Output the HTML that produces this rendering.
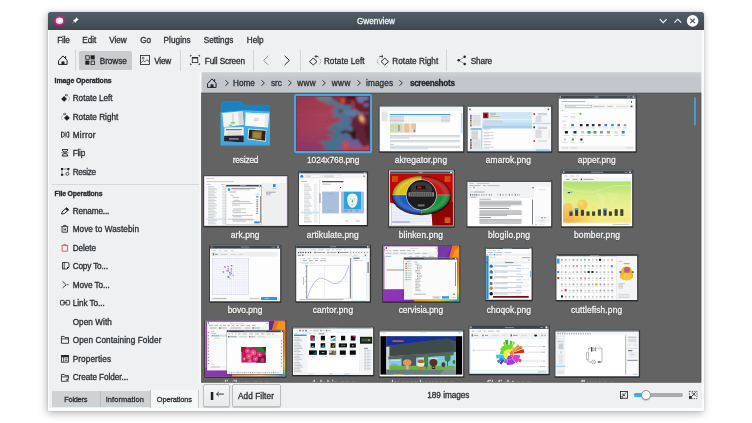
<!DOCTYPE html>
<html><head><meta charset="utf-8"><title>Gwenview</title>
<style>
html,body{margin:0;padding:0;background:#fff;}
body{width:752px;height:423px;position:relative;overflow:hidden;font-family:"Liberation Sans",sans-serif;}
.a{position:absolute;}
.t{position:absolute;white-space:pre;line-height:10px;height:10px;filter:blur(0.3px);-webkit-text-stroke:0.3px;}
svg{position:absolute;overflow:visible;}
#win{left:48px;top:12px;width:656.3px;height:399px;background:#fcfcfc;border-radius:2.5px 2.5px 1px 1px;
 box-shadow:-1px 2px 8px rgba(0,0,0,.30),0 0 2px rgba(0,0,0,.16);}
#tb{left:48px;top:12px;width:656.3px;height:17.8px;border-radius:2.5px 2.5px 0 0;
 background:linear-gradient(#525d66,#465058 65%,#3d464e);}
#content{left:49.3px;top:29.8px;width:652.7px;height:378px;background:#eff0f1;}
.sep{width:1px;background:#d3d4d6;top:50px;height:20.5px;}
.btn{border:1px solid #bcbec0;border-radius:2px;background:linear-gradient(#f4f5f5,#e9eaeb);box-shadow:0 1px 1px rgba(0,0,0,.18);box-sizing:border-box;}
</style></head><body>
<div id="win" class="a"></div>
<div id="tb" class="a"></div>
<div id="content" class="a"></div>

<svg style="left:53px;top:15px" width="13" height="12" viewBox="53 15 13 12"><ellipse cx="59.3" cy="20.9" rx="5.35" ry="4.85" fill="#e6127e"/><ellipse cx="59.5" cy="20.8" rx="3.7" ry="3.25" fill="#dfe3e6"/><ellipse cx="59.8" cy="20.5" rx="2.4" ry="2.0" fill="#f2f4f5"/></svg>
<svg style="left:70.5px;top:17px" width="8" height="8" viewBox="0 0 8 8"><path d="M5.2 0.3 L7.7 2.8 L6.6 3.2 L5.2 4.6 L5.0 6.0 L3.4 4.6 L0.6 7.4 L3.0 4.2 L2.0 3.0 L3.4 2.8 L4.8 1.4 Z" fill="#fcfcfc"/></svg>
<span class="t" style="left:356.90px;top:17.00px;font-size:8.2px;letter-spacing:0.047px;color:#f3f4f5;">Gwenview</span>
<svg style="left:656px;top:14px" width="46" height="14" viewBox="656 14 46 14"><path d="M659.8 19.2 L663.2 22.6 L666.6 19.2" fill="none" stroke="#fcfcfc" stroke-width="1.1"/><path d="M674.4 22.6 L677.8 19.2 L681.2 22.6" fill="none" stroke="#fcfcfc" stroke-width="1.1"/><circle cx="692.6" cy="20.9" r="5.8" fill="#fcfcfc"/><path d="M690.3 18.6 L694.9 23.2 M694.9 18.6 L690.3 23.2" stroke="#3d464e" stroke-width="1.1" fill="none"/></svg>
<span class="t" style="left:57.20px;top:36.00px;font-size:8.2px;letter-spacing:-0.178px;color:#2a2e32;">File</span>
<span class="t" style="left:82.30px;top:36.00px;font-size:8.2px;letter-spacing:-0.058px;color:#2a2e32;">Edit</span>
<span class="t" style="left:109.30px;top:36.00px;font-size:8.2px;letter-spacing:-0.082px;color:#2a2e32;">View</span>
<span class="t" style="left:140.30px;top:36.00px;font-size:8.2px;letter-spacing:-0.269px;color:#2a2e32;">Go</span>
<span class="t" style="left:163.60px;top:36.00px;font-size:8.2px;letter-spacing:0.044px;color:#2a2e32;">Plugins</span>
<span class="t" style="left:203.80px;top:36.00px;font-size:8.2px;letter-spacing:-0.016px;color:#2a2e32;">Settings</span>
<span class="t" style="left:246.80px;top:36.00px;font-size:8.2px;letter-spacing:0.009px;color:#2a2e32;">Help</span>
<div class="a" style="left:78.5px;top:50.6px;width:53.2px;height:19.2px;border-radius:1.5px;background:#c9cbcd;"></div>
<div class="a sep" style="left:75px"></div>
<div class="a sep" style="left:180.2px"></div>
<div class="a sep" style="left:253px"></div>
<div class="a sep" style="left:299.6px"></div>
<div class="a sep" style="left:446.4px"></div>
<span class="t" style="left:99.80px;top:57.00px;font-size:8.2px;letter-spacing:-0.074px;color:#2a2e32;">Browse</span>
<span class="t" style="left:154.20px;top:57.00px;font-size:8.2px;letter-spacing:-0.182px;color:#2a2e32;">View</span>
<span class="t" style="left:204.80px;top:57.00px;font-size:8.2px;letter-spacing:-0.125px;color:#2a2e32;">Full Screen</span>
<span class="t" style="left:323.90px;top:57.00px;font-size:8.2px;letter-spacing:0.062px;color:#2a2e32;">Rotate Left</span>
<span class="t" style="left:392.30px;top:57.00px;font-size:8.2px;letter-spacing:0.035px;color:#2a2e32;">Rotate Right</span>
<span class="t" style="left:470.70px;top:57.00px;font-size:8.2px;letter-spacing:-0.116px;color:#2a2e32;">Share</span>
<svg style="left:57.5px;top:55.2px" width="10" height="10" viewBox="0 0 10 10"><path d="M0.9 5.3 L5 0.9 L9.1 5.3 V9.4 H0.9 Z M7.6 1.5 V3.4" fill="none" stroke="#1f2225" stroke-width="1.0" stroke-linejoin="round" stroke-linecap="round"/><rect x="3.5" y="6.4" width="3.0" height="3.2" fill="#1f2225"/></svg>
<svg style="left:85.1px;top:55.3px" width="10" height="10" viewBox="0 0 16 16"><rect x="1.2" y="1.2" width="5.6" height="5.6" fill="none" stroke="#1f2225" stroke-width="1.3"/><rect x="9" y="0.5" width="6.5" height="6.5" fill="#1f2225"/><rect x="0.5" y="9" width="6.5" height="6.5" fill="#1f2225"/><rect x="9.7" y="9.7" width="5.6" height="5.6" fill="none" stroke="#1f2225" stroke-width="1.3"/></svg>
<svg style="left:140px;top:55.3px" width="10" height="10" viewBox="0 0 16 16"><rect x="0.9" y="0.9" width="14.2" height="14.2" fill="none" stroke="#1f2225" stroke-width="1.3"/><path d="M1.5 12.5 L5 9 L7.5 11 L11 7.5 L14.5 10.5" fill="none" stroke="#1f2225" stroke-width="1.2"/><circle cx="5" cy="5" r="1.5" fill="none" stroke="#1f2225" stroke-width="1"/></svg>
<svg style="left:190px;top:55.3px" width="10" height="10" viewBox="0 0 16 16"><rect x="3.6" y="4.2" width="8.8" height="8" fill="none" stroke="#1f2225" stroke-width="1.3"/><rect x="3.6" y="3.6" width="8.8" height="2" fill="#1f2225"/><path d="M0.6 2.6 V0.6 H2.6 M13.4 0.6 H15.4 V2.6 M15.4 13.4 V15.4 H13.4 M2.6 15.4 H0.6 V13.4" fill="none" stroke="#1f2225" stroke-width="1.3"/></svg>
<svg style="left:262px;top:55px" width="8" height="11" viewBox="262 55 8 11"><path d="M268.4 55.8 L263.6 60.4 L268.4 65" fill="none" stroke="#8a9094" stroke-width="0.95"/></svg>
<svg style="left:283px;top:55px" width="8" height="11" viewBox="283 55 8 11"><path d="M284.6 55.8 L289.4 60.4 L284.6 65" fill="none" stroke="#1f2225" stroke-width="0.95"/></svg>
<svg style="left:308.5px;top:54.8px" width="12" height="11" viewBox="0 0 12 11"><path d="M0.5 6.8 L4.2 3.0 L8.0 6.5 L4.4 10.0 Z" fill="none" stroke="#1f2225" stroke-width="0.95"/><path d="M9.3 2.8 A3.6 3.6 0 0 1 9.3 9.6" fill="none" stroke="#1f2225" stroke-width="0.8" stroke-dasharray="0.7 1.15" opacity="0.75"/><path d="M7.3 0.1 L6.0 1.4 L7.3 2.7 M6.0 1.4 H9.4" fill="none" stroke="#1f2225" stroke-width="0.85"/></svg>
<svg style="left:376.6px;top:54.8px" width="12" height="11" viewBox="0 0 12 11"><path d="M11.5 6.8 L7.8 3.0 L4.0 6.5 L7.6 10.0 Z" fill="none" stroke="#1f2225" stroke-width="0.95"/><path d="M2.7 2.8 A3.6 3.6 0 0 0 2.7 9.6" fill="none" stroke="#1f2225" stroke-width="0.8" stroke-dasharray="0.7 1.15" opacity="0.75"/><path d="M4.7 0.1 L6.0 1.4 L4.7 2.7 M6.0 1.4 H2.6" fill="none" stroke="#1f2225" stroke-width="0.85"/></svg>
<svg style="left:456.5px;top:55px" width="10" height="11" viewBox="0 0 10 11"><path d="M7.6 1.9 L1.8 5.3 L7.6 8.9" fill="none" stroke="#1f2225" stroke-width="0.5" opacity="0.75"/><circle cx="7.7" cy="1.8" r="1.25" fill="#1f2225"/><circle cx="1.7" cy="5.3" r="1.25" fill="#1f2225"/><circle cx="7.7" cy="9" r="1.25" fill="#1f2225"/></svg>
<span class="t" style="left:54.60px;top:76.00px;font-size:6.9px;letter-spacing:-0.074px;color:#25292c;font-weight:700;">Image Operations</span>
<span class="t" style="left:54.60px;top:189.00px;font-size:6.9px;letter-spacing:-0.162px;color:#25292c;font-weight:700;">File Operations</span>
<div class="a" style="left:52px;top:184.4px;width:147px;height:1px;background:#d6d8d9;"></div>
<span class="t" style="left:72.70px;top:94.00px;font-size:8.2px;letter-spacing:-0.010px;color:#2a2e32;">Rotate Left</span>
<span class="t" style="left:72.70px;top:113.00px;font-size:8.2px;letter-spacing:0.010px;color:#2a2e32;">Rotate Right</span>
<span class="t" style="left:72.70px;top:131.00px;font-size:8.2px;letter-spacing:0.282px;color:#2a2e32;">Mirror</span>
<span class="t" style="left:72.70px;top:149.00px;font-size:8.2px;letter-spacing:-0.203px;color:#2a2e32;">Flip</span>
<span class="t" style="left:72.70px;top:168.00px;font-size:8.2px;letter-spacing:-0.328px;color:#2a2e32;">Resize</span>
<span class="t" style="left:72.70px;top:207.00px;font-size:8.2px;letter-spacing:-0.137px;color:#2a2e32;">Rename...</span>
<span class="t" style="left:72.70px;top:225.00px;font-size:8.2px;letter-spacing:0.073px;color:#2a2e32;">Move to Wastebin</span>
<span class="t" style="left:72.70px;top:244.00px;font-size:8.2px;letter-spacing:-0.051px;color:#2a2e32;">Delete</span>
<span class="t" style="left:72.70px;top:262.00px;font-size:8.2px;letter-spacing:-0.157px;color:#2a2e32;">Copy To...</span>
<span class="t" style="left:72.70px;top:281.00px;font-size:8.2px;letter-spacing:-0.058px;color:#2a2e32;">Move To...</span>
<span class="t" style="left:72.70px;top:299.00px;font-size:8.2px;letter-spacing:-0.067px;color:#2a2e32;">Link To...</span>
<span class="t" style="left:72.70px;top:318.00px;font-size:8.2px;letter-spacing:0.062px;color:#2a2e32;">Open With</span>
<span class="t" style="left:72.70px;top:336.00px;font-size:8.2px;letter-spacing:0.083px;color:#2a2e32;">Open Containing Folder</span>
<span class="t" style="left:72.70px;top:355.00px;font-size:8.2px;letter-spacing:0.113px;color:#2a2e32;">Properties</span>
<span class="t" style="left:72.70px;top:373.00px;font-size:8.2px;letter-spacing:-0.064px;color:#2a2e32;">Create Folder...</span>
<svg style="left:60.8px;top:94px" width="9" height="8" viewBox="0 0 9 8"><path d="M0.2 4.9 L3.1 2.0 L6.0 4.9 L3.1 7.8 Z" fill="#1f2225"/><path d="M6.6 1.8 A3.3 3.3 0 0 1 6.9 7.4" fill="none" stroke="#1f2225" stroke-width="0.8" stroke-dasharray="0.7 0.9" opacity="0.8"/><path d="M5.4 0.1 L4.3 1.1 L5.4 2.1 M4.3 1.1 H7.0" fill="none" stroke="#1f2225" stroke-width="0.75"/></svg>
<svg style="left:60.8px;top:112.5px" width="9" height="8" viewBox="0 0 9 8"><path d="M8.8 4.9 L5.9 2.0 L3.0 4.9 L5.9 7.8 Z" fill="#1f2225"/><path d="M2.4 1.8 A3.3 3.3 0 0 0 2.1 7.4" fill="none" stroke="#1f2225" stroke-width="0.8" stroke-dasharray="0.7 0.9" opacity="0.8"/><path d="M3.6 0.1 L4.7 1.1 L3.6 2.1 M4.7 1.1 H2.0" fill="none" stroke="#1f2225" stroke-width="0.75"/></svg>
<svg style="left:60.8px;top:131.4px" width="8.4" height="7.2" viewBox="0 0 8.4 7.2"><path d="M0.6 0.9 C2.6 1.0 3.3 2.2 3.3 3.6 C3.3 5.0 2.6 6.2 0.6 6.3 Z M7.8 0.9 C5.8 1.0 5.1 2.2 5.1 3.6 C5.1 5.0 5.8 6.2 7.8 6.3 Z" fill="none" stroke="#1f2225" stroke-width="1.0" stroke-linejoin="round"/><path d="M4.2 0.4 V6.8" stroke="#1f2225" stroke-width="0.55"/></svg>
<svg style="left:61px;top:149.4px" width="8" height="7.6" viewBox="0 0 8 7.6"><path d="M1.2 0.6 C1.3 2.4 2.6 3.0 4 3.0 C5.4 3.0 6.7 2.4 6.8 0.6 Z M1.2 7.0 C1.3 5.2 2.6 4.6 4 4.6 C5.4 4.6 6.7 5.2 6.8 7.0 Z" fill="none" stroke="#1f2225" stroke-width="1.0" stroke-linejoin="round"/><path d="M0.2 3.8 H7.8" stroke="#1f2225" stroke-width="0.55"/></svg>
<svg style="left:60.8px;top:168px" width="8.4" height="7.8" viewBox="0 0 8.4 7.8"><path d="M1 1 H7.4 M1 1 V6.8 M7.4 1 V3.4 M1 6.8 H3.4" fill="none" stroke="#1f2225" stroke-width="0.5"/><rect x="0" y="0" width="2" height="2" fill="#1f2225"/><rect x="6.4" y="0" width="2" height="2" fill="#1f2225"/><rect x="0" y="5.8" width="2" height="2" fill="#1f2225"/><circle cx="6.4" cy="5.8" r="1.5" fill="none" stroke="#1f2225" stroke-width="0.8"/></svg>
<svg style="left:60.8px;top:207px" width="8.4" height="7.6" viewBox="0 0 8.4 7.6"><path d="M0.6 7.0 L1.2 4.8 L5.4 0.9 L7.5 2.9 L3.2 6.7 Z" fill="none" stroke="#1f2225" stroke-width="1.0" stroke-linejoin="round"/><path d="M4.2 1.9 L5.6 0.5 L7.9 2.6 L6.5 4.0 Z" fill="#1f2225"/></svg>
<svg style="left:61.1px;top:225px" width="7.6" height="7.8" viewBox="0 0 7.6 7.8"><path d="M0.3 1.6 H7.3 M2.6 1.4 V0.4 H5.0 V1.4" fill="none" stroke="#1f2225" stroke-width="0.8"/><path d="M1.1 1.8 V7.2 H6.5 V1.8" fill="none" stroke="#1f2225" stroke-width="0.85"/><path d="M3 3.2 V5.8 M4.6 3.2 V5.8 M3 4.5 H4.6" stroke="#1f2225" stroke-width="0.6" fill="none"/></svg>
<svg style="left:61.3px;top:243.6px" width="7.6" height="7.8" viewBox="0 0 7.6 7.8"><path d="M0.3 1.6 H7.3 M2.6 1.4 V0.4 H5.0 V1.4" fill="none" stroke="#da4453" stroke-width="0.8"/><path d="M1.1 1.8 V7.2 H6.5 V1.8" fill="none" stroke="#da4453" stroke-width="0.85"/></svg>
<svg style="left:61.6px;top:262px" width="7.6" height="7.6" viewBox="0 0 7.6 7.6"><path d="M0.5 0.5 H5.6 Q7.0 0.5 7.0 2 V5 L5 7 H0.5 Z" fill="none" stroke="#1f2225" stroke-width="0.85"/><path d="M7.0 5 H5 V7 Z" fill="#1f2225"/><path d="M2.2 0.5 V7" stroke="#1f2225" stroke-width="0.8"/></svg>
<svg style="left:61.5px;top:280.8px" width="7" height="7.4" viewBox="0 0 7 7.4"><path d="M0.6 0.5 L4.3 3.7 L0.6 6.9" fill="none" stroke="#1f2225" stroke-width="0.85"/><circle cx="5.9" cy="3.7" r="0.6" fill="#1f2225"/></svg>
<svg style="left:59.8px;top:300.3px" width="10.2" height="5.4" viewBox="0 0 10.2 5.4"><rect x="0.45" y="0.45" width="3.8" height="4.5" rx="0.6" fill="none" stroke="#1f2225" stroke-width="0.85"/><rect x="5.95" y="0.45" width="3.8" height="4.5" rx="0.6" fill="none" stroke="#1f2225" stroke-width="0.85"/><path d="M3 2.7 H7.2" stroke="#1f2225" stroke-width="0.8"/></svg>
<svg style="left:61px;top:336px" width="8" height="7.8" viewBox="0 0 8 7.8"><path d="M0.45 0.45 H3.2 L4.0 1.6 H7.5 V7.3 H0.45 Z" fill="none" stroke="#1f2225" stroke-width="0.85"/><path d="M0.45 2.9 H7.5" stroke="#1f2225" stroke-width="0.8"/></svg>
<svg style="left:61px;top:354.9px" width="8" height="7.6" viewBox="0 0 8 7.6"><rect x="0.45" y="0.45" width="7.1" height="6.7" fill="none" stroke="#1f2225" stroke-width="0.85"/><rect x="0.4" y="0.4" width="7.2" height="1.9" fill="#1f2225"/><path d="M2.6 2 V7 M3.8 3.8 H6.4 M3.8 5.4 H6.4" stroke="#1f2225" stroke-width="0.7"/></svg>
<svg style="left:61px;top:373.5px" width="8" height="7.8" viewBox="0 0 8 7.8"><path d="M0.45 0.45 H3.2 L4.0 1.6 H7.5 V7.3 H0.45 Z" fill="none" stroke="#1f2225" stroke-width="0.85"/><path d="M0.45 2.9 H7.5" stroke="#1f2225" stroke-width="0.8"/><path d="M6.2 4.4 V7.6 M4.6 6 H7.8" stroke="#eff0f1" stroke-width="2"/><path d="M6.2 4.6 V7.4 M4.8 6 H7.6" stroke="#1f2225" stroke-width="0.8"/></svg>
<div class="a" style="left:52px;top:391px;width:48px;height:16.4px;background:#cfd1d3;"></div>
<div class="a" style="left:100px;top:391px;width:50px;height:16.4px;background:#cfd1d3;border-left:1px solid #bbbdbf;box-sizing:border-box;"></div>
<div class="a" style="left:150px;top:390px;width:49.3px;height:17.6px;background:#f6f7f7;border-left:1px solid #bbbdbf;border-right:1px solid #c4c6c8;box-sizing:border-box;"></div>
<span class="t" style="left:64.30px;top:395.00px;font-size:7.4px;letter-spacing:-0.268px;color:#2a2e32;">Folders</span>
<span class="t" style="left:105.70px;top:395.00px;font-size:7.4px;letter-spacing:0.116px;color:#2a2e32;">Information</span>
<span class="t" style="left:156.80px;top:395.00px;font-size:7.4px;letter-spacing:-0.110px;color:#2a2e32;">Operations</span>
<svg style="left:0;top:0" width="752" height="423" viewBox="0 0 752 423"><defs><linearGradient id="gUrl" x1="0" y1="0" x2="0" y2="1"><stop offset="0" stop-color="#cdd0d3"/><stop offset="0.3" stop-color="#c3c7cb"/><stop offset="1" stop-color="#c3c7cb"/></linearGradient></defs><rect x="201.3" y="72.2" width="499.9" height="20.8" fill="url(#gUrl)"/><rect x="199.7" y="72.2" width="1.7" height="310.3" fill="#fbfbfb"/><rect x="201.3" y="92.8" width="499.9" height="289.7" fill="#636363"/><rect x="201.6" y="93.1" width="499.3" height="289.1" fill="none" stroke="#4e4e4e" stroke-width="0.6"/></svg>
<svg style="left:206.6px;top:77.6px" width="10" height="10" viewBox="0 0 10 10"><path d="M0.9 5.3 L5 0.9 L9.1 5.3 V9.4 H0.9 Z M7.6 1.5 V3.4" fill="none" stroke="#1f2225" stroke-width="1.0" stroke-linejoin="round" stroke-linecap="round"/><rect x="3.5" y="6.4" width="3.0" height="3.2" fill="#1f2225"/></svg>
<svg style="left:224.6px;top:79.6px" width="4" height="6" viewBox="0 0 4 6"><path d="M0.4 0.3 L3.4 3 L0.4 5.7" fill="none" stroke="#34383c" stroke-width="1"/></svg>
<svg style="left:261.4px;top:79.6px" width="4" height="6" viewBox="0 0 4 6"><path d="M0.4 0.3 L3.4 3 L0.4 5.7" fill="none" stroke="#34383c" stroke-width="1"/></svg>
<svg style="left:287.9px;top:79.6px" width="4" height="6" viewBox="0 0 4 6"><path d="M0.4 0.3 L3.4 3 L0.4 5.7" fill="none" stroke="#34383c" stroke-width="1"/></svg>
<svg style="left:322.1px;top:79.6px" width="4" height="6" viewBox="0 0 4 6"><path d="M0.4 0.3 L3.4 3 L0.4 5.7" fill="none" stroke="#34383c" stroke-width="1"/></svg>
<svg style="left:356.6px;top:79.6px" width="4" height="6" viewBox="0 0 4 6"><path d="M0.4 0.3 L3.4 3 L0.4 5.7" fill="none" stroke="#34383c" stroke-width="1"/></svg>
<svg style="left:399.1px;top:79.6px" width="4" height="6" viewBox="0 0 4 6"><path d="M0.4 0.3 L3.4 3 L0.4 5.7" fill="none" stroke="#34383c" stroke-width="1"/></svg>
<span class="t" style="left:233.00px;top:79.00px;font-size:8.2px;letter-spacing:0.006px;color:#2a2e32;">Home</span>
<span class="t" style="left:270.90px;top:79.00px;font-size:8.2px;letter-spacing:-0.010px;color:#2a2e32;">src</span>
<span class="t" style="left:297.30px;top:79.00px;font-size:8.2px;letter-spacing:0.345px;color:#2a2e32;">www</span>
<span class="t" style="left:331.80px;top:79.00px;font-size:8.2px;letter-spacing:0.411px;color:#2a2e32;">www</span>
<span class="t" style="left:366.00px;top:79.00px;font-size:8.2px;letter-spacing:0.128px;color:#2a2e32;">images</span>
<span class="t" style="left:409.90px;top:79.00px;font-size:8.2px;letter-spacing:-0.319px;color:#1f2326;font-weight:700;">screenshots</span>
<div class="a btn" style="left:202.5px;top:384px;width:27.3px;height:23.3px;"></div>
<div class="a btn" style="left:232.1px;top:384px;width:48.5px;height:23.3px;"></div>
<svg style="left:210px;top:391px" width="15" height="10" viewBox="210 391 15 10"><rect x="210.8" y="392" width="2.5" height="8" fill="#1d2023"/><path d="M216.6 394.1 H223.8 M218.8 392 L216.6 394.1 L218.8 396.2" fill="none" stroke="#1d2023" stroke-width="0.9"/></svg>
<span class="t" style="left:238.00px;top:392.00px;font-size:8.2px;letter-spacing:0.091px;color:#2a2e32;">Add Filter</span>
<span class="t" style="left:427.30px;top:391.00px;font-size:8.2px;letter-spacing:-0.019px;color:#2a2e32;">189 images</span>
<svg style="left:620px;top:391.2px" width="8" height="7.8" viewBox="0 0 8 7.8"><rect x="0.45" y="0.45" width="7" height="6.8" fill="none" stroke="#1f2225" stroke-width="0.85"/><path d="M6.2 1.4 L3.2 4.4 M3.0 2.4 V4.6 H5.2" fill="none" stroke="#1f2225" stroke-width="0.8"/><rect x="0.4" y="5.2" width="2" height="2" fill="none" stroke="#1f2225" stroke-width="0.5"/></svg>
<div class="a" style="left:633.6px;top:393.3px;width:49.1px;height:3.8px;border-radius:2px;background:#a9adb0;"></div>
<div class="a" style="left:633.6px;top:393.3px;width:13px;height:3.8px;border-radius:2px;background:#3daee9;"></div>
<div class="a" style="left:640.7px;top:389.9px;width:10.6px;height:10.6px;border-radius:50%;background:#fbfbfb;border:0.8px solid #8f9396;box-sizing:border-box;box-shadow:0 1px 1px rgba(0,0,0,.2);"></div>
<svg style="left:688.8px;top:391px" width="8.4" height="8" viewBox="0 0 8.4 8"><path d="M0.4 0.4 H8 V7.6 H0.4 Z" fill="none" stroke="#1f2225" stroke-width="0.8" stroke-dasharray="1.2 1.2"/><path d="M3 1.4 L6.6 5 M6.6 1.4 L3 5" stroke="#1f2225" stroke-width="0.9"/><rect x="0.2" y="5" width="2.6" height="2.8" fill="#1f2225"/></svg>
<svg style="left:0;top:0" width="752" height="423" viewBox="0 0 752 423"><defs>
<linearGradient id="gPink" x1="0" y1="0" x2="1" y2="0.2"><stop offset="0" stop-color="#9a3850"/><stop offset="0.45" stop-color="#a8425a"/><stop offset="1" stop-color="#8e2f45"/></linearGradient>
<linearGradient id="gPinkV" x1="0" y1="0" x2="0" y2="1"><stop offset="0" stop-color="#8a2a2c" stop-opacity="0.35"/><stop offset="0.45" stop-color="#a03a5a" stop-opacity="0"/><stop offset="1" stop-color="#7c2f72" stop-opacity="0.7"/></linearGradient>
<radialGradient id="gGlow" cx="0.5" cy="0.5" r="0.5"><stop offset="0" stop-color="#ffd9a0"/><stop offset="0.45" stop-color="#f0a070" stop-opacity="0.8"/><stop offset="1" stop-color="#c05050" stop-opacity="0"/></radialGradient>
<linearGradient id="gBomber" x1="0" y1="0" x2="0" y2="1"><stop offset="0" stop-color="#aee072"/><stop offset="0.35" stop-color="#d9ee88"/><stop offset="0.7" stop-color="#f3ee92"/><stop offset="1" stop-color="#f7e67a"/></linearGradient>
<radialGradient id="gBomber2" cx="0.08" cy="0.95" r="0.45"><stop offset="0" stop-color="#f7a93a"/><stop offset="0.6" stop-color="#f9c94e" stop-opacity="0.55"/><stop offset="1" stop-color="#f6dc60" stop-opacity="0"/></radialGradient>
<linearGradient id="gWallR" x1="0" y1="0" x2="0" y2="1"><stop offset="0" stop-color="#f26a12"/><stop offset="0.55" stop-color="#f3a21c"/><stop offset="0.75" stop-color="#e8d23a"/><stop offset="1" stop-color="#3fb5a5"/></linearGradient>
<linearGradient id="gWallB" x1="0" y1="0" x2="1" y2="0"><stop offset="0" stop-color="#f09a18"/><stop offset="0.55" stop-color="#f2d628"/><stop offset="0.8" stop-color="#7fca6a"/><stop offset="1" stop-color="#2f9fb8"/></linearGradient>
<linearGradient id="gPurp" x1="0" y1="0" x2="1" y2="1"><stop offset="0" stop-color="#a23fc8"/><stop offset="1" stop-color="#7b2aa6"/></linearGradient>
<linearGradient id="gFold" x1="0" y1="0" x2="0" y2="1"><stop offset="0" stop-color="#46b4ee"/><stop offset="1" stop-color="#3aa6e2"/></linearGradient>
<filter id="fSoft" x="-5%" y="-5%" width="110%" height="110%"><feGaussianBlur stdDeviation="0.85"/></filter>
<radialGradient id="gBlk" cx="0.5" cy="0.5" r="0.5"><stop offset="0" stop-color="#000" stop-opacity="0"/><stop offset="0.62" stop-color="#000" stop-opacity="0"/><stop offset="0.8" stop-color="#fff" stop-opacity="0.10"/><stop offset="1" stop-color="#000" stop-opacity="0.42"/></radialGradient>
<linearGradient id="gBlue" x1="0" y1="0" x2="0.6" y2="1"><stop offset="0" stop-color="#58748f"/><stop offset="0.55" stop-color="#4f7190"/><stop offset="1" stop-color="#56668f"/></linearGradient>
<clipPath id="cSel"><rect x="296.4" y="96.3" width="73.3" height="54.4"/></clipPath>
<clipPath id="cView"><rect x="201.3" y="92.8" width="499.9" height="289.7"/></clipPath>
</defs>
<g clip-path="url(#cView)">
<path d="M220.8 101.0 H241.6 L244.6 104.8 H269.6 V145.4 H220.8 Z" fill="#1b82c2" />
<path d="M220.6 112.2 L245 110.2 L270 111.6 V145.5 H220.6 Z" fill="url(#gFold)" />
<path d="M222.3 113.0 L242.6 111.2 L243.8 124.8 L223.6 127.2 Z" fill="#f4f3f0" />
<path d="M231.6 113.5 L233.4 113.3 L234.2 124.4 L232.4 124.6 Z" fill="#dcdad6" />
<path d="M238.0 112.4 L242.4 112.0 L243.4 124.2 L239.0 124.8 Z" fill="#d9d8d6" />
<rect x="230.60" y="122.20" width="4.40" height="1.20" fill="#45e04a" />
<rect x="228.80" y="124.60" width="3.40" height="1.20" fill="#45e04a" />
<path d="M245.6 112.6 L268.8 113.8 L268.0 127.4 L245.0 125.8 Z" fill="#fafafa" />
<path d="M245.6 112.6 L268.8 113.8 L268.7 115.0 L245.5 113.8 Z" fill="#e6e6e6" />
<rect x="254.40" y="118.40" width="3.60" height="2.60" fill="#dfe6f2" stroke="#b5bfd0" stroke-width="0.4"/>
<path d="M265.0 114.5 L268.6 114.8 L267.9 127.0 L264.4 126.8 Z" fill="#e6e9ee" />
<path d="M224.4 127.6 L243.6 127.0 L243.8 142.4 L224.0 141.2 Z" fill="#f1f1f1" />
<path d="M224.2 135.8 L243.7 135.6 L243.8 142.4 L224.0 141.2 Z" fill="#26262a" />
<rect x="226.00" y="129.20" width="15.80" height="1.00" fill="#55585c" />
<path d="M226.5 132.00 H241.5 M226.5 133.20 H241.5 M226.5 134.40 H241.5" stroke="#b8b8b8" stroke-width="0.4" opacity="1" fill="none"/>
<rect x="229.00" y="138.20" width="9.60" height="1.40" fill="#9a8fa8" />
<path d="M248.4 128.6 L266.4 130.0 L265.6 141.8 L247.6 139.2 Z" fill="#f3f3f3" />
<path d="M249.2 129.6 L265.8 130.8 L265.0 140.8 L248.4 138.6 Z" fill="#2e2412" />
<path d="M252.4 131.0 L262.0 131.6 L261.4 139.6 L251.6 138.4 Z" fill="#8a6a2a" />
<path d="M253.6 132.4 L260.8 132.8 L260.4 138.4 L253.0 137.4 Z" fill="#a88a3e" opacity="0.8"/>
<rect x="294.10" y="93.90" width="77.90" height="59.30" fill="#3daee9" rx="2"/>
<rect x="296.40" y="96.30" width="73.30" height="54.40" fill="url(#gPink)" />
<g clip-path="url(#cSel)"><g filter="url(#fSoft)">
<rect x="296.40" y="96.30" width="73.30" height="54.40" fill="url(#gPinkV)" />
<path d="M313.5 95.5 L314.8 100.2 L319.7 101.0 L321.0 102.7 L324.3 103.1 L326.0 104.8 L330.5 104.8 L333.0 106.4 L331.3 108.5 L328.9 109.3 L328.9 111.8 L331.3 113.5 L329.3 115.9 L331.3 118.0 L335.5 117.6 L338.4 118.4 L336.3 120.9 L335.9 121.7 L331.3 122.5 L328.9 124.1 L328.9 126.2 L324.3 127.5 L323.5 129.1 L326.4 130.3 L331.3 131.6 L332.6 133.2 L328.9 134.1 L325.1 133.7 L324.7 135.3 L328.4 136.6 L329.3 138.6 L326.4 139.9 L322.2 141.5 L318.9 140.3 L317.3 141.9 L318.9 144.0 L321.8 144.8 L321.8 151.5 L371 151.5 L371 95.5 Z" fill="#b04a5e" opacity="0.4"/>
<path d="M317.0 95.5 L318.3 100.2 L323.2 101.0 L324.5 102.7 L327.8 103.1 L329.5 104.8 L334.0 104.8 L336.5 106.4 L334.8 108.5 L332.4 109.3 L332.4 111.8 L334.8 113.5 L332.8 115.9 L334.8 118.0 L339.0 117.6 L341.9 118.4 L339.8 120.9 L339.4 121.7 L334.8 122.5 L332.4 124.1 L332.4 126.2 L327.8 127.5 L327.0 129.1 L329.9 130.3 L334.8 131.6 L336.1 133.2 L332.4 134.1 L328.6 133.7 L328.2 135.3 L331.9 136.6 L332.8 138.6 L329.9 139.9 L325.7 141.5 L322.4 140.3 L320.8 141.9 L322.4 144.0 L325.3 144.8 L325.3 151.5 L371 151.5 L371 95.5 Z" fill="url(#gBlue)" />
<path d="M327.8 127.5 L327.0 129.1 L329.9 130.3 L334.8 131.6 L336.1 133.2 L332.4 134.1 L328.6 133.7 L328.2 135.3 L331.9 136.6 L332.8 138.6 L329.9 139.9 L325.7 141.5 L322.4 140.3 L320.8 141.9 L322.4 144 L325.3 144.8 V151.5 H334 L337 141 L340 133 L336 127 Z" fill="#3a7488" opacity="0.75"/>
<path d="M317 95.5 L318.3 100.2 L323.2 101 L330 100.5 L333 98 L331 95.5 Z" fill="#6a8078" opacity="0.8"/>
<path d="M331 95.5 H371 V114 L360 112 L356 109.5 L351.5 110 L351.4 105 L344 104.5 L338 102 L333.5 99.5 Z" fill="#6e1e2c" />
<path d="M345.5 95.5 H357 L355 98.4 L347.5 98.2 Z" fill="#1c0a10" opacity="0.9"/>
<ellipse cx="342.8" cy="100.4" rx="2.4" ry="3.0" fill="#e2523a" opacity="0.8"/>
<ellipse cx="338" cy="98.4" rx="3.5" ry="1.8" fill="#c02a3a" opacity="0.7"/>
<path d="M351.2 100.6 L353.8 100.4 L355.6 112 L353 112.4 Z" fill="#d86a78" opacity="0.45"/>
<path d="M356 95.5 H368 L368.6 99.5 L364 100.2 L362.5 103 L358.5 102.6 L357 99.5 Z" fill="#5f7cae" />
<path d="M363 104 L368.6 103.6 L369 106.2 L364 106.6 Z" fill="#5f7cae" opacity="0.9"/>
<path d="M365.5 113 L369.2 112.8 L369.4 115.4 L366 115.6 Z" fill="#6078a8" opacity="0.85"/>
<path d="M344 110.5 L351.5 110 L356 109.5 L359.5 112.5 L358.5 116.5 L353.5 118.2 L349 116 L345.5 114 Z" fill="#5c78a4" />
<path d="M352 119 L357 114.5 L371 113.5 V146 L363 147 L357.2 139 L357.2 130.8 L353 130 L351 124 Z" fill="#622236" />
<path d="M364 126 L371 124 V140 L366 138 Z" fill="#4a1420" opacity="0.6"/>
<ellipse cx="361.8" cy="118.6" rx="4.2" ry="7.2" fill="url(#gGlow)" transform="rotate(-24 361.8 118.6)"/>
<path d="M339.8 132.4 L344.8 130.3 L351.4 131.6 L353 130 L357.2 130.8 L356.4 135.7 L357.2 139 L353 139.9 L350.6 136.6 L349.7 134.1 L346.4 132.4 L342.3 133.7 Z" fill="#3a1418" />
<path d="M349.7 124 L354.7 124.2 L354.2 125.9 L350 125.8 Z" fill="#7a1a22" />
<path d="M349 116 L353 116.2 L352.6 118 L349.4 117.8 Z" fill="#8a2a30" opacity="0.9"/>
<path d="M338 109 L342.6 109.4 L343 112.6 L339 113 Z" fill="#5a3a3a" opacity="0.7"/>
<path d="M349.7 134.1 L350.6 136.6 L353 139.9 L357.2 139 L363 147 L356 147.3 L349 146.5 L347 141 Z" fill="#6a5e96" />
<path d="M342.3 151.5 V143 L344.5 140.7 L348 141 L349 146.5 L356 147.3 L363 147 L368.5 145 L371 146 V151.5 Z" fill="#b8404e" />
<path d="M343 143.5 L347.6 142 L348.4 146.4 L344 150 Z" fill="#cc5060" opacity="0.8"/>
</g></g>
<rect x="296.40" y="96.30" width="73.30" height="54.40" fill="none" stroke="#7a1420" stroke-width="0.8" opacity="0.65"/>
<rect x="378.70" y="105.10" width="85.80" height="48.00" fill="#262626" opacity="0.5" rx="1"/>
<rect x="379.20" y="105.50" width="84.80" height="46.90" fill="#1c1c1c" opacity="0.7" rx="0.4"/>
<rect x="379.60" y="105.80" width="83.60" height="45.50" fill="#fdfdfd" />
<rect x="379.60" y="105.80" width="83.60" height="1.00" fill="#5a646c" />
<rect x="380.00" y="106.80" width="82.80" height="1.80" fill="#f0f1f2" />
<rect x="380.40" y="109.40" width="82.00" height="1.20" fill="#eceded" />
<rect x="389.70" y="114.00" width="60.70" height="1.20" fill="#3c9fe0" />
<path d="M389.7 116.60 H450.4 M389.7 117.90 H450.4 M389.7 119.20 H450.4 M389.7 120.50 H450.4 M389.7 121.80 H450.4" stroke="#dfe3e6" stroke-width="0.5" opacity="1" fill="none"/>
<path d="M389.7 116.60 H404.0 M389.7 117.90 H404.0 M389.7 119.20 H404.0 M389.7 120.50 H404.0 M389.7 121.80 H404.0" stroke="#8a8f94" stroke-width="0.5" opacity="0.7" fill="none"/>
<path d="M441.0 116.60 H450.0 M441.0 117.90 H450.0 M441.0 119.20 H450.0 M441.0 120.50 H450.0 M441.0 121.80 H450.0" stroke="#9aa0a4" stroke-width="0.5" opacity="0.7" fill="none"/>
<path d="M381.5 112.00 H387.5 M381.5 113.10 H387.5 M381.5 114.20 H387.5 M381.5 115.30 H387.5 M381.5 116.40 H387.5 M381.5 117.50 H387.5 M381.5 118.60 H387.5 M381.5 119.70 H387.5 M381.5 120.80 H387.5" stroke="#a8adb2" stroke-width="0.45" opacity="0.8" fill="none"/>
<rect x="461.00" y="113.00" width="1.60" height="20.00" fill="#bfe0f6" />
<rect x="390.00" y="123.40" width="26.00" height="9.20" fill="#e6dfcc" />
<rect x="390.00" y="123.40" width="12.00" height="9.20" fill="#c9dcae" opacity="0.8"/>
<rect x="404.50" y="123.60" width="4.50" height="8.80" fill="#e8b98e" opacity="0.8"/>
<rect x="411.50" y="123.60" width="4.50" height="5.40" fill="#e2c29e" opacity="0.9"/>
<rect x="398.00" y="125.00" width="2.00" height="6.00" fill="#7f8a9a" opacity="0.6"/>
<rect x="413.60" y="129.60" width="1.60" height="2.40" fill="#5c6670" opacity="0.8"/>
<path d="M390.0 135.60 H460.0 M390.0 136.80 H460.0" stroke="#7f868c" stroke-width="0.5" opacity="0.75" fill="none"/>
<path d="M390.0 138.00 H409.0" stroke="#6aa0d8" stroke-width="0.5" opacity="0.9" fill="none"/>
<path d="M390.0 140.60 H460.0 M390.0 141.80 H460.0" stroke="#7f868c" stroke-width="0.5" opacity="0.7" fill="none"/>
<path d="M390.0 144.40 H394.0" stroke="#70767c" stroke-width="0.5" opacity="0.8" fill="none"/>
<path d="M390.0 146.20 H460.0 M390.0 147.40 H460.0" stroke="#7f868c" stroke-width="0.5" opacity="0.7" fill="none"/>
<path d="M390.0 148.80 H428.0" stroke="#6aa0d8" stroke-width="0.5" opacity="0.8" fill="none"/>
<rect x="466.70" y="105.10" width="85.80" height="48.00" fill="#262626" opacity="0.5" rx="1"/>
<rect x="467.20" y="105.50" width="84.80" height="46.90" fill="#1c1c1c" opacity="0.7" rx="0.4"/>
<rect x="467.60" y="105.80" width="83.60" height="45.50" fill="#fdfdfd" />
<rect x="467.60" y="105.80" width="83.60" height="1.10" fill="#4f5961" />
<rect x="468.00" y="106.90" width="82.80" height="4.50" fill="#f7f8f8" />
<rect x="469.20" y="108.60" width="1.40" height="1.60" fill="#555a60" />
<rect x="547.60" y="108.60" width="1.40" height="1.60" fill="#555a60" />
<rect x="482.40" y="112.00" width="49.80" height="13.40" fill="#cfe6f5" />
<rect x="483.00" y="112.60" width="5.40" height="5.60" fill="#d8131c" />
<rect x="484.60" y="114.00" width="2.00" height="3.40" fill="#2a0608" />
<path d="M490.0 113.40 H496.0 M490.0 114.60 H496.0" stroke="#8aa0b0" stroke-width="0.5" opacity="1" fill="none"/>
<rect x="489.60" y="116.00" width="10.00" height="1.00" fill="#c9c39a" />
<rect x="482.40" y="119.00" width="49.80" height="0.60" fill="#f2f8fc" />
<rect x="482.40" y="122.60" width="49.80" height="2.80" fill="#c3dcee" />
<rect x="484.60" y="120.40" width="18.00" height="2.20" fill="#cfd5da" />
<rect x="482.40" y="125.40" width="49.80" height="2.00" fill="#a8cfea" />
<rect x="482.40" y="127.40" width="49.80" height="1.00" fill="#7db2d8" opacity="0.8"/>
<rect x="468.40" y="112.40" width="13.20" height="38.20" fill="#f4f5f6" />
<rect x="470.20" y="114.80" width="1.40" height="2.00" fill="#3c5a9a" />
<rect x="470.20" y="117.20" width="1.40" height="2.00" fill="#7a4a6a" />
<rect x="470.20" y="119.60" width="1.40" height="2.00" fill="#4a5a8a" />
<rect x="470.20" y="122.00" width="1.40" height="2.00" fill="#d8a030" />
<rect x="470.20" y="124.40" width="1.40" height="2.00" fill="#a03a3a" />
<path d="M472.4 115.60 H480.6 M472.4 116.80 H480.6 M472.4 118.00 H480.6 M472.4 119.20 H480.6 M472.4 120.40 H480.6 M472.4 121.60 H480.6 M472.4 122.80 H480.6 M472.4 124.00 H480.6 M472.4 125.20 H480.6" stroke="#b4b8bc" stroke-width="0.45" opacity="1" fill="none"/>
<rect x="470.60" y="128.40" width="10.60" height="1.20" fill="#3c9fe0" />
<path d="M471.4 131.20 H478.0 M471.4 132.40 H478.0 M471.4 133.60 H478.0 M471.4 134.80 H478.0 M471.4 136.00 H478.0 M471.4 137.20 H478.0 M471.4 138.40 H478.0" stroke="#9aa0a6" stroke-width="0.45" opacity="1" fill="none"/>
<rect x="470.20" y="139.00" width="1.40" height="2.20" fill="#6a3a3a" />
<rect x="470.20" y="141.60" width="1.40" height="2.20" fill="#8a5a4a" />
<rect x="470.20" y="144.20" width="1.40" height="2.20" fill="#5a3a3a" />
<rect x="470.20" y="146.80" width="1.40" height="2.20" fill="#7a4a3a" />
<path d="M472.4 139.80 H480.6 M472.4 141.00 H480.6 M472.4 142.20 H480.6 M472.4 143.40 H480.6 M472.4 144.60 H480.6 M472.4 145.80 H480.6 M472.4 147.00 H480.6 M472.4 148.20 H480.6" stroke="#b4b8bc" stroke-width="0.45" opacity="1" fill="none"/>
<rect x="481.40" y="128.00" width="0.80" height="22.00" fill="#7fc0ee" />
<path d="M483.6 129.00 H491.0" stroke="#8f959a" stroke-width="0.5" opacity="0.8" fill="none"/>
<path d="M483.6 130.00 H489.0" stroke="#b9bdc1" stroke-width="0.4" opacity="0.8" fill="none"/>
<path d="M483.6 132.40 H493.5" stroke="#8f959a" stroke-width="0.5" opacity="0.8" fill="none"/>
<path d="M483.6 133.40 H489.0" stroke="#b9bdc1" stroke-width="0.4" opacity="0.8" fill="none"/>
<path d="M483.6 135.40 H493.5" stroke="#8f959a" stroke-width="0.5" opacity="0.8" fill="none"/>
<path d="M483.6 136.40 H489.0" stroke="#b9bdc1" stroke-width="0.4" opacity="0.8" fill="none"/>
<path d="M483.6 138.40 H493.5" stroke="#8f959a" stroke-width="0.5" opacity="0.8" fill="none"/>
<path d="M483.6 139.40 H489.0" stroke="#b9bdc1" stroke-width="0.4" opacity="0.8" fill="none"/>
<path d="M483.6 141.60 H491.0" stroke="#8f959a" stroke-width="0.5" opacity="0.8" fill="none"/>
<path d="M483.6 142.60 H489.0" stroke="#b9bdc1" stroke-width="0.4" opacity="0.8" fill="none"/>
<path d="M483.6 144.60 H491.0" stroke="#8f959a" stroke-width="0.5" opacity="0.8" fill="none"/>
<path d="M483.6 145.60 H489.0" stroke="#b9bdc1" stroke-width="0.4" opacity="0.8" fill="none"/>
<path d="M483.6 147.40 H493.5" stroke="#8f959a" stroke-width="0.5" opacity="0.8" fill="none"/>
<path d="M483.6 148.40 H489.0" stroke="#b9bdc1" stroke-width="0.4" opacity="0.8" fill="none"/>
<rect x="532.80" y="112.40" width="17.80" height="38.20" fill="#f5f6f7" />
<rect x="533.40" y="113.20" width="1.60" height="1.80" fill="#b03030" />
<rect x="533.40" y="126.40" width="1.60" height="1.80" fill="#2a2a2e" />
<rect x="533.40" y="140.20" width="1.60" height="1.60" fill="#b03030" />
<path d="M538.0 113.60 H547.0 M538.0 114.80 H547.0 M538.0 127.20 H547.0 M538.0 128.40 H547.0 M538.0 141.00 H547.0" stroke="#7c8288" stroke-width="0.45" opacity="0.8" fill="none"/>
<path d="M535.6 116.60 H541.5 M535.6 117.80 H541.5 M535.6 119.00 H541.5 M535.6 120.20 H541.5 M535.6 121.40 H541.5" stroke="#a9aeb2" stroke-width="0.45" opacity="1" fill="none"/>
<rect x="532.80" y="122.80" width="17.80" height="1.40" fill="#b5daf3" />
<path d="M535.6 130.20 H541.5 M535.6 131.40 H541.5 M535.6 132.60 H541.5 M535.6 133.80 H541.5 M535.6 135.00 H541.5 M535.6 136.20 H541.5 M535.6 137.40 H541.5" stroke="#a9aeb2" stroke-width="0.45" opacity="1" fill="none"/>
<path d="M548.6 130.20 H550.0 M548.6 131.40 H550.0 M548.6 132.60 H550.0 M548.6 133.80 H550.0 M548.6 135.00 H550.0 M548.6 136.20 H550.0 M548.6 137.40 H550.0" stroke="#c4c8cc" stroke-width="0.45" opacity="1" fill="none"/>
<rect x="468.00" y="149.20" width="82.80" height="1.80" fill="#d9ecf8" />
<rect x="536.00" y="149.40" width="14.00" height="1.40" fill="#8fcaf0" />
<rect x="557.70" y="94.70" width="79.20" height="58.40" fill="#262626" opacity="0.5" rx="1"/>
<rect x="558.20" y="95.10" width="78.20" height="57.30" fill="#1c1c1c" opacity="0.7" rx="0.4"/>
<rect x="558.60" y="95.40" width="77.00" height="55.90" fill="#fdfdfd" />
<rect x="558.60" y="95.40" width="77.00" height="3.20" fill="#3f4850" />
<rect x="594.60" y="96.60" width="4.00" height="0.80" fill="#aeb4b8" />
<rect x="559.60" y="96.40" width="1.40" height="1.20" fill="#d8dcdf" />
<rect x="632.40" y="96.40" width="2.00" height="1.20" fill="#d8dcdf" />
<rect x="627.00" y="96.60" width="3.60" height="0.80" fill="#9aa0a5" />
<path d="M561.4 101.60 H585.2" stroke="#6a7076" stroke-width="0.6" opacity="0.85" fill="none"/>
<rect x="631.00" y="101.00" width="1.00" height="2.00" fill="#5a6066" />
<rect x="559.40" y="103.60" width="75.40" height="5.60" fill="#f3f4f4" />
<rect x="565.20" y="105.20" width="26.60" height="2.40" fill="#ffffff" stroke="#55aee6" stroke-width="0.5"/>
<path d="M566.4 106.40 H575.6" stroke="#aab0b5" stroke-width="0.5" opacity="1" fill="none"/>
<path d="M593.6 106.40 H604.6" stroke="#767c82" stroke-width="0.5" opacity="0.8" fill="none"/>
<path d="M607.4 106.40 H612.8" stroke="#767c82" stroke-width="0.5" opacity="0.8" fill="none"/>
<path d="M616.4 106.40 H628.4" stroke="#c2c6c9" stroke-width="0.5" opacity="1" fill="none"/>
<rect x="630.60" y="105.60" width="1.80" height="1.60" fill="#4a4f55" />
<path d="M561.8 110.40 H564.4" stroke="#a7abb0" stroke-width="0.5" opacity="1" fill="none"/>
<rect x="573.00" y="113.00" width="1.40" height="1.60" fill="#e9ebec" />
<rect x="571.40" y="113.40" width="4.00" height="0.60" fill="#d5d8da" />
<circle cx="580.4" cy="113.8" r="1.05" fill="#57c13a"/>
<path d="M563.4 116.60 H568.4" stroke="#b4b8bc" stroke-width="0.5" opacity="1" fill="none"/>
<path d="M570.6 116.60 H575.4" stroke="#b4b8bc" stroke-width="0.5" opacity="1" fill="none"/>
<path d="M570.8 117.80 H575.0" stroke="#c4c8cc" stroke-width="0.5" opacity="1" fill="none"/>
<path d="M561.8 121.20 H566.4" stroke="#a7abb0" stroke-width="0.5" opacity="1" fill="none"/>
<rect x="563.50" y="124.00" width="2.60" height="2.20" fill="#d8e2ea" rx="0.5"/>
<path d="M562.4 127.90 H567.2" stroke="#b9bdc1" stroke-width="0.5" opacity="1" fill="none"/>
<rect x="571.30" y="124.00" width="2.60" height="2.20" fill="#1e74e0" rx="0.5"/>
<path d="M570.2 127.90 H575.0" stroke="#b9bdc1" stroke-width="0.5" opacity="1" fill="none"/>
<rect x="579.90" y="124.00" width="2.60" height="2.20" fill="#1a1a1c" rx="0.5"/>
<path d="M578.8 127.90 H583.6" stroke="#b9bdc1" stroke-width="0.5" opacity="1" fill="none"/>
<rect x="586.10" y="124.00" width="2.60" height="2.20" fill="#121214" rx="0.5"/>
<path d="M585.0 127.90 H589.8" stroke="#b9bdc1" stroke-width="0.5" opacity="1" fill="none"/>
<rect x="591.90" y="124.00" width="2.60" height="2.20" fill="#2e3034" rx="0.5"/>
<path d="M590.8 127.90 H595.6" stroke="#b9bdc1" stroke-width="0.5" opacity="1" fill="none"/>
<rect x="598.10" y="124.00" width="2.60" height="2.20" fill="#3a3c40" rx="0.5"/>
<path d="M597.0 127.90 H601.8" stroke="#b9bdc1" stroke-width="0.5" opacity="1" fill="none"/>
<rect x="604.50" y="124.00" width="2.60" height="2.20" fill="#1c8ae6" rx="0.5"/>
<path d="M603.4 127.90 H608.2" stroke="#b9bdc1" stroke-width="0.5" opacity="1" fill="none"/>
<rect x="611.10" y="124.00" width="2.60" height="2.20" fill="#2196f3" rx="0.5"/>
<path d="M610.0 127.90 H614.8" stroke="#b9bdc1" stroke-width="0.5" opacity="1" fill="none"/>
<rect x="617.50" y="124.00" width="2.60" height="2.20" fill="#6a6e72" rx="0.5"/>
<path d="M616.4 127.90 H621.2" stroke="#b9bdc1" stroke-width="0.5" opacity="1" fill="none"/>
<rect x="623.70" y="124.00" width="2.60" height="2.20" fill="#a0a4a8" rx="0.5"/>
<path d="M622.6 127.90 H627.4" stroke="#b9bdc1" stroke-width="0.5" opacity="1" fill="none"/>
<rect x="564.90" y="131.00" width="3.00" height="2.60" fill="#1e1a14" rx="0.4"/>
<path d="M563.8 135.50 H569.0" stroke="#b9bdc1" stroke-width="0.5" opacity="1" fill="none"/>
<rect x="573.50" y="131.00" width="3.00" height="2.60" fill="#16325e" rx="0.4"/>
<path d="M572.4 135.50 H577.6" stroke="#b9bdc1" stroke-width="0.5" opacity="1" fill="none"/>
<rect x="581.10" y="131.00" width="3.00" height="2.60" fill="#c9cdd0" rx="0.4"/>
<path d="M580.0 135.50 H585.2" stroke="#b9bdc1" stroke-width="0.5" opacity="1" fill="none"/>
<rect x="587.50" y="131.00" width="3.00" height="2.60" fill="#2d9e48" rx="0.4"/>
<path d="M586.4 135.50 H591.6" stroke="#b9bdc1" stroke-width="0.5" opacity="1" fill="none"/>
<rect x="593.50" y="131.00" width="3.00" height="2.60" fill="#5aa03c" rx="0.4"/>
<path d="M592.4 135.50 H597.6" stroke="#b9bdc1" stroke-width="0.5" opacity="1" fill="none"/>
<rect x="599.90" y="131.00" width="3.00" height="2.60" fill="#8a94a4" rx="0.4"/>
<path d="M598.8 135.50 H604.0" stroke="#b9bdc1" stroke-width="0.5" opacity="1" fill="none"/>
<rect x="606.90" y="131.00" width="3.00" height="2.60" fill="#c89a4a" rx="0.4"/>
<path d="M605.8 135.50 H611.0" stroke="#b9bdc1" stroke-width="0.5" opacity="1" fill="none"/>
<rect x="614.70" y="131.00" width="3.00" height="2.60" fill="#ead9b6" rx="0.4"/>
<path d="M613.6 135.50 H618.8" stroke="#b9bdc1" stroke-width="0.5" opacity="1" fill="none"/>
<rect x="621.70" y="131.00" width="3.00" height="2.60" fill="#1c8ae6" rx="0.4"/>
<path d="M620.6 135.50 H625.8" stroke="#b9bdc1" stroke-width="0.5" opacity="1" fill="none"/>
<rect x="588.60" y="131.00" width="1.20" height="2.60" fill="#2f7de0" />
<rect x="594.00" y="131.00" width="2.00" height="1.20" fill="#3a7ad8" />
<rect x="564.10" y="138.40" width="2.20" height="2.20" fill="#c4c8cc" rx="0.4"/>
<path d="M562.6 142.40 H567.8" stroke="#b9bdc1" stroke-width="0.5" opacity="1" fill="none"/>
<rect x="571.70" y="138.40" width="2.20" height="2.20" fill="#5f9a48" rx="0.4"/>
<path d="M570.2 142.40 H575.4" stroke="#b9bdc1" stroke-width="0.5" opacity="1" fill="none"/>
<rect x="580.30" y="138.40" width="2.20" height="2.20" fill="#1a1a1c" rx="0.4"/>
<path d="M578.8 142.40 H584.0" stroke="#b9bdc1" stroke-width="0.5" opacity="1" fill="none"/>
<rect x="560.40" y="146.20" width="73.60" height="3.40" fill="#f0f1f2" />
<path d="M561.6 147.90 H568.0" stroke="#c0c4c7" stroke-width="0.6" opacity="1" fill="none"/>
<path d="M570.6 147.90 H577.0" stroke="#c0c4c7" stroke-width="0.6" opacity="1" fill="none"/>
<path d="M626.0 147.90 H632.6" stroke="#c0c4c7" stroke-width="0.6" opacity="1" fill="none"/>
<rect x="203.10" y="175.30" width="85.40" height="52.50" fill="#262626" opacity="0.5" rx="1"/>
<rect x="203.60" y="175.70" width="84.40" height="51.40" fill="#1c1c1c" opacity="0.7" rx="0.4"/>
<rect x="204.00" y="176.00" width="83.20" height="50.00" fill="#fbfbfb" />
<rect x="204.30" y="176.30" width="82.60" height="49.40" fill="none" stroke="#cdbbdc" stroke-width="0.7"/>
<path d="M206.0 178.60 H214.0" stroke="#9a9fa4" stroke-width="0.5" opacity="1" fill="none"/>
<path d="M206.4 181.60 H234.0" stroke="#8c9196" stroke-width="0.6" opacity="0.8" fill="none"/>
<rect x="262.20" y="183.00" width="23.60" height="42.00" fill="#efefef" />
<rect x="273.00" y="184.00" width="2.60" height="3.00" fill="#1f8de8" rx="0.6"/>
<path d="M272.6 188.40 H276.2" stroke="#a5a9ad" stroke-width="0.6" opacity="1" fill="none"/>
<path d="M266.0 192.20 H275.6" stroke="#5a5f64" stroke-width="0.6" opacity="0.85" fill="none"/>
<path d="M266.0 193.60 H271.4" stroke="#7a7f84" stroke-width="0.5" opacity="0.85" fill="none"/>
<path d="M266.0 194.80 H270.4" stroke="#7a7f84" stroke-width="0.5" opacity="0.8" fill="none"/>
<path d="M206.4 184.40 H211.0" stroke="#9a9fa4" stroke-width="0.5" opacity="1" fill="none"/>
<path d="M221.0 184.40 H225.0" stroke="#9a9fa4" stroke-width="0.5" opacity="1" fill="none"/>
<path d="M208.0 186.60 H214.0" stroke="#7f858a" stroke-width="0.5" opacity="0.7" fill="none"/>
<path d="M222.2 186.60 H225.4" stroke="#a9adb1" stroke-width="0.5" opacity="0.8" fill="none"/>
<path d="M208.0 188.15 H215.6" stroke="#7f858a" stroke-width="0.5" opacity="0.7" fill="none"/>
<path d="M222.2 188.15 H225.4" stroke="#a9adb1" stroke-width="0.5" opacity="0.8" fill="none"/>
<path d="M208.0 189.70 H217.2" stroke="#7f858a" stroke-width="0.5" opacity="0.7" fill="none"/>
<path d="M222.2 189.70 H225.4" stroke="#a9adb1" stroke-width="0.5" opacity="0.8" fill="none"/>
<path d="M208.0 191.25 H214.8" stroke="#7f858a" stroke-width="0.5" opacity="0.7" fill="none"/>
<path d="M222.2 191.25 H225.4" stroke="#a9adb1" stroke-width="0.5" opacity="0.8" fill="none"/>
<path d="M208.0 192.80 H216.4" stroke="#7f858a" stroke-width="0.5" opacity="0.7" fill="none"/>
<path d="M222.2 192.80 H225.4" stroke="#a9adb1" stroke-width="0.5" opacity="0.8" fill="none"/>
<path d="M208.0 194.35 H214.0" stroke="#7f858a" stroke-width="0.5" opacity="0.7" fill="none"/>
<path d="M222.2 194.35 H225.4" stroke="#a9adb1" stroke-width="0.5" opacity="0.8" fill="none"/>
<path d="M208.0 195.90 H215.6" stroke="#7f858a" stroke-width="0.5" opacity="0.7" fill="none"/>
<path d="M222.2 195.90 H225.4" stroke="#a9adb1" stroke-width="0.5" opacity="0.8" fill="none"/>
<path d="M208.0 197.45 H217.2" stroke="#7f858a" stroke-width="0.5" opacity="0.7" fill="none"/>
<path d="M222.2 197.45 H225.4" stroke="#a9adb1" stroke-width="0.5" opacity="0.8" fill="none"/>
<path d="M208.0 199.00 H214.8" stroke="#7f858a" stroke-width="0.5" opacity="0.7" fill="none"/>
<path d="M222.2 199.00 H225.4" stroke="#a9adb1" stroke-width="0.5" opacity="0.8" fill="none"/>
<path d="M208.0 200.55 H216.4" stroke="#7f858a" stroke-width="0.5" opacity="0.7" fill="none"/>
<path d="M222.2 200.55 H225.4" stroke="#a9adb1" stroke-width="0.5" opacity="0.8" fill="none"/>
<path d="M208.0 202.10 H214.0" stroke="#7f858a" stroke-width="0.5" opacity="0.7" fill="none"/>
<path d="M222.2 202.10 H225.4" stroke="#a9adb1" stroke-width="0.5" opacity="0.8" fill="none"/>
<path d="M208.0 203.65 H215.6" stroke="#7f858a" stroke-width="0.5" opacity="0.7" fill="none"/>
<path d="M222.2 203.65 H225.4" stroke="#a9adb1" stroke-width="0.5" opacity="0.8" fill="none"/>
<path d="M208.0 205.20 H217.2" stroke="#7f858a" stroke-width="0.5" opacity="0.7" fill="none"/>
<path d="M222.2 205.20 H225.4" stroke="#a9adb1" stroke-width="0.5" opacity="0.8" fill="none"/>
<path d="M208.0 206.75 H214.8" stroke="#7f858a" stroke-width="0.5" opacity="0.7" fill="none"/>
<path d="M222.2 206.75 H225.4" stroke="#a9adb1" stroke-width="0.5" opacity="0.8" fill="none"/>
<path d="M208.0 208.30 H216.4" stroke="#7f858a" stroke-width="0.5" opacity="0.7" fill="none"/>
<path d="M222.2 208.30 H225.4" stroke="#a9adb1" stroke-width="0.5" opacity="0.8" fill="none"/>
<path d="M208.0 209.85 H214.0" stroke="#7f858a" stroke-width="0.5" opacity="0.7" fill="none"/>
<path d="M222.2 209.85 H225.4" stroke="#a9adb1" stroke-width="0.5" opacity="0.8" fill="none"/>
<path d="M208.0 211.40 H215.6" stroke="#7f858a" stroke-width="0.5" opacity="0.7" fill="none"/>
<path d="M222.2 211.40 H225.4" stroke="#a9adb1" stroke-width="0.5" opacity="0.8" fill="none"/>
<path d="M208.0 212.95 H217.2" stroke="#7f858a" stroke-width="0.5" opacity="0.7" fill="none"/>
<path d="M222.2 212.95 H225.4" stroke="#a9adb1" stroke-width="0.5" opacity="0.8" fill="none"/>
<path d="M208.0 214.50 H214.8" stroke="#7f858a" stroke-width="0.5" opacity="0.7" fill="none"/>
<path d="M222.2 214.50 H225.4" stroke="#a9adb1" stroke-width="0.5" opacity="0.8" fill="none"/>
<path d="M208.0 216.05 H216.4" stroke="#7f858a" stroke-width="0.5" opacity="0.7" fill="none"/>
<path d="M222.2 216.05 H225.4" stroke="#a9adb1" stroke-width="0.5" opacity="0.8" fill="none"/>
<path d="M208.0 217.60 H214.0" stroke="#7f858a" stroke-width="0.5" opacity="0.7" fill="none"/>
<path d="M222.2 217.60 H225.4" stroke="#a9adb1" stroke-width="0.5" opacity="0.8" fill="none"/>
<path d="M208.0 219.15 H215.6" stroke="#7f858a" stroke-width="0.5" opacity="0.7" fill="none"/>
<path d="M222.2 219.15 H225.4" stroke="#a9adb1" stroke-width="0.5" opacity="0.8" fill="none"/>
<path d="M208.0 220.70 H217.2" stroke="#7f858a" stroke-width="0.5" opacity="0.7" fill="none"/>
<path d="M222.2 220.70 H225.4" stroke="#a9adb1" stroke-width="0.5" opacity="0.8" fill="none"/>
<path d="M208.0 222.25 H214.8" stroke="#7f858a" stroke-width="0.5" opacity="0.7" fill="none"/>
<path d="M222.2 222.25 H225.4" stroke="#a9adb1" stroke-width="0.5" opacity="0.8" fill="none"/>
<path d="M208.0 223.80 H216.4" stroke="#7f858a" stroke-width="0.5" opacity="0.7" fill="none"/>
<path d="M222.2 223.80 H225.4" stroke="#a9adb1" stroke-width="0.5" opacity="0.8" fill="none"/>
<rect x="206.00" y="218.60" width="20.00" height="1.20" fill="#bfe0f6" />
<rect x="225.60" y="184.60" width="36.40" height="40.00" fill="#3a3a3a" opacity="0.35"/>
<rect x="226.20" y="185.00" width="35.00" height="39.20" fill="#fcfcfc" />
<rect x="226.20" y="185.00" width="35.00" height="1.50" fill="#414a52" />
<rect x="240.00" y="185.40" width="6.00" height="0.60" fill="#b6bbbf" />
<rect x="258.60" y="185.30" width="1.60" height="0.90" fill="#e6e8ea" />
<circle cx="229.0" cy="189.6" r="1.3" fill="#2a8fe6"/>
<path d="M231.4 188.40 H255.6" stroke="#53585e" stroke-width="0.7" opacity="0.9" fill="none"/>
<path d="M231.4 189.80 H250.0" stroke="#8a8f94" stroke-width="0.5" opacity="0.9" fill="none"/>
<path d="M229.4 192.00 H236.4" stroke="#73787d" stroke-width="0.6" opacity="0.9" fill="none"/>
<path d="M230.4 195.20 H233.6" stroke="#6d7277" stroke-width="0.5" opacity="0.8" fill="none"/>
<path d="M232.6 197.40 H239.0" stroke="#6d7277" stroke-width="0.5" opacity="0.8" fill="none"/>
<path d="M233.6 200.40 H239.6" stroke="#6d7277" stroke-width="0.5" opacity="0.8" fill="none"/>
<path d="M231.8 201.60 H250.0" stroke="#6d7277" stroke-width="0.5" opacity="0.8" fill="none"/>
<path d="M232.0 203.40 H252.6" stroke="#6d7277" stroke-width="0.5" opacity="0.8" fill="none"/>
<path d="M232.0 205.20 H240.0" stroke="#6d7277" stroke-width="0.5" opacity="0.8" fill="none"/>
<path d="M233.0 209.00 H246.0" stroke="#6d7277" stroke-width="0.5" opacity="0.8" fill="none"/>
<path d="M232.0 210.80 H241.0" stroke="#6d7277" stroke-width="0.5" opacity="0.8" fill="none"/>
<path d="M233.0 212.60 H246.0" stroke="#6d7277" stroke-width="0.5" opacity="0.8" fill="none"/>
<path d="M232.0 215.40 H252.8" stroke="#6d7277" stroke-width="0.5" opacity="0.8" fill="none"/>
<path d="M233.0 216.80 H242.0" stroke="#6d7277" stroke-width="0.5" opacity="0.8" fill="none"/>
<path d="M232.0 219.80 H254.0" stroke="#6d7277" stroke-width="0.5" opacity="0.8" fill="none"/>
<path d="M233.0 221.20 H246.0" stroke="#6d7277" stroke-width="0.5" opacity="0.8" fill="none"/>
<rect x="255.60" y="193.60" width="3.20" height="2.00" fill="#cfe3f3" />
<rect x="256.20" y="196.20" width="2.20" height="1.40" fill="#5a8ac0" />
<rect x="256.40" y="199.40" width="1.80" height="0.90" fill="#5a6068" opacity="0.8"/>
<rect x="256.40" y="201.10" width="1.80" height="0.90" fill="#5a6068" opacity="0.8"/>
<rect x="256.40" y="202.80" width="1.80" height="0.90" fill="#5a6068" opacity="0.8"/>
<rect x="256.40" y="204.50" width="1.80" height="0.90" fill="#5a6068" opacity="0.8"/>
<rect x="256.40" y="206.20" width="1.80" height="0.90" fill="#5a6068" opacity="0.8"/>
<rect x="256.40" y="207.90" width="1.80" height="0.90" fill="#5a6068" opacity="0.8"/>
<rect x="256.40" y="209.60" width="1.80" height="0.90" fill="#5a6068" opacity="0.8"/>
<rect x="256.40" y="211.30" width="1.80" height="0.90" fill="#5a6068" opacity="0.8"/>
<rect x="256.40" y="213.00" width="1.80" height="0.90" fill="#5a6068" opacity="0.8"/>
<rect x="260.00" y="196.00" width="0.80" height="27.00" fill="#5a5f66" opacity="0.85"/>
<path d="M227.6 219.20 H253.0" stroke="#9a9fa4" stroke-width="0.5" opacity="1" fill="none"/>
<rect x="254.20" y="221.40" width="5.60" height="2.00" fill="#2d97ea" />
<rect x="298.10" y="171.30" width="70.00" height="55.50" fill="#262626" opacity="0.5" rx="1"/>
<rect x="298.60" y="171.70" width="69.00" height="54.40" fill="#1c1c1c" opacity="0.7" rx="0.4"/>
<rect x="299.00" y="172.00" width="67.80" height="53.00" fill="#fdfdfd" />
<rect x="299.00" y="172.00" width="67.80" height="1.60" fill="#444d55" />
<rect x="299.60" y="172.30" width="1.40" height="1.00" fill="#48a0e0" />
<rect x="363.80" y="172.40" width="1.80" height="0.90" fill="#d6dadd" />
<rect x="299.40" y="173.60" width="67.00" height="4.80" fill="#f4f5f5" />
<circle cx="301.8" cy="176.2" r="1.5" fill="#2b8fe8"/>
<rect x="304.60" y="175.00" width="16.00" height="2.40" fill="#fafafa" stroke="#c9cdd0" stroke-width="0.4"/>
<rect x="322.60" y="175.00" width="17.80" height="2.40" fill="#fafafa" stroke="#c9cdd0" stroke-width="0.4"/>
<path d="M306.0 176.20 H310.4" stroke="#8a8f94" stroke-width="0.5" opacity="1" fill="none"/>
<path d="M324.0 176.20 H334.0" stroke="#8a8f94" stroke-width="0.5" opacity="1" fill="none"/>
<rect x="363.40" y="175.60" width="1.40" height="1.20" fill="#5b6167" />
<rect x="319.40" y="180.00" width="0.60" height="44.00" fill="#cfd2d4" />
<rect x="319.60" y="193.40" width="0.80" height="9.60" fill="#6f757b" />
<path d="M301.4 181.40 H307.0" stroke="#878c91" stroke-width="0.55" opacity="1" fill="none"/>
<path d="M304.0 184.20 H309.0" stroke="#767b80" stroke-width="0.5" opacity="0.6" fill="none"/>
<path d="M313.6 184.20 H317.2" stroke="#b4b8bc" stroke-width="0.5" opacity="0.8" fill="none"/>
<path d="M304.0 186.18 H309.9" stroke="#767b80" stroke-width="0.5" opacity="0.85" fill="none"/>
<path d="M313.6 186.18 H317.2" stroke="#b4b8bc" stroke-width="0.5" opacity="0.8" fill="none"/>
<path d="M304.0 188.16 H310.8" stroke="#767b80" stroke-width="0.5" opacity="0.6" fill="none"/>
<path d="M313.6 188.16 H317.2" stroke="#b4b8bc" stroke-width="0.5" opacity="0.8" fill="none"/>
<path d="M304.0 190.14 H311.7" stroke="#767b80" stroke-width="0.5" opacity="0.85" fill="none"/>
<path d="M313.6 190.14 H317.2" stroke="#b4b8bc" stroke-width="0.5" opacity="0.8" fill="none"/>
<path d="M304.0 192.12 H309.0" stroke="#767b80" stroke-width="0.5" opacity="0.6" fill="none"/>
<path d="M313.6 192.12 H317.2" stroke="#b4b8bc" stroke-width="0.5" opacity="0.8" fill="none"/>
<path d="M304.0 194.10 H309.9" stroke="#767b80" stroke-width="0.5" opacity="0.85" fill="none"/>
<path d="M313.6 194.10 H317.2" stroke="#b4b8bc" stroke-width="0.5" opacity="0.8" fill="none"/>
<path d="M304.0 196.08 H310.8" stroke="#767b80" stroke-width="0.5" opacity="0.6" fill="none"/>
<path d="M313.6 196.08 H317.2" stroke="#b4b8bc" stroke-width="0.5" opacity="0.8" fill="none"/>
<path d="M304.0 198.06 H311.7" stroke="#767b80" stroke-width="0.5" opacity="0.85" fill="none"/>
<path d="M313.6 198.06 H317.2" stroke="#b4b8bc" stroke-width="0.5" opacity="0.8" fill="none"/>
<path d="M304.0 200.04 H309.0" stroke="#767b80" stroke-width="0.5" opacity="0.6" fill="none"/>
<path d="M313.6 200.04 H317.2" stroke="#b4b8bc" stroke-width="0.5" opacity="0.8" fill="none"/>
<path d="M304.0 202.02 H309.9" stroke="#767b80" stroke-width="0.5" opacity="0.85" fill="none"/>
<path d="M313.6 202.02 H317.2" stroke="#b4b8bc" stroke-width="0.5" opacity="0.8" fill="none"/>
<path d="M304.0 204.00 H310.8" stroke="#767b80" stroke-width="0.5" opacity="0.6" fill="none"/>
<path d="M313.6 204.00 H317.2" stroke="#b4b8bc" stroke-width="0.5" opacity="0.8" fill="none"/>
<path d="M304.0 205.98 H311.7" stroke="#767b80" stroke-width="0.5" opacity="0.85" fill="none"/>
<path d="M313.6 205.98 H317.2" stroke="#b4b8bc" stroke-width="0.5" opacity="0.8" fill="none"/>
<path d="M304.0 207.96 H309.0" stroke="#767b80" stroke-width="0.5" opacity="0.6" fill="none"/>
<path d="M313.6 207.96 H317.2" stroke="#b4b8bc" stroke-width="0.5" opacity="0.8" fill="none"/>
<path d="M304.0 209.94 H309.9" stroke="#767b80" stroke-width="0.5" opacity="0.85" fill="none"/>
<path d="M313.6 209.94 H317.2" stroke="#b4b8bc" stroke-width="0.5" opacity="0.8" fill="none"/>
<path d="M304.0 211.92 H310.8" stroke="#767b80" stroke-width="0.5" opacity="0.6" fill="none"/>
<path d="M313.6 211.92 H317.2" stroke="#b4b8bc" stroke-width="0.5" opacity="0.8" fill="none"/>
<path d="M304.0 213.90 H311.7" stroke="#767b80" stroke-width="0.5" opacity="0.85" fill="none"/>
<path d="M313.6 213.90 H317.2" stroke="#b4b8bc" stroke-width="0.5" opacity="0.8" fill="none"/>
<path d="M304.0 215.88 H309.0" stroke="#767b80" stroke-width="0.5" opacity="0.6" fill="none"/>
<path d="M313.6 215.88 H317.2" stroke="#b4b8bc" stroke-width="0.5" opacity="0.8" fill="none"/>
<path d="M304.0 217.86 H309.9" stroke="#767b80" stroke-width="0.5" opacity="0.85" fill="none"/>
<path d="M313.6 217.86 H317.2" stroke="#b4b8bc" stroke-width="0.5" opacity="0.8" fill="none"/>
<path d="M304.0 219.84 H310.8" stroke="#767b80" stroke-width="0.5" opacity="0.6" fill="none"/>
<path d="M313.6 219.84 H317.2" stroke="#b4b8bc" stroke-width="0.5" opacity="0.8" fill="none"/>
<path d="M304.0 221.82 H311.7" stroke="#767b80" stroke-width="0.5" opacity="0.85" fill="none"/>
<path d="M313.6 221.82 H317.2" stroke="#b4b8bc" stroke-width="0.5" opacity="0.8" fill="none"/>
<rect x="300.60" y="211.60" width="18.40" height="1.80" fill="#c9e4f7" />
<path d="M322.2 181.60 H343.4" stroke="#2f3337" stroke-width="1.3" opacity="0.85" fill="none"/>
<path d="M322.2 184.20 H331.0" stroke="#8a8f94" stroke-width="0.5" opacity="1" fill="none"/>
<rect x="340.00" y="187.00" width="0.90" height="1.00" fill="#3a3e42" />
<rect x="322.20" y="191.60" width="16.70" height="21.80" fill="#a8bfdd" />
<rect x="341.10" y="191.60" width="22.90" height="21.80" fill="#a8bfdd" />
<path d="M328.6 193.80 H333.0" stroke="#8ea4c2" stroke-width="0.5" opacity="1" fill="none"/>
<path d="M327.4 210.40 H331.6" stroke="#8ea4c2" stroke-width="0.5" opacity="1" fill="none"/>
<rect x="333.00" y="209.60" width="1.60" height="1.60" fill="#9fb4d0" />
<rect x="343.90" y="191.80" width="17.10" height="17.40" fill="#27a4e4" />
<path d="M352.4 193.4 C357.4 193.4 358.0 198 357.4 201.4 C357.0 204.4 354.8 207.8 352.4 207.8 C350.0 207.8 347.8 204.4 347.4 201.4 C346.8 198 347.4 193.4 352.4 193.4 Z" fill="#f6f3ef"/>
<rect x="350.00" y="198.60" width="1.20" height="0.80" fill="#58c0f0" />
<rect x="353.60" y="198.60" width="1.20" height="0.80" fill="#58c0f0" />
<path d="M352.4 199.2 L353.3 202.2 H351.5 Z" fill="#1fc44a"/>
<path d="M351.0 204.40 H353.8" stroke="#58c0f0" stroke-width="0.6" opacity="1" fill="none"/>
<path d="M343.6 210.80 H348.6" stroke="#5c6a80" stroke-width="0.6" opacity="1" fill="none"/>
<rect x="350.40" y="210.00" width="1.20" height="1.40" fill="#d0506a" />
<path d="M355.4 210.80 H358.6" stroke="#5c6a80" stroke-width="0.6" opacity="1" fill="none"/>
<rect x="360.20" y="210.00" width="1.40" height="1.40" fill="#9fb4d0" />
<path d="M345.4 221.00 H348.0" stroke="#7f858a" stroke-width="0.55" opacity="1" fill="none"/>
<path d="M356.0 221.00 H359.6" stroke="#7f858a" stroke-width="0.55" opacity="1" fill="none"/>
<rect x="388.10" y="169.70" width="66.80" height="58.40" fill="#262626" opacity="0.5" rx="1"/>
<rect x="388.60" y="170.10" width="65.80" height="57.30" fill="#1c1c1c" opacity="0.7" rx="0.4"/>
<rect x="389.00" y="170.40" width="64.60" height="55.90" fill="#f4f6f6" />
<rect x="389.80" y="171.40" width="63.00" height="2.20" fill="#3d4e57" />
<rect x="418.80" y="172.10" width="3.80" height="0.70" fill="#a9b8bd" />
<rect x="450.00" y="171.80" width="2.00" height="1.40" fill="#dfe6e8" />
<rect x="389.80" y="173.60" width="63.00" height="51.80" fill="#c40606" />
<path d="M431.6 202 L452.8 202 V225.4 H431.6 Z" fill="#8f0505" />
<path d="M389.8 202.6 L431.4 211.8 L432.4 225.4 L389.8 225.4 Z" fill="#f6f8fc" />
<path d="M391.0 206.40 H431.0 M391.0 207.90 H431.0 M391.0 209.40 H431.0 M391.0 210.90 H431.0 M391.0 212.40 H431.0 M391.0 213.90 H431.0 M391.0 215.40 H431.0 M391.0 216.90 H431.0 M391.0 218.40 H431.0 M391.0 219.90 H431.0 M391.0 221.40 H431.0 M391.0 222.90 H431.0" stroke="#b8c6e8" stroke-width="0.4" opacity="0.8" fill="none"/>
<rect x="391.20" y="203.00" width="0.50" height="22.00" fill="#e89aa0" />
<path d="M392.2 222.00 H410.0" stroke="#3c3ce0" stroke-width="0.6" opacity="0.9" fill="none"/>
<rect x="392.00" y="176.20" width="5.80" height="5.60" fill="#d8540a" />
<path d="M392.8 177.60 H397.0 M392.8 179.00 H397.0 M392.8 180.40 H397.0" stroke="#b03c06" stroke-width="0.5" opacity="1" fill="none"/>
<rect x="444.60" y="176.20" width="5.80" height="5.60" fill="#d8540a" />
<circle cx="447.5" cy="179" r="1.5" fill="none" stroke="#b03c06" stroke-width="0.6"/>
<rect x="444.60" y="217.40" width="5.80" height="5.60" fill="#d8540a" />
<ellipse cx="421.4" cy="195.70000000000002" rx="29.9" ry="19.6" fill="#2a0404" opacity="0.85"/>
<path d="M421.4 194.9 L392.2 194.9 A29.2 18.8 0 0 1 421.4 176.1 Z" fill="#e0c416" />
<path d="M421.4 194.9 L421.4 176.1 A29.2 18.8 0 0 1 450.59999999999997 194.9 Z" fill="#c21616" />
<path d="M421.4 194.9 L450.59999999999997 194.9 A29.2 18.8 0 0 1 421.4 213.70000000000002 Z" fill="#10953a" />
<path d="M421.4 194.9 L421.4 213.70000000000002 A29.2 18.8 0 0 1 392.2 194.9 Z" fill="#1c5acb" />
<ellipse cx="421.4" cy="194.9" rx="29.2" ry="18.8" fill="url(#gBlk)"/>
<path d="M392.2 194.90 H450.6" stroke="#e8e8e8" stroke-width="0.5" opacity="0.6" fill="none"/>
<path d="M421.4 176.1 V213.70000000000002" stroke="#e8e8e8" stroke-width="0.5" opacity="0.6"/>
<circle cx="421.4" cy="194.9" r="15.4" fill="#e8dcd0"/>
<circle cx="421.4" cy="194.9" r="14.8" fill="#1c1c1c"/>
<ellipse cx="421.4" cy="188.9" rx="11" ry="7" fill="#5a5a5a" opacity="0.45"/>
<rect x="415.80" y="185.40" width="9.80" height="4.20" fill="#0a0a0a" stroke="#4a4a4a" stroke-width="0.4"/>
<rect x="417.20" y="186.40" width="4.40" height="2.20" fill="#c41414" />
<rect x="422.40" y="186.40" width="2.00" height="2.20" fill="#3a1010" />
<rect x="408.60" y="192.40" width="25.40" height="4.00" fill="#b8b8b8" opacity="0.85"/>
<path d="M409.4 193.40 H433.4 M409.4 194.40 H433.4 M409.4 195.40 H433.4" stroke="#2a2a2a" stroke-width="0.45" opacity="0.9" fill="none"/>
<path d="M410.6 192.4 V196.4 M412.7 192.4 V196.4 M414.8 192.4 V196.4 M416.9 192.4 V196.4 M419.0 192.4 V196.4 M421.1 192.4 V196.4 M423.2 192.4 V196.4 M425.3 192.4 V196.4 M427.4 192.4 V196.4 M429.5 192.4 V196.4 M431.6 192.4 V196.4" stroke="#1c1c1c" stroke-width="0.6" opacity="0.8"/>
<rect x="417.80" y="204.40" width="6.80" height="2.00" fill="#8a8a8a" opacity="0.8"/>
<rect x="466.50" y="180.10" width="86.00" height="48.00" fill="#262626" opacity="0.5" rx="1"/>
<rect x="467.00" y="180.50" width="85.00" height="46.90" fill="#1c1c1c" opacity="0.7" rx="0.4"/>
<rect x="467.40" y="180.80" width="83.80" height="45.50" fill="#fdfdfd" />
<rect x="467.40" y="180.80" width="83.80" height="1.20" fill="#4c555d" />
<rect x="468.00" y="182.00" width="82.60" height="16.00" fill="#f1f2f3" />
<path d="M469.6 183.40 H474.0" stroke="#8f9499" stroke-width="0.5" opacity="1" fill="none"/>
<path d="M476.6 183.40 H489.4" stroke="#8f9499" stroke-width="0.5" opacity="1" fill="none"/>
<path d="M469.4 185.60 H480.6" stroke="#6f757b" stroke-width="0.6" opacity="0.8" fill="none"/>
<path d="M483.0 185.60 H486.0" stroke="#6f757b" stroke-width="0.6" opacity="0.8" fill="none"/>
<path d="M487.4 185.60 H499.4" stroke="#8f9499" stroke-width="0.6" opacity="0.9" fill="none"/>
<rect x="532.40" y="187.00" width="1.40" height="1.40" fill="#d04a4a" />
<path d="M534.6 187.70 H537.4" stroke="#7a8086" stroke-width="0.5" opacity="1" fill="none"/>
<rect x="534.00" y="186.40" width="16.60" height="39.20" fill="#fbfbfb" />
<rect x="538.40" y="189.20" width="7.00" height="1.00" fill="#cfe5f6" />
<path d="M469.6 187.60 H471.0" stroke="#8f9499" stroke-width="0.5" opacity="1" fill="none"/>
<path d="M473.0 187.60 H475.0" stroke="#6f757b" stroke-width="0.6" opacity="1" fill="none"/>
<path d="M469.8 192.00 H473.4" stroke="#9a9fa4" stroke-width="0.5" opacity="1" fill="none"/>
<rect x="474.00" y="191.20" width="10.60" height="1.60" fill="#c3c7ca" />
<rect x="470.00" y="194.00" width="1.20" height="1.60" fill="#5a6066" />
<rect x="472.20" y="194.00" width="1.20" height="1.60" fill="#8a8f94" />
<rect x="474.20" y="194.00" width="1.20" height="1.60" fill="#8a8f94" />
<rect x="476.20" y="194.00" width="1.20" height="1.60" fill="#6f757b" />
<rect x="478.40" y="194.00" width="1.20" height="1.60" fill="#aab0b5" />
<rect x="481.00" y="194.00" width="1.20" height="1.60" fill="#aab0b5" />
<rect x="483.40" y="194.00" width="1.20" height="1.60" fill="#aab0b5" />
<rect x="485.80" y="194.00" width="1.20" height="1.60" fill="#aab0b5" />
<rect x="488.80" y="194.00" width="1.20" height="1.60" fill="#e08a3a" />
<rect x="490.80" y="194.00" width="1.20" height="1.60" fill="#e0a05a" />
<rect x="497.20" y="194.00" width="1.20" height="1.60" fill="#c4c8cc" />
<rect x="499.80" y="194.00" width="1.20" height="1.60" fill="#7f858a" />
<rect x="502.40" y="194.00" width="1.20" height="1.60" fill="#aab0b5" />
<rect x="505.40" y="194.00" width="1.20" height="1.60" fill="#aab0b5" />
<rect x="508.80" y="194.00" width="1.20" height="1.60" fill="#7f858a" />
<rect x="511.40" y="194.00" width="1.20" height="1.60" fill="#aab0b5" />
<rect x="514.80" y="194.00" width="1.20" height="1.60" fill="#5a8ac8" />
<rect x="517.00" y="194.00" width="1.20" height="1.60" fill="#aab0b5" />
<rect x="519.00" y="194.00" width="1.20" height="1.60" fill="#c4c8cc" />
<path d="M470.4 197.20 H476.4" stroke="#8f9499" stroke-width="0.6" opacity="1" fill="none"/>
<rect x="468.00" y="198.00" width="65.60" height="27.60" fill="#ffffff" />
<rect x="532.00" y="199.60" width="0.80" height="24.80" fill="#3a3f45" opacity="0.85"/>
<path d="M479.4 199.20 H491.0" stroke="#5a5f64" stroke-width="0.6" opacity="0.85" fill="none"/>
<path d="M479.4 201.20 H521.6 M479.4 202.40 H521.6 M479.4 203.60 H521.6 M479.4 204.80 H521.6" stroke="#4a4f54" stroke-width="0.6" opacity="0.72" fill="none"/>
<path d="M479.4 206.00 H511.0" stroke="#4a4f54" stroke-width="0.6" opacity="0.72" fill="none"/>
<path d="M479.4 208.40 H509.0" stroke="#33373b" stroke-width="0.7" opacity="0.85" fill="none"/>
<path d="M479.4 210.80 H521.6 M479.4 212.00 H521.6 M479.4 213.20 H521.6 M479.4 214.40 H521.6" stroke="#4a4f54" stroke-width="0.6" opacity="0.72" fill="none"/>
<path d="M479.4 215.60 H507.0" stroke="#4a4f54" stroke-width="0.6" opacity="0.72" fill="none"/>
<path d="M479.4 217.60 H491.0" stroke="#33373b" stroke-width="0.7" opacity="0.85" fill="none"/>
<path d="M479.4 219.60 H521.6 M479.4 220.80 H521.6 M479.4 222.00 H521.6 M479.4 223.20 H521.6" stroke="#4a4f54" stroke-width="0.6" opacity="0.72" fill="none"/>
<rect x="535.00" y="216.20" width="14.60" height="6.40" fill="#f1f2f3" />
<rect x="541.40" y="217.20" width="1.20" height="1.00" fill="#5a5f64" />
<rect x="544.40" y="217.20" width="1.20" height="1.00" fill="#d05a5a" />
<path d="M539.6 220.80 H544.4" stroke="#aab0b5" stroke-width="0.5" opacity="1" fill="none"/>
<path d="M535.4 224.40 H537.0" stroke="#8f9499" stroke-width="0.5" opacity="1" fill="none"/>
<path d="M539.0 224.40 H544.4" stroke="#c4c8cc" stroke-width="0.5" opacity="1" fill="none"/>
<rect x="560.70" y="169.70" width="72.80" height="58.40" fill="#262626" opacity="0.5" rx="1"/>
<rect x="561.20" y="170.10" width="71.80" height="57.30" fill="#1c1c1c" opacity="0.7" rx="0.4"/>
<rect x="561.60" y="170.40" width="70.60" height="55.90" fill="#fdfdfd" />
<rect x="561.60" y="170.40" width="70.60" height="3.40" fill="#3c454d" />
<rect x="563.00" y="171.40" width="1.40" height="1.40" fill="#d8c890" />
<rect x="591.00" y="171.80" width="12.00" height="0.80" fill="#9aa1a6" />
<rect x="629.20" y="171.50" width="1.60" height="1.40" fill="#e4e7e9" />
<rect x="624.60" y="171.90" width="3.00" height="0.70" fill="#9aa1a6" />
<path d="M564.4 176.00 H567.4" stroke="#8f9499" stroke-width="0.5" opacity="1" fill="none"/>
<path d="M570.0 176.00 H574.0" stroke="#8f9499" stroke-width="0.5" opacity="1" fill="none"/>
<path d="M576.4 176.00 H579.0" stroke="#8f9499" stroke-width="0.5" opacity="1" fill="none"/>
<rect x="562.40" y="177.40" width="69.00" height="4.00" fill="#f3f4f4" />
<path d="M566.0 179.40 H569.4" stroke="#6f757b" stroke-width="0.6" opacity="1" fill="none"/>
<path d="M572.6 179.40 H577.6" stroke="#6f757b" stroke-width="0.6" opacity="1" fill="none"/>
<rect x="580.80" y="178.60" width="1.20" height="1.60" fill="#3a3f45" />
<path d="M583.6 179.40 H593.6" stroke="#6f757b" stroke-width="0.6" opacity="1" fill="none"/>
<rect x="563.00" y="181.40" width="67.80" height="41.40" fill="url(#gBomber)" />
<rect x="563.00" y="181.40" width="67.80" height="41.40" fill="url(#gBomber2)" />
<path d="M563 187 Q590 196 600 190 T630.8 186" fill="none" stroke="#f6e9b4" stroke-width="0.8" opacity="0.7"/>
<path d="M596 192 L606 196 L603 210 Z" fill="#f8f0b8" opacity="0.35"/>
<path d="M606 192 L618 194 L612 208 Z" fill="#f8f0b8" opacity="0.3"/>
<circle cx="582.4" cy="204.6" r="5.2" fill="#f6c64a" opacity="0.85"/><circle cx="581" cy="203" r="2.6" fill="#f9d870" opacity="0.8"/>
<circle cx="593" cy="208.2" r="2.6" fill="#f9e27a" opacity="0.9"/>
<path d="M563 206 Q568 200 572 205 L574 222.8 H563 Z" fill="#f6b458" opacity="0.6"/>
<rect x="567.80" y="192.00" width="2.20" height="1.20" fill="#2a3a7a" />
<rect x="570.00" y="191.80" width="2.40" height="0.80" fill="#8a9aa8" />
<rect x="569.50" y="211.60" width="3.00" height="4.20" fill="#3a4a66" />
<path d="M569.5 212.60 H572.5 M569.5 213.90 H572.5 M569.5 215.20 H572.5" stroke="#1c2430" stroke-width="0.45" opacity="0.8" fill="none"/>
<ellipse cx="571.0" cy="211.4" rx="2.3" ry="0.9" fill="#35b8c0"/>
<rect x="575.10" y="209.20" width="3.00" height="6.60" fill="#3a4a66" />
<path d="M575.1 210.20 H578.1 M575.1 211.50 H578.1 M575.1 212.80 H578.1 M575.1 214.10 H578.1 M575.1 215.40 H578.1" stroke="#1c2430" stroke-width="0.45" opacity="0.8" fill="none"/>
<ellipse cx="576.6" cy="209.0" rx="2.3" ry="0.9" fill="#35b8c0"/>
<rect x="580.90" y="209.80" width="3.00" height="6.00" fill="#3a4a66" />
<path d="M580.9 210.80 H583.9 M580.9 212.10 H583.9 M580.9 213.40 H583.9 M580.9 214.70 H583.9" stroke="#1c2430" stroke-width="0.45" opacity="0.8" fill="none"/>
<rect x="586.50" y="211.40" width="3.00" height="4.40" fill="#3e5a34" />
<path d="M586.5 212.40 H589.5 M586.5 213.70 H589.5 M586.5 215.00 H589.5" stroke="#1c2430" stroke-width="0.45" opacity="0.8" fill="none"/>
<rect x="592.10" y="211.40" width="3.00" height="4.40" fill="#3e5a34" />
<path d="M592.1 212.40 H595.1 M592.1 213.70 H595.1 M592.1 215.00 H595.1" stroke="#1c2430" stroke-width="0.45" opacity="0.8" fill="none"/>
<rect x="597.90" y="209.40" width="3.00" height="6.40" fill="#3e5a34" />
<path d="M597.9 210.40 H600.9 M597.9 211.70 H600.9 M597.9 213.00 H600.9 M597.9 214.30 H600.9" stroke="#1c2430" stroke-width="0.45" opacity="0.8" fill="none"/>
<rect x="603.50" y="209.40" width="3.00" height="6.40" fill="#3a4a66" />
<path d="M603.5 210.40 H606.5 M603.5 211.70 H606.5 M603.5 213.00 H606.5 M603.5 214.30 H606.5" stroke="#1c2430" stroke-width="0.45" opacity="0.8" fill="none"/>
<ellipse cx="605.0" cy="209.20000000000002" rx="2.3" ry="0.9" fill="#35b8c0"/>
<rect x="608.90" y="211.40" width="3.00" height="4.40" fill="#3e5a34" />
<path d="M608.9 212.40 H611.9 M608.9 213.70 H611.9 M608.9 215.00 H611.9" stroke="#1c2430" stroke-width="0.45" opacity="0.8" fill="none"/>
<rect x="614.70" y="209.20" width="3.00" height="6.60" fill="#3e5a34" />
<path d="M614.7 210.20 H617.7 M614.7 211.50 H617.7 M614.7 212.80 H617.7 M614.7 214.10 H617.7 M614.7 215.40 H617.7" stroke="#1c2430" stroke-width="0.45" opacity="0.8" fill="none"/>
<rect x="620.30" y="209.20" width="3.00" height="6.60" fill="#3e5a34" />
<path d="M620.3 210.20 H623.3 M620.3 211.50 H623.3 M620.3 212.80 H623.3 M620.3 214.10 H623.3 M620.3 215.40 H623.3" stroke="#1c2430" stroke-width="0.45" opacity="0.8" fill="none"/>
<rect x="562.40" y="222.80" width="69.00" height="3.00" fill="#fafafa" />
<path d="M612.6 224.40 H629.0" stroke="#8f9499" stroke-width="0.5" opacity="1" fill="none"/>
<rect x="209.10" y="244.70" width="72.40" height="58.40" fill="#262626" opacity="0.5" rx="1"/>
<rect x="209.60" y="245.10" width="71.40" height="57.30" fill="#1c1c1c" opacity="0.7" rx="0.4"/>
<rect x="210.00" y="245.40" width="70.20" height="55.90" fill="#fdfdfd" />
<rect x="210.00" y="245.40" width="70.20" height="3.20" fill="#3c454d" />
<rect x="211.40" y="246.20" width="1.20" height="1.60" fill="#d86a5a" />
<rect x="241.00" y="246.70" width="8.40" height="0.70" fill="#9aa1a6" />
<rect x="277.20" y="246.30" width="1.60" height="1.50" fill="#e4e7e9" />
<rect x="271.60" y="246.80" width="3.40" height="0.60" fill="#9aa1a6" />
<path d="M212.4 250.80 H215.8" stroke="#8f9499" stroke-width="0.5" opacity="1" fill="none"/>
<path d="M218.4 250.80 H221.4" stroke="#8f9499" stroke-width="0.5" opacity="1" fill="none"/>
<path d="M223.8 250.80 H228.0" stroke="#8f9499" stroke-width="0.5" opacity="1" fill="none"/>
<path d="M230.6 250.80 H233.6" stroke="#8f9499" stroke-width="0.5" opacity="1" fill="none"/>
<rect x="211.40" y="251.80" width="66.40" height="4.80" fill="#eeeff0" rx="0.8"/>
<rect x="212.80" y="253.20" width="1.40" height="2.20" fill="#6a7076" />
<path d="M215.0 254.40 H218.0" stroke="#5a5f64" stroke-width="0.6" opacity="1" fill="none"/>
<path d="M220.4 254.40 H227.0" stroke="#b0b4b8" stroke-width="0.6" opacity="1" fill="none"/>
<path d="M230.6 254.40 H236.0" stroke="#c0c4c8" stroke-width="0.6" opacity="1" fill="none"/>
<path d="M238.4 254.40 H243.0" stroke="#c0c4c8" stroke-width="0.6" opacity="1" fill="none"/>
<rect x="212.30" y="258.20" width="36.50" height="36.40" fill="#ffffff" stroke="#b9b9ff" stroke-width="0.4"/>
<path d="M214.20 258.2 V294.6 M216.12 258.2 V294.6 M218.04 258.2 V294.6 M219.96 258.2 V294.6 M221.88 258.2 V294.6 M223.80 258.2 V294.6 M225.72 258.2 V294.6 M227.64 258.2 V294.6 M229.56 258.2 V294.6 M231.48 258.2 V294.6 M233.40 258.2 V294.6 M235.32 258.2 V294.6 M237.24 258.2 V294.6 M239.16 258.2 V294.6 M241.08 258.2 V294.6 M243.00 258.2 V294.6 M244.92 258.2 V294.6 M246.84 258.2 V294.6 M212.3 260.10 H248.8 M212.3 262.02 H248.8 M212.3 263.94 H248.8 M212.3 265.86 H248.8 M212.3 267.78 H248.8 M212.3 269.70 H248.8 M212.3 271.62 H248.8 M212.3 273.54 H248.8 M212.3 275.46 H248.8 M212.3 277.38 H248.8 M212.3 279.30 H248.8 M212.3 281.22 H248.8 M212.3 283.14 H248.8 M212.3 285.06 H248.8 M212.3 286.98 H248.8 M212.3 288.90 H248.8 M212.3 290.82 H248.8 M212.3 292.74 H248.8" stroke="#c8c8ff" stroke-width="0.3" opacity="0.8" fill="none"/>
<rect x="224.25" y="266.25" width="1.50" height="1.50" fill="#7a7ad8" />
<rect x="230.85" y="265.05" width="1.50" height="1.50" fill="#7a7ad8" />
<rect x="227.45" y="265.65" width="1.50" height="1.50" fill="#e88a8a" />
<rect x="222.65" y="271.25" width="1.50" height="1.50" fill="#7a7ad8" />
<rect x="226.05" y="269.85" width="1.50" height="1.50" fill="#e89a9a" />
<rect x="227.45" y="268.05" width="1.50" height="1.50" fill="#9a9ae0" />
<rect x="227.45" y="270.05" width="1.50" height="1.50" fill="#8a8ae0" />
<rect x="229.05" y="271.85" width="1.50" height="1.50" fill="#8a8ae0" />
<rect x="230.65" y="268.25" width="1.50" height="1.50" fill="#8a8ae0" />
<rect x="230.65" y="270.25" width="1.50" height="1.50" fill="#e89a9a" />
<rect x="230.65" y="272.65" width="1.50" height="1.50" fill="#8a8ae0" />
<rect x="229.25" y="273.85" width="1.50" height="1.50" fill="#9a9ae0" />
<rect x="232.45" y="274.65" width="1.50" height="1.50" fill="#e89a9a" />
<rect x="229.05" y="277.85" width="1.50" height="1.50" fill="#f0b0b0" />
<rect x="227.40" y="276.20" width="1.60" height="1.60" fill="#2fa85a" />
<rect x="210.80" y="296.60" width="68.60" height="4.00" fill="#f6f7f7" />
<path d="M212.4 298.60 H226.6" stroke="#6f757b" stroke-width="0.6" opacity="0.85" fill="none"/>
<path d="M249.8 298.60 H259.4" stroke="#7f858a" stroke-width="0.5" opacity="0.85" fill="none"/>
<rect x="261.00" y="297.00" width="16.00" height="3.00" fill="#2d97ea" />
<path d="M264.4 298.50 H269.0" stroke="#bfe0f8" stroke-width="0.5" opacity="1" fill="none"/>
<rect x="295.30" y="244.70" width="75.80" height="58.40" fill="#262626" opacity="0.5" rx="1"/>
<rect x="295.80" y="245.10" width="74.80" height="57.30" fill="#1c1c1c" opacity="0.7" rx="0.4"/>
<rect x="296.20" y="245.40" width="73.60" height="55.90" fill="#fdfdfd" />
<rect x="296.20" y="245.40" width="73.60" height="2.80" fill="#3c454d" />
<rect x="330.00" y="246.50" width="6.00" height="0.70" fill="#9aa1a6" />
<rect x="367.00" y="246.20" width="1.60" height="1.40" fill="#e4e7e9" />
<path d="M298.6 249.80 H301.4" stroke="#9a9fa4" stroke-width="0.5" opacity="1" fill="none"/>
<path d="M303.6 249.80 H305.6" stroke="#9a9fa4" stroke-width="0.5" opacity="1" fill="none"/>
<path d="M307.6 249.80 H309.0" stroke="#9a9fa4" stroke-width="0.5" opacity="1" fill="none"/>
<path d="M311.0 249.80 H316.0" stroke="#9a9fa4" stroke-width="0.5" opacity="1" fill="none"/>
<path d="M318.0 249.80 H324.0" stroke="#9a9fa4" stroke-width="0.5" opacity="1" fill="none"/>
<path d="M326.0 249.80 H330.0" stroke="#9a9fa4" stroke-width="0.5" opacity="1" fill="none"/>
<path d="M332.0 249.80 H334.0" stroke="#9a9fa4" stroke-width="0.5" opacity="1" fill="none"/>
<path d="M336.0 249.80 H342.0" stroke="#9a9fa4" stroke-width="0.5" opacity="1" fill="none"/>
<path d="M344.0 249.80 H346.0" stroke="#9a9fa4" stroke-width="0.5" opacity="1" fill="none"/>
<rect x="297.00" y="251.00" width="72.00" height="2.80" fill="#f2f3f4" />
<rect x="298.00" y="251.80" width="1.20" height="1.40" fill="#4a4f55" />
<rect x="300.20" y="251.80" width="1.20" height="1.40" fill="#4a4f55" />
<rect x="302.60" y="251.80" width="1.20" height="1.40" fill="#4a4f55" />
<rect x="305.00" y="251.80" width="1.20" height="1.40" fill="#4a4f55" />
<rect x="307.80" y="251.80" width="1.20" height="1.40" fill="#4a4f55" />
<rect x="310.00" y="251.80" width="1.20" height="1.40" fill="#4a4f55" />
<rect x="314.40" y="251.80" width="1.20" height="1.40" fill="#4a4f55" />
<path d="M316.4 252.50 H325.0" stroke="#6f757b" stroke-width="0.6" opacity="1" fill="none"/>
<rect x="327.40" y="251.80" width="1.20" height="1.40" fill="#6f757b" />
<path d="M329.6 252.50 H336.4" stroke="#7f858a" stroke-width="0.6" opacity="1" fill="none"/>
<rect x="338.00" y="251.80" width="1.20" height="1.40" fill="#2a2e32" />
<path d="M340.0 252.50 H348.4" stroke="#5a5f64" stroke-width="0.6" opacity="1" fill="none"/>
<rect x="350.10" y="251.90" width="1.00" height="1.20" fill="#8f9499" />
<rect x="352.90" y="251.90" width="1.00" height="1.20" fill="#8f9499" />
<rect x="355.70" y="251.90" width="1.00" height="1.20" fill="#8f9499" />
<rect x="358.50" y="251.90" width="1.00" height="1.20" fill="#8f9499" />
<rect x="361.10" y="251.90" width="1.00" height="1.20" fill="#8f9499" />
<rect x="363.90" y="251.90" width="1.00" height="1.20" fill="#8f9499" />
<rect x="366.50" y="251.90" width="1.00" height="1.20" fill="#8f9499" />
<rect x="297.00" y="254.20" width="55.00" height="2.00" fill="#ececed" />
<rect x="298.00" y="254.60" width="3.00" height="1.20" fill="#9a9fa4" />
<rect x="302.00" y="254.50" width="1.60" height="1.40" fill="#7f858a" />
<rect x="352.60" y="254.40" width="14.60" height="1.80" fill="#f4f5f5" />
<path d="M353.6 255.30 H357.0" stroke="#aab0b5" stroke-width="0.5" opacity="1" fill="none"/>
<rect x="364.80" y="254.60" width="1.20" height="1.30" fill="#6f757b" />
<rect x="352.20" y="256.60" width="14.40" height="43.80" fill="#ffffff" stroke="#c6e2f4" stroke-width="0.5"/>
<path d="M353.4 258.20 H359.6" stroke="#2f3337" stroke-width="1.0" opacity="0.85" fill="none"/>
<path d="M353.4 260.40 H358.0" stroke="#8a8f94" stroke-width="0.5" opacity="1" fill="none"/>
<path d="M359.2 260.40 H362.4" stroke="#8a8f94" stroke-width="0.5" opacity="1" fill="none"/>
<rect x="367.40" y="257.00" width="1.40" height="43.00" fill="#f0f1f2" />
<rect x="367.60" y="262.00" width="1.00" height="11.00" fill="#5c6268" />
<rect x="350.30" y="258.00" width="0.80" height="40.60" fill="#3a3f45" opacity="0.85"/>
<path d="M299.6 258.60 H300.6 M299.6 262.80 H300.6" stroke="#b8bcc0" stroke-width="0.6" opacity="1" fill="none"/>
<path d="M302.6 258.60 H305.0" stroke="#7f858a" stroke-width="0.5" opacity="1" fill="none"/>
<path d="M306.6 258.60 H311.0" stroke="#9a9fa4" stroke-width="0.5" opacity="1" fill="none"/>
<path d="M313.0 258.60 H319.0" stroke="#9a9fa4" stroke-width="0.5" opacity="1" fill="none"/>
<path d="M321.0 258.60 H326.0" stroke="#9a9fa4" stroke-width="0.5" opacity="1" fill="none"/>
<path d="M303.0 260.60 H307.0" stroke="#6f757b" stroke-width="0.55" opacity="1" fill="none"/>
<path d="M309.0 260.60 H313.0" stroke="#6f757b" stroke-width="0.55" opacity="1" fill="none"/>
<path d="M315.0 260.60 H318.0" stroke="#6f757b" stroke-width="0.55" opacity="1" fill="none"/>
<path d="M320.0 260.60 H326.0" stroke="#8a8f94" stroke-width="0.55" opacity="1" fill="none"/>
<path d="M301.8 263.00 H309.0" stroke="#78b4e6" stroke-width="0.55" opacity="1" fill="none"/>
<path d="M310.0 263.00 H315.0" stroke="#e0b080" stroke-width="0.55" opacity="1" fill="none"/>
<rect x="306.70" y="265.20" width="42.50" height="33.20" fill="#ffffff" stroke="#bfc3c6" stroke-width="0.4"/>
<path d="M306.7 281.40 H349.2" stroke="#e2dfc8" stroke-width="0.4" opacity="1" fill="none"/>
<path d="M324.4 265.2 V298.4" stroke="#d8dadc" stroke-width="0.4"/>
<path d="M306.7 265.2 V298.4" stroke="#6a7076" stroke-width="0.6"/>
<path d="M305.2 266.00 H306.7 M305.2 271.20 H306.7 M305.2 276.40 H306.7 M305.2 281.60 H306.7 M305.2 286.80 H306.7 M305.2 292.00 H306.7 M305.2 297.20 H306.7" stroke="#7f858a" stroke-width="0.5" opacity="1" fill="none"/>
<rect x="303.00" y="277.00" width="0.60" height="8.00" fill="#9a9fa4" />
<path d="M307.4 298.4 C310 287 316 277.6 321.4 278.2 C328 279 331 284.4 336 283.6 C342 282.6 345.4 276 349 265.6" fill="none" stroke="#8484f4" stroke-width="0.55"/>
<path d="M299.4 299.60 H343.6" stroke="#8a8f94" stroke-width="0.8" opacity="0.8" fill="none"/>
<rect x="382.10" y="244.90" width="78.40" height="58.20" fill="#262626" opacity="0.5" rx="1"/>
<rect x="382.60" y="245.30" width="77.40" height="57.10" fill="#1c1c1c" opacity="0.7" rx="0.4"/>
<rect x="383.00" y="245.60" width="76.20" height="55.70" fill="#8a35b4" />
<rect x="383.00" y="245.60" width="76.20" height="55.70" fill="url(#gPurp)" />
<rect x="437.60" y="246.00" width="21.60" height="12.00" fill="#6a2d9a" />
<path d="M437.6 246 L452 246 L446 258 H437.6 Z" fill="#7a3aa8" opacity="0.9"/>
<path d="M452.4 245.6 H459.2 V262 L449 258 Z" fill="#f0701a" />
<path d="M455 250 L459.2 247 V262 L452 258.6 Z" fill="#f59a1e" opacity="0.9"/>
<rect x="457.00" y="257.60" width="2.20" height="43.70" fill="url(#gWallR)" />
<rect x="414.00" y="299.60" width="45.20" height="1.70" fill="url(#gWallB)" />
<rect x="383.00" y="245.60" width="1.20" height="43.40" fill="#e0a05a" opacity="0.55"/>
<rect x="384.40" y="246.40" width="53.20" height="42.80" fill="#fbfbfb" />
<rect x="385.60" y="247.20" width="1.40" height="1.60" fill="#d81a2a" />
<rect x="410.00" y="248.10" width="8.00" height="0.60" fill="#c9cdd0" />
<rect x="435.60" y="247.60" width="1.20" height="1.00" fill="#8f9499" />
<path d="M386.2 250.60 H387.6" stroke="#6f757b" stroke-width="0.6" opacity="0.85" fill="none"/>
<path d="M389.4 250.60 H391.6" stroke="#6f757b" stroke-width="0.6" opacity="0.85" fill="none"/>
<path d="M393.2 250.60 H398.4" stroke="#6f757b" stroke-width="0.6" opacity="0.85" fill="none"/>
<path d="M400.0 250.60 H405.4" stroke="#6f757b" stroke-width="0.6" opacity="0.85" fill="none"/>
<path d="M407.0 250.60 H410.6" stroke="#6f757b" stroke-width="0.6" opacity="0.85" fill="none"/>
<path d="M412.6 250.60 H415.0" stroke="#6f757b" stroke-width="0.6" opacity="0.85" fill="none"/>
<rect x="384.40" y="251.80" width="53.20" height="3.40" fill="#f0f1f2" />
<path d="M386.0 253.40 H391.4" stroke="#9a9fa4" stroke-width="0.6" opacity="0.9" fill="none"/>
<path d="M393.2 253.40 H398.0" stroke="#9a9fa4" stroke-width="0.6" opacity="0.9" fill="none"/>
<path d="M400.0 253.40 H406.6" stroke="#9a9fa4" stroke-width="0.6" opacity="0.9" fill="none"/>
<path d="M408.6 253.40 H412.4" stroke="#9a9fa4" stroke-width="0.6" opacity="0.9" fill="none"/>
<path d="M414.4 253.40 H420.0" stroke="#9a9fa4" stroke-width="0.6" opacity="0.9" fill="none"/>
<path d="M422.4 253.40 H427.0" stroke="#9a9fa4" stroke-width="0.6" opacity="0.9" fill="none"/>
<path d="M385.8 256.40 H391.0" stroke="#3c9fe0" stroke-width="0.6" opacity="1" fill="none"/>
<path d="M408.8 256.40 H412.0" stroke="#9a9fa4" stroke-width="0.5" opacity="1" fill="none"/>
<path d="M415.6 256.40 H419.6" stroke="#9a9fa4" stroke-width="0.5" opacity="1" fill="none"/>
<path d="M422.0 256.40 H426.4" stroke="#9a9fa4" stroke-width="0.5" opacity="1" fill="none"/>
<path d="M428.6 256.40 H434.0" stroke="#9a9fa4" stroke-width="0.5" opacity="1" fill="none"/>
<rect x="386.80" y="269.20" width="17.20" height="1.60" fill="#b9bbbd" />
<rect x="403.40" y="257.20" width="54.20" height="43.00" fill="#2a2a2a" opacity="0.35"/>
<rect x="404.00" y="257.60" width="53.00" height="42.00" fill="#fbfbfb" />
<rect x="404.00" y="257.60" width="53.00" height="2.00" fill="#3c454d" />
<rect x="405.00" y="258.00" width="1.40" height="1.30" fill="#c81a2a" />
<rect x="424.00" y="258.30" width="14.00" height="0.60" fill="#8f969b" />
<rect x="455.00" y="258.00" width="1.40" height="1.30" fill="#e4e7e9" />
<rect x="450.00" y="258.40" width="3.00" height="0.50" fill="#9aa1a6" />
<rect x="404.40" y="260.00" width="8.20" height="39.20" fill="#f2f3f4" />
<path d="M405.6 261.60 H410.0" stroke="#9a9fa4" stroke-width="0.5" opacity="1" fill="none"/>
<rect x="405.60" y="263.20" width="1.20" height="1.20" fill="#3a3f45" />
<path d="M407.4 263.80 H411.4" stroke="#9a9fa4" stroke-width="0.5" opacity="1" fill="none"/>
<rect x="405.60" y="265.60" width="1.20" height="1.20" fill="#d05a5a" />
<path d="M407.4 266.20 H411.4" stroke="#9a9fa4" stroke-width="0.5" opacity="1" fill="none"/>
<rect x="405.60" y="267.80" width="1.20" height="1.20" fill="#6f757b" />
<path d="M407.4 268.40 H411.4" stroke="#9a9fa4" stroke-width="0.5" opacity="1" fill="none"/>
<rect x="405.60" y="270.00" width="1.20" height="1.20" fill="#e08a3a" />
<path d="M407.4 270.60 H411.4" stroke="#9a9fa4" stroke-width="0.5" opacity="1" fill="none"/>
<rect x="405.60" y="272.40" width="1.20" height="1.20" fill="#5ab0a0" />
<path d="M407.4 273.00 H411.4" stroke="#9a9fa4" stroke-width="0.5" opacity="1" fill="none"/>
<rect x="405.60" y="274.60" width="1.20" height="1.20" fill="#5ab0a0" />
<path d="M407.4 275.20 H411.4" stroke="#9a9fa4" stroke-width="0.5" opacity="1" fill="none"/>
<rect x="405.60" y="276.80" width="1.20" height="1.20" fill="#e08a3a" />
<path d="M407.4 277.40 H411.4" stroke="#9a9fa4" stroke-width="0.5" opacity="1" fill="none"/>
<rect x="405.60" y="279.00" width="1.20" height="1.20" fill="#5ab0a0" />
<path d="M407.4 279.60 H411.4" stroke="#9a9fa4" stroke-width="0.5" opacity="1" fill="none"/>
<path d="M414.0 262.00 H417.4" stroke="#7f858a" stroke-width="0.55" opacity="1" fill="none"/>
<rect x="415.60" y="263.75" width="0.90" height="0.90" fill="#6f757b" />
<path d="M417.0 264.20 H419.2" stroke="#8f9499" stroke-width="0.5" opacity="1" fill="none"/>
<rect x="417.20" y="265.31" width="0.90" height="0.90" fill="#6f757b" />
<path d="M418.6 265.76 H421.6" stroke="#8f9499" stroke-width="0.5" opacity="1" fill="none"/>
<rect x="417.20" y="266.87" width="0.90" height="0.90" fill="#6f757b" />
<path d="M418.6 267.32 H422.4" stroke="#8f9499" stroke-width="0.5" opacity="1" fill="none"/>
<rect x="417.20" y="268.43" width="0.90" height="0.90" fill="#6f757b" />
<path d="M418.6 268.88 H420.8" stroke="#8f9499" stroke-width="0.5" opacity="1" fill="none"/>
<rect x="415.60" y="269.99" width="0.90" height="0.90" fill="#6f757b" />
<path d="M417.0 270.44 H420.0" stroke="#8f9499" stroke-width="0.5" opacity="1" fill="none"/>
<rect x="415.60" y="271.55" width="0.90" height="0.90" fill="#6f757b" />
<path d="M417.0 272.00 H420.8" stroke="#8f9499" stroke-width="0.5" opacity="1" fill="none"/>
<rect x="417.20" y="273.11" width="0.90" height="0.90" fill="#6f757b" />
<path d="M418.6 273.56 H420.8" stroke="#8f9499" stroke-width="0.5" opacity="1" fill="none"/>
<rect x="417.20" y="274.67" width="0.90" height="0.90" fill="#6f757b" />
<path d="M418.6 275.12 H421.6" stroke="#8f9499" stroke-width="0.5" opacity="1" fill="none"/>
<rect x="417.20" y="276.23" width="0.90" height="0.90" fill="#6f757b" />
<path d="M418.6 276.68 H422.4" stroke="#8f9499" stroke-width="0.5" opacity="1" fill="none"/>
<rect x="417.20" y="277.79" width="0.90" height="0.90" fill="#6f757b" />
<path d="M418.6 278.24 H420.8" stroke="#8f9499" stroke-width="0.5" opacity="1" fill="none"/>
<rect x="415.60" y="279.35" width="0.90" height="0.90" fill="#6f757b" />
<path d="M417.0 279.80 H420.0" stroke="#8f9499" stroke-width="0.5" opacity="1" fill="none"/>
<rect x="415.60" y="280.91" width="0.90" height="0.90" fill="#6f757b" />
<path d="M417.0 281.36 H420.8" stroke="#8f9499" stroke-width="0.5" opacity="1" fill="none"/>
<rect x="415.60" y="282.47" width="0.90" height="0.90" fill="#6f757b" />
<path d="M417.0 282.92 H419.2" stroke="#8f9499" stroke-width="0.5" opacity="1" fill="none"/>
<rect x="415.60" y="284.03" width="0.90" height="0.90" fill="#6f757b" />
<path d="M417.0 284.48 H420.0" stroke="#8f9499" stroke-width="0.5" opacity="1" fill="none"/>
<rect x="415.60" y="285.59" width="0.90" height="0.90" fill="#6f757b" />
<path d="M417.0 286.04 H420.8" stroke="#8f9499" stroke-width="0.5" opacity="1" fill="none"/>
<rect x="415.60" y="287.15" width="0.90" height="0.90" fill="#6f757b" />
<path d="M417.0 287.60 H419.2" stroke="#8f9499" stroke-width="0.5" opacity="1" fill="none"/>
<rect x="415.60" y="288.71" width="0.90" height="0.90" fill="#6f757b" />
<path d="M417.0 289.16 H420.0" stroke="#8f9499" stroke-width="0.5" opacity="1" fill="none"/>
<rect x="415.60" y="290.27" width="0.90" height="0.90" fill="#6f757b" />
<path d="M417.0 290.72 H420.8" stroke="#8f9499" stroke-width="0.5" opacity="1" fill="none"/>
<rect x="455.00" y="262.00" width="0.80" height="24.00" fill="#5c6268" opacity="0.9"/>
<path d="M413.6 294.20 H426.0" stroke="#7f858a" stroke-width="0.55" opacity="1" fill="none"/>
<rect x="453.40" y="293.60" width="1.20" height="1.20" fill="#3a3f45" />
<rect x="432.80" y="296.20" width="7.40" height="2.40" fill="#eceded" stroke="#c9cdd0" stroke-width="0.3"/>
<path d="M433.6 297.40 H439.4" stroke="#7f858a" stroke-width="0.5" opacity="1" fill="none"/>
<rect x="442.00" y="296.20" width="7.00" height="2.40" fill="#2d97ea" />
<path d="M451.0 297.40 H456.0" stroke="#b4b8bc" stroke-width="0.5" opacity="1" fill="none"/>
<rect x="484.90" y="247.10" width="48.00" height="54.50" fill="#262626" opacity="0.5" rx="1"/>
<rect x="485.40" y="247.50" width="47.00" height="53.40" fill="#1c1c1c" opacity="0.7" rx="0.4"/>
<rect x="485.80" y="247.80" width="45.80" height="52.00" fill="#fdfdfd" />
<rect x="485.80" y="247.80" width="45.80" height="1.20" fill="#4c555d" />
<rect x="486.20" y="248.00" width="1.00" height="0.90" fill="#5ac040" />
<rect x="503.00" y="248.20" width="9.00" height="0.50" fill="#aab0b5" />
<rect x="529.40" y="248.00" width="1.20" height="0.90" fill="#e4e7e9" />
<path d="M487.6 250.60 H489.0" stroke="#9a9fa4" stroke-width="0.5" opacity="1" fill="none"/>
<path d="M490.4 250.60 H491.6" stroke="#9a9fa4" stroke-width="0.5" opacity="1" fill="none"/>
<path d="M493.0 250.60 H496.4" stroke="#9a9fa4" stroke-width="0.5" opacity="1" fill="none"/>
<path d="M498.0 250.60 H499.4" stroke="#9a9fa4" stroke-width="0.5" opacity="1" fill="none"/>
<path d="M487.6 252.60 H492.6" stroke="#7f858a" stroke-width="0.55" opacity="1" fill="none"/>
<path d="M494.4 252.60 H502.4" stroke="#8f9499" stroke-width="0.55" opacity="1" fill="none"/>
<path d="M504.6 252.60 H511.6" stroke="#8f9499" stroke-width="0.55" opacity="1" fill="none"/>
<rect x="486.40" y="253.80" width="44.60" height="1.80" fill="#eeeff0" />
<rect x="486.60" y="254.00" width="1.40" height="1.40" fill="#8fc8ee" />
<rect x="488.60" y="254.10" width="4.00" height="1.30" fill="#cfd2d5" />
<rect x="493.80" y="254.00" width="1.40" height="1.40" fill="#3c9fe0" />
<path d="M496.0 254.80 H501.6" stroke="#a4a9ad" stroke-width="0.6" opacity="1" fill="none"/>
<rect x="486.20" y="255.80" width="2.40" height="43.60" fill="#2d8cc8" />
<rect x="486.40" y="262.00" width="1.20" height="1.20" fill="#1a5a8a" />
<path d="M490.6 257.60 H492.0" stroke="#9a9fa4" stroke-width="0.5" opacity="1" fill="none"/>
<path d="M493.4 257.60 H495.0" stroke="#9a9fa4" stroke-width="0.5" opacity="1" fill="none"/>
<path d="M522.0 257.60 H530.4" stroke="#5a5f64" stroke-width="0.6" opacity="0.85" fill="none"/>
<rect x="489.60" y="259.00" width="40.00" height="2.00" fill="#ffffff" stroke="#d0d3d6" stroke-width="0.35"/>
<rect x="528.40" y="259.60" width="0.80" height="1.00" fill="#7f858a" />
<rect x="489.20" y="261.60" width="41.20" height="2.00" fill="#eceded" />
<path d="M505.0 262.60 H513.6" stroke="#3a3f45" stroke-width="0.7" opacity="0.85" fill="none"/>
<rect x="530.00" y="271.00" width="1.00" height="6.00" fill="#7fc3f0" />
<circle cx="491.2" cy="266.3" r="1.75" fill="#2f6fd8"/>
<path d="M494.0 265.40 H521.0" stroke="#7f858a" stroke-width="0.5" opacity="0.8" fill="none"/>
<path d="M494.0 266.60 H499.0" stroke="#8f9499" stroke-width="0.5" opacity="0.8" fill="none"/>
<path d="M499.4 266.60 H507.6" stroke="#5aa8e0" stroke-width="0.5" opacity="0.9" fill="none"/>
<path d="M516.0 268.60 H521.0" stroke="#5aa8e0" stroke-width="0.5" opacity="0.85" fill="none"/>
<path d="M521.6 268.60 H529.0" stroke="#b9d4ea" stroke-width="0.5" opacity="0.9" fill="none"/>
<circle cx="491.2" cy="271.9" r="1.75" fill="#2f6fd8"/>
<path d="M494.0 271.00 H521.0" stroke="#7f858a" stroke-width="0.5" opacity="0.8" fill="none"/>
<path d="M494.0 272.20 H499.0" stroke="#8f9499" stroke-width="0.5" opacity="0.8" fill="none"/>
<path d="M499.4 272.20 H507.6" stroke="#5aa8e0" stroke-width="0.5" opacity="0.9" fill="none"/>
<path d="M516.0 274.20 H521.0" stroke="#5aa8e0" stroke-width="0.5" opacity="0.85" fill="none"/>
<path d="M521.6 274.20 H529.0" stroke="#b9d4ea" stroke-width="0.5" opacity="0.9" fill="none"/>
<rect x="489.80" y="276.20" width="2.60" height="2.60" fill="#0f3a8a" />
<path d="M494.0 276.60 H523.0" stroke="#7f858a" stroke-width="0.5" opacity="0.8" fill="none"/>
<path d="M494.0 277.80 H499.0" stroke="#8f9499" stroke-width="0.5" opacity="0.8" fill="none"/>
<path d="M499.4 277.80 H507.6" stroke="#5aa8e0" stroke-width="0.5" opacity="0.9" fill="none"/>
<path d="M516.0 279.80 H521.0" stroke="#5aa8e0" stroke-width="0.5" opacity="0.85" fill="none"/>
<path d="M521.6 279.80 H529.0" stroke="#b9d4ea" stroke-width="0.5" opacity="0.9" fill="none"/>
<rect x="489.80" y="282.20" width="2.60" height="2.60" fill="#3a6a9a" />
<path d="M494.0 282.60 H523.0" stroke="#7f858a" stroke-width="0.5" opacity="0.8" fill="none"/>
<path d="M494.0 283.80 H499.0" stroke="#8f9499" stroke-width="0.5" opacity="0.8" fill="none"/>
<path d="M499.4 283.80 H507.6" stroke="#5aa8e0" stroke-width="0.5" opacity="0.9" fill="none"/>
<path d="M516.0 285.80 H521.0" stroke="#5aa8e0" stroke-width="0.5" opacity="0.85" fill="none"/>
<path d="M521.6 285.80 H529.0" stroke="#b9d4ea" stroke-width="0.5" opacity="0.9" fill="none"/>
<circle cx="491.2" cy="288.3" r="1.75" fill="#b8865a"/>
<path d="M494.0 287.40 H522.0" stroke="#7f858a" stroke-width="0.5" opacity="0.8" fill="none"/>
<path d="M494.0 288.60 H499.0" stroke="#8f9499" stroke-width="0.5" opacity="0.8" fill="none"/>
<path d="M499.4 288.60 H507.6" stroke="#5aa8e0" stroke-width="0.5" opacity="0.9" fill="none"/>
<path d="M516.0 290.60 H521.0" stroke="#5aa8e0" stroke-width="0.5" opacity="0.85" fill="none"/>
<path d="M521.6 290.60 H529.0" stroke="#b9d4ea" stroke-width="0.5" opacity="0.9" fill="none"/>
<circle cx="491.2" cy="293.7" r="1.75" fill="#0a0a3a"/>
<path d="M494.0 292.80 H522.0" stroke="#7f858a" stroke-width="0.5" opacity="0.8" fill="none"/>
<path d="M494.0 294.00 H499.0" stroke="#8f9499" stroke-width="0.5" opacity="0.8" fill="none"/>
<path d="M499.4 294.00 H507.6" stroke="#5aa8e0" stroke-width="0.5" opacity="0.9" fill="none"/>
<path d="M516.0 296.00 H521.0" stroke="#5aa8e0" stroke-width="0.5" opacity="0.85" fill="none"/>
<path d="M521.6 296.00 H529.0" stroke="#b9d4ea" stroke-width="0.5" opacity="0.9" fill="none"/>
<rect x="493.00" y="296.00" width="35.80" height="1.80" fill="#7a0a0e" rx="0.5"/>
<rect x="555.50" y="254.30" width="83.00" height="47.50" fill="#262626" opacity="0.5" rx="1"/>
<rect x="556.00" y="254.70" width="82.00" height="46.40" fill="#1c1c1c" opacity="0.7" rx="0.4"/>
<rect x="556.40" y="255.00" width="80.80" height="45.00" fill="#fdfdfd" />
<rect x="556.40" y="255.00" width="80.80" height="1.20" fill="#4c555d" />
<rect x="557.20" y="255.20" width="0.80" height="0.80" fill="#e08a3a" />
<rect x="590.00" y="255.30" width="9.00" height="0.60" fill="#79b8e0" />
<rect x="616.40" y="256.20" width="20.40" height="43.40" fill="#f3f4f5" />
<rect x="616.20" y="256.20" width="0.50" height="43.40" fill="#dcdfe1" />
<rect x="556.80" y="258.60" width="2.80" height="5.00" fill="#39a3ec" />
<rect x="561.00" y="258.95" width="1.60" height="1.70" fill="#2a2e32" opacity="0.5"/>
<path d="M560.7 262.00 H562.9" stroke="#c4c8cc" stroke-width="0.45" opacity="1" fill="none"/>
<rect x="564.87" y="258.95" width="1.60" height="1.70" fill="#7f858a" opacity="0.5"/>
<path d="M564.6 262.00 H566.8" stroke="#c4c8cc" stroke-width="0.45" opacity="1" fill="none"/>
<rect x="568.74" y="258.95" width="1.60" height="1.70" fill="#8f9499" opacity="0.5"/>
<path d="M568.4 262.00 H570.6" stroke="#c4c8cc" stroke-width="0.45" opacity="1" fill="none"/>
<rect x="572.61" y="258.95" width="1.60" height="1.70" fill="#3a3f45" opacity="0.5"/>
<path d="M572.3 262.00 H574.5" stroke="#c4c8cc" stroke-width="0.45" opacity="1" fill="none"/>
<rect x="576.48" y="258.95" width="1.60" height="1.70" fill="#5a5f64" opacity="0.5"/>
<path d="M576.2 262.00 H578.4" stroke="#c4c8cc" stroke-width="0.45" opacity="1" fill="none"/>
<rect x="580.35" y="258.95" width="1.60" height="1.70" fill="#5a5f64" opacity="0.5"/>
<path d="M580.0 262.00 H582.2" stroke="#c4c8cc" stroke-width="0.45" opacity="1" fill="none"/>
<rect x="584.22" y="258.95" width="1.60" height="1.70" fill="#2a2e32" opacity="0.5"/>
<path d="M583.9 262.00 H586.1" stroke="#c4c8cc" stroke-width="0.45" opacity="1" fill="none"/>
<rect x="588.09" y="258.95" width="1.60" height="1.70" fill="#3a3f45" opacity="0.5"/>
<path d="M587.8 262.00 H590.0" stroke="#c4c8cc" stroke-width="0.45" opacity="1" fill="none"/>
<rect x="591.96" y="258.95" width="1.60" height="1.70" fill="#9aa0a5" opacity="0.5"/>
<path d="M591.7 262.00 H593.9" stroke="#c4c8cc" stroke-width="0.45" opacity="1" fill="none"/>
<rect x="595.83" y="258.95" width="1.60" height="1.70" fill="#3a3f45" opacity="0.5"/>
<path d="M595.5 262.00 H597.7" stroke="#c4c8cc" stroke-width="0.45" opacity="1" fill="none"/>
<rect x="599.70" y="258.95" width="1.60" height="1.70" fill="#5a5f64" opacity="0.5"/>
<path d="M599.4 262.00 H601.6" stroke="#c4c8cc" stroke-width="0.45" opacity="1" fill="none"/>
<rect x="603.57" y="258.95" width="1.60" height="1.70" fill="#8f9499" opacity="0.5"/>
<path d="M603.3 262.00 H605.5" stroke="#c4c8cc" stroke-width="0.45" opacity="1" fill="none"/>
<rect x="607.44" y="258.95" width="1.60" height="1.70" fill="#8f9499" opacity="0.5"/>
<path d="M607.1 262.00 H609.3" stroke="#c4c8cc" stroke-width="0.45" opacity="1" fill="none"/>
<rect x="611.31" y="258.95" width="1.60" height="1.70" fill="#5a5f64" opacity="0.5"/>
<path d="M611.0 262.00 H613.2" stroke="#c4c8cc" stroke-width="0.45" opacity="1" fill="none"/>
<rect x="561.00" y="265.10" width="1.60" height="1.70" fill="#9aa0a5" opacity="0.5"/>
<path d="M560.7 268.15 H562.9" stroke="#c4c8cc" stroke-width="0.45" opacity="1" fill="none"/>
<rect x="564.87" y="265.10" width="1.60" height="1.70" fill="#5a5f64" opacity="0.5"/>
<path d="M564.6 268.15 H566.8" stroke="#c4c8cc" stroke-width="0.45" opacity="1" fill="none"/>
<rect x="568.74" y="265.10" width="1.60" height="1.70" fill="#8f9499" opacity="0.5"/>
<path d="M568.4 268.15 H570.6" stroke="#c4c8cc" stroke-width="0.45" opacity="1" fill="none"/>
<rect x="572.61" y="265.10" width="1.60" height="1.70" fill="#3a3f45" opacity="0.5"/>
<path d="M572.3 268.15 H574.5" stroke="#c4c8cc" stroke-width="0.45" opacity="1" fill="none"/>
<rect x="576.48" y="265.10" width="1.60" height="1.70" fill="#5a5f64" opacity="0.5"/>
<path d="M576.2 268.15 H578.4" stroke="#c4c8cc" stroke-width="0.45" opacity="1" fill="none"/>
<rect x="580.35" y="265.10" width="1.60" height="1.70" fill="#9aa0a5" opacity="0.5"/>
<path d="M580.0 268.15 H582.2" stroke="#c4c8cc" stroke-width="0.45" opacity="1" fill="none"/>
<rect x="584.22" y="265.10" width="1.60" height="1.70" fill="#3a3f45" opacity="0.5"/>
<path d="M583.9 268.15 H586.1" stroke="#c4c8cc" stroke-width="0.45" opacity="1" fill="none"/>
<rect x="588.09" y="265.10" width="1.60" height="1.70" fill="#8f9499" opacity="0.5"/>
<path d="M587.8 268.15 H590.0" stroke="#c4c8cc" stroke-width="0.45" opacity="1" fill="none"/>
<rect x="591.96" y="265.10" width="1.60" height="1.70" fill="#3a3f45" opacity="0.5"/>
<path d="M591.7 268.15 H593.9" stroke="#c4c8cc" stroke-width="0.45" opacity="1" fill="none"/>
<rect x="595.83" y="265.10" width="1.60" height="1.70" fill="#9aa0a5" opacity="0.5"/>
<path d="M595.5 268.15 H597.7" stroke="#c4c8cc" stroke-width="0.45" opacity="1" fill="none"/>
<rect x="599.70" y="265.10" width="1.60" height="1.70" fill="#3a3f45" opacity="0.5"/>
<path d="M599.4 268.15 H601.6" stroke="#c4c8cc" stroke-width="0.45" opacity="1" fill="none"/>
<rect x="603.57" y="265.10" width="1.60" height="1.70" fill="#7f858a" opacity="0.5"/>
<path d="M603.3 268.15 H605.5" stroke="#c4c8cc" stroke-width="0.45" opacity="1" fill="none"/>
<rect x="607.44" y="265.10" width="1.60" height="1.70" fill="#b4b8bc" opacity="0.5"/>
<path d="M607.1 268.15 H609.3" stroke="#c4c8cc" stroke-width="0.45" opacity="1" fill="none"/>
<rect x="611.31" y="265.10" width="1.60" height="1.70" fill="#8f9499" opacity="0.5"/>
<path d="M611.0 268.15 H613.2" stroke="#c4c8cc" stroke-width="0.45" opacity="1" fill="none"/>
<rect x="561.00" y="271.25" width="1.60" height="1.70" fill="#7f858a" opacity="0.5"/>
<path d="M560.7 274.30 H562.9" stroke="#c4c8cc" stroke-width="0.45" opacity="1" fill="none"/>
<rect x="564.87" y="271.25" width="1.60" height="1.70" fill="#5a5f64" opacity="0.5"/>
<path d="M564.6 274.30 H566.8" stroke="#c4c8cc" stroke-width="0.45" opacity="1" fill="none"/>
<rect x="568.74" y="271.25" width="1.60" height="1.70" fill="#b4b8bc" opacity="0.5"/>
<path d="M568.4 274.30 H570.6" stroke="#c4c8cc" stroke-width="0.45" opacity="1" fill="none"/>
<rect x="572.61" y="271.25" width="1.60" height="1.70" fill="#7f858a" opacity="0.5"/>
<path d="M572.3 274.30 H574.5" stroke="#c4c8cc" stroke-width="0.45" opacity="1" fill="none"/>
<rect x="576.48" y="271.25" width="1.60" height="1.70" fill="#5a5f64" opacity="0.5"/>
<path d="M576.2 274.30 H578.4" stroke="#c4c8cc" stroke-width="0.45" opacity="1" fill="none"/>
<rect x="580.35" y="271.25" width="1.60" height="1.70" fill="#9aa0a5" opacity="0.5"/>
<path d="M580.0 274.30 H582.2" stroke="#c4c8cc" stroke-width="0.45" opacity="1" fill="none"/>
<rect x="584.22" y="271.25" width="1.60" height="1.70" fill="#2a2e32" opacity="0.5"/>
<path d="M583.9 274.30 H586.1" stroke="#c4c8cc" stroke-width="0.45" opacity="1" fill="none"/>
<rect x="588.09" y="271.25" width="1.60" height="1.70" fill="#5a5f64" opacity="0.5"/>
<path d="M587.8 274.30 H590.0" stroke="#c4c8cc" stroke-width="0.45" opacity="1" fill="none"/>
<rect x="591.96" y="271.25" width="1.60" height="1.70" fill="#5a5f64" opacity="0.5"/>
<path d="M591.7 274.30 H593.9" stroke="#c4c8cc" stroke-width="0.45" opacity="1" fill="none"/>
<rect x="595.83" y="271.25" width="1.60" height="1.70" fill="#3a3f45" opacity="0.5"/>
<path d="M595.5 274.30 H597.7" stroke="#c4c8cc" stroke-width="0.45" opacity="1" fill="none"/>
<rect x="599.70" y="271.25" width="1.60" height="1.70" fill="#9aa0a5" opacity="0.5"/>
<path d="M599.4 274.30 H601.6" stroke="#c4c8cc" stroke-width="0.45" opacity="1" fill="none"/>
<rect x="603.57" y="271.25" width="1.60" height="1.70" fill="#6f757b" opacity="0.5"/>
<path d="M603.3 274.30 H605.5" stroke="#c4c8cc" stroke-width="0.45" opacity="1" fill="none"/>
<rect x="607.44" y="271.25" width="1.60" height="1.70" fill="#8f9499" opacity="0.5"/>
<path d="M607.1 274.30 H609.3" stroke="#c4c8cc" stroke-width="0.45" opacity="1" fill="none"/>
<rect x="611.31" y="271.25" width="1.60" height="1.70" fill="#2a2e32" opacity="0.5"/>
<path d="M611.0 274.30 H613.2" stroke="#c4c8cc" stroke-width="0.45" opacity="1" fill="none"/>
<rect x="561.00" y="277.40" width="1.60" height="1.70" fill="#6f757b" opacity="0.5"/>
<path d="M560.7 280.45 H562.9" stroke="#c4c8cc" stroke-width="0.45" opacity="1" fill="none"/>
<rect x="564.87" y="277.40" width="1.60" height="1.70" fill="#6f757b" opacity="0.5"/>
<path d="M564.6 280.45 H566.8" stroke="#c4c8cc" stroke-width="0.45" opacity="1" fill="none"/>
<rect x="568.74" y="277.40" width="1.60" height="1.70" fill="#2a2e32" opacity="0.5"/>
<path d="M568.4 280.45 H570.6" stroke="#c4c8cc" stroke-width="0.45" opacity="1" fill="none"/>
<rect x="572.61" y="277.40" width="1.60" height="1.70" fill="#b4b8bc" opacity="0.5"/>
<path d="M572.3 280.45 H574.5" stroke="#c4c8cc" stroke-width="0.45" opacity="1" fill="none"/>
<rect x="576.48" y="277.40" width="1.60" height="1.70" fill="#9aa0a5" opacity="0.5"/>
<path d="M576.2 280.45 H578.4" stroke="#c4c8cc" stroke-width="0.45" opacity="1" fill="none"/>
<rect x="580.35" y="277.40" width="1.60" height="1.70" fill="#7f858a" opacity="0.5"/>
<path d="M580.0 280.45 H582.2" stroke="#c4c8cc" stroke-width="0.45" opacity="1" fill="none"/>
<rect x="584.22" y="277.40" width="1.60" height="1.70" fill="#9aa0a5" opacity="0.5"/>
<path d="M583.9 280.45 H586.1" stroke="#c4c8cc" stroke-width="0.45" opacity="1" fill="none"/>
<rect x="588.09" y="277.40" width="1.60" height="1.70" fill="#5a5f64" opacity="0.5"/>
<path d="M587.8 280.45 H590.0" stroke="#c4c8cc" stroke-width="0.45" opacity="1" fill="none"/>
<rect x="591.96" y="277.40" width="1.60" height="1.70" fill="#b4b8bc" opacity="0.5"/>
<path d="M591.7 280.45 H593.9" stroke="#c4c8cc" stroke-width="0.45" opacity="1" fill="none"/>
<rect x="595.83" y="277.40" width="1.60" height="1.70" fill="#6f757b" opacity="0.5"/>
<path d="M595.5 280.45 H597.7" stroke="#c4c8cc" stroke-width="0.45" opacity="1" fill="none"/>
<rect x="599.70" y="277.40" width="1.60" height="1.70" fill="#2a2e32" opacity="0.5"/>
<path d="M599.4 280.45 H601.6" stroke="#c4c8cc" stroke-width="0.45" opacity="1" fill="none"/>
<rect x="603.57" y="277.40" width="1.60" height="1.70" fill="#6f757b" opacity="0.5"/>
<path d="M603.3 280.45 H605.5" stroke="#c4c8cc" stroke-width="0.45" opacity="1" fill="none"/>
<rect x="607.44" y="277.40" width="1.60" height="1.70" fill="#b4b8bc" opacity="0.5"/>
<path d="M607.1 280.45 H609.3" stroke="#c4c8cc" stroke-width="0.45" opacity="1" fill="none"/>
<rect x="611.31" y="277.40" width="1.60" height="1.70" fill="#5a5f64" opacity="0.5"/>
<path d="M611.0 280.45 H613.2" stroke="#c4c8cc" stroke-width="0.45" opacity="1" fill="none"/>
<rect x="561.00" y="283.55" width="1.60" height="1.70" fill="#5a5f64" opacity="0.5"/>
<path d="M560.7 286.60 H562.9" stroke="#c4c8cc" stroke-width="0.45" opacity="1" fill="none"/>
<rect x="564.87" y="283.55" width="1.60" height="1.70" fill="#8f9499" opacity="0.5"/>
<path d="M564.6 286.60 H566.8" stroke="#c4c8cc" stroke-width="0.45" opacity="1" fill="none"/>
<rect x="568.74" y="283.55" width="1.60" height="1.70" fill="#7f858a" opacity="0.5"/>
<path d="M568.4 286.60 H570.6" stroke="#c4c8cc" stroke-width="0.45" opacity="1" fill="none"/>
<rect x="572.61" y="283.55" width="1.60" height="1.70" fill="#2a2e32" opacity="0.5"/>
<path d="M572.3 286.60 H574.5" stroke="#c4c8cc" stroke-width="0.45" opacity="1" fill="none"/>
<rect x="576.48" y="283.55" width="1.60" height="1.70" fill="#7f858a" opacity="0.5"/>
<path d="M576.2 286.60 H578.4" stroke="#c4c8cc" stroke-width="0.45" opacity="1" fill="none"/>
<rect x="580.35" y="283.55" width="1.60" height="1.70" fill="#6f757b" opacity="0.5"/>
<path d="M580.0 286.60 H582.2" stroke="#c4c8cc" stroke-width="0.45" opacity="1" fill="none"/>
<rect x="584.22" y="283.55" width="1.60" height="1.70" fill="#8f9499" opacity="0.5"/>
<path d="M583.9 286.60 H586.1" stroke="#c4c8cc" stroke-width="0.45" opacity="1" fill="none"/>
<rect x="588.09" y="283.55" width="1.60" height="1.70" fill="#3a3f45" opacity="0.5"/>
<path d="M587.8 286.60 H590.0" stroke="#c4c8cc" stroke-width="0.45" opacity="1" fill="none"/>
<rect x="591.96" y="283.55" width="1.60" height="1.70" fill="#5a5f64" opacity="0.5"/>
<path d="M591.7 286.60 H593.9" stroke="#c4c8cc" stroke-width="0.45" opacity="1" fill="none"/>
<rect x="595.83" y="283.55" width="1.60" height="1.70" fill="#2a2e32" opacity="0.5"/>
<path d="M595.5 286.60 H597.7" stroke="#c4c8cc" stroke-width="0.45" opacity="1" fill="none"/>
<rect x="599.70" y="283.55" width="1.60" height="1.70" fill="#2a2e32" opacity="0.5"/>
<path d="M599.4 286.60 H601.6" stroke="#c4c8cc" stroke-width="0.45" opacity="1" fill="none"/>
<rect x="603.57" y="283.55" width="1.60" height="1.70" fill="#2a2e32" opacity="0.5"/>
<path d="M603.3 286.60 H605.5" stroke="#c4c8cc" stroke-width="0.45" opacity="1" fill="none"/>
<rect x="607.44" y="283.55" width="1.60" height="1.70" fill="#6f757b" opacity="0.5"/>
<path d="M607.1 286.60 H609.3" stroke="#c4c8cc" stroke-width="0.45" opacity="1" fill="none"/>
<rect x="611.31" y="283.55" width="1.60" height="1.70" fill="#6f757b" opacity="0.5"/>
<path d="M611.0 286.60 H613.2" stroke="#c4c8cc" stroke-width="0.45" opacity="1" fill="none"/>
<rect x="561.00" y="289.70" width="1.60" height="1.70" fill="#5a5f64" opacity="0.5"/>
<path d="M560.7 292.75 H562.9" stroke="#c4c8cc" stroke-width="0.45" opacity="1" fill="none"/>
<rect x="564.87" y="289.70" width="1.60" height="1.70" fill="#5a5f64" opacity="0.5"/>
<path d="M564.6 292.75 H566.8" stroke="#c4c8cc" stroke-width="0.45" opacity="1" fill="none"/>
<rect x="568.74" y="289.70" width="1.60" height="1.70" fill="#b4b8bc" opacity="0.5"/>
<path d="M568.4 292.75 H570.6" stroke="#c4c8cc" stroke-width="0.45" opacity="1" fill="none"/>
<rect x="572.61" y="289.70" width="1.60" height="1.70" fill="#6f757b" opacity="0.5"/>
<path d="M572.3 292.75 H574.5" stroke="#c4c8cc" stroke-width="0.45" opacity="1" fill="none"/>
<rect x="576.48" y="289.70" width="1.60" height="1.70" fill="#5a5f64" opacity="0.5"/>
<path d="M576.2 292.75 H578.4" stroke="#c4c8cc" stroke-width="0.45" opacity="1" fill="none"/>
<rect x="580.35" y="289.70" width="1.60" height="1.70" fill="#3a3f45" opacity="0.5"/>
<path d="M580.0 292.75 H582.2" stroke="#c4c8cc" stroke-width="0.45" opacity="1" fill="none"/>
<rect x="584.22" y="289.70" width="1.60" height="1.70" fill="#b4b8bc" opacity="0.5"/>
<path d="M583.9 292.75 H586.1" stroke="#c4c8cc" stroke-width="0.45" opacity="1" fill="none"/>
<rect x="588.09" y="289.70" width="1.60" height="1.70" fill="#6f757b" opacity="0.5"/>
<path d="M587.8 292.75 H590.0" stroke="#c4c8cc" stroke-width="0.45" opacity="1" fill="none"/>
<rect x="591.96" y="289.70" width="1.60" height="1.70" fill="#b4b8bc" opacity="0.5"/>
<path d="M591.7 292.75 H593.9" stroke="#c4c8cc" stroke-width="0.45" opacity="1" fill="none"/>
<rect x="595.83" y="289.70" width="1.60" height="1.70" fill="#8f9499" opacity="0.5"/>
<path d="M595.5 292.75 H597.7" stroke="#c4c8cc" stroke-width="0.45" opacity="1" fill="none"/>
<rect x="599.70" y="289.70" width="1.60" height="1.70" fill="#2a2e32" opacity="0.5"/>
<path d="M599.4 292.75 H601.6" stroke="#c4c8cc" stroke-width="0.45" opacity="1" fill="none"/>
<rect x="603.57" y="289.70" width="1.60" height="1.70" fill="#3a3f45" opacity="0.5"/>
<path d="M603.3 292.75 H605.5" stroke="#c4c8cc" stroke-width="0.45" opacity="1" fill="none"/>
<rect x="607.44" y="289.70" width="1.60" height="1.70" fill="#6f757b" opacity="0.5"/>
<path d="M607.1 292.75 H609.3" stroke="#c4c8cc" stroke-width="0.45" opacity="1" fill="none"/>
<rect x="611.31" y="289.70" width="1.60" height="1.70" fill="#2a2e32" opacity="0.5"/>
<path d="M611.0 292.75 H613.2" stroke="#c4c8cc" stroke-width="0.45" opacity="1" fill="none"/>
<rect x="561.00" y="295.85" width="1.60" height="1.70" fill="#7f858a" opacity="0.5"/>
<path d="M560.7 298.90 H562.9" stroke="#c4c8cc" stroke-width="0.45" opacity="1" fill="none"/>
<rect x="564.87" y="295.85" width="1.60" height="1.70" fill="#5a5f64" opacity="0.5"/>
<path d="M564.6 298.90 H566.8" stroke="#c4c8cc" stroke-width="0.45" opacity="1" fill="none"/>
<rect x="568.74" y="295.85" width="1.60" height="1.70" fill="#6f757b" opacity="0.5"/>
<path d="M568.4 298.90 H570.6" stroke="#c4c8cc" stroke-width="0.45" opacity="1" fill="none"/>
<rect x="572.61" y="295.85" width="1.60" height="1.70" fill="#3a3f45" opacity="0.5"/>
<path d="M572.3 298.90 H574.5" stroke="#c4c8cc" stroke-width="0.45" opacity="1" fill="none"/>
<rect x="576.48" y="295.85" width="1.60" height="1.70" fill="#9aa0a5" opacity="0.5"/>
<path d="M576.2 298.90 H578.4" stroke="#c4c8cc" stroke-width="0.45" opacity="1" fill="none"/>
<rect x="580.35" y="295.85" width="1.60" height="1.70" fill="#b4b8bc" opacity="0.5"/>
<path d="M580.0 298.90 H582.2" stroke="#c4c8cc" stroke-width="0.45" opacity="1" fill="none"/>
<rect x="584.22" y="295.85" width="1.60" height="1.70" fill="#7f858a" opacity="0.5"/>
<path d="M583.9 298.90 H586.1" stroke="#c4c8cc" stroke-width="0.45" opacity="1" fill="none"/>
<rect x="588.09" y="295.85" width="1.60" height="1.70" fill="#9aa0a5" opacity="0.5"/>
<path d="M587.8 298.90 H590.0" stroke="#c4c8cc" stroke-width="0.45" opacity="1" fill="none"/>
<rect x="591.96" y="295.85" width="1.60" height="1.70" fill="#8f9499" opacity="0.5"/>
<path d="M591.7 298.90 H593.9" stroke="#c4c8cc" stroke-width="0.45" opacity="1" fill="none"/>
<rect x="595.83" y="295.85" width="1.60" height="1.70" fill="#8f9499" opacity="0.5"/>
<path d="M595.5 298.90 H597.7" stroke="#c4c8cc" stroke-width="0.45" opacity="1" fill="none"/>
<rect x="599.70" y="295.85" width="1.60" height="1.70" fill="#6f757b" opacity="0.5"/>
<path d="M599.4 298.90 H601.6" stroke="#c4c8cc" stroke-width="0.45" opacity="1" fill="none"/>
<rect x="603.57" y="295.85" width="1.60" height="1.70" fill="#5a5f64" opacity="0.5"/>
<path d="M603.3 298.90 H605.5" stroke="#c4c8cc" stroke-width="0.45" opacity="1" fill="none"/>
<rect x="607.44" y="295.85" width="1.60" height="1.70" fill="#7f858a" opacity="0.5"/>
<path d="M607.1 298.90 H609.3" stroke="#c4c8cc" stroke-width="0.45" opacity="1" fill="none"/>
<rect x="611.31" y="295.85" width="1.60" height="1.70" fill="#6f757b" opacity="0.5"/>
<path d="M611.0 298.90 H613.2" stroke="#c4c8cc" stroke-width="0.45" opacity="1" fill="none"/>
<rect x="610.80" y="265.20" width="2.00" height="2.00" fill="#2b95f0" />
<rect x="557.20" y="271.00" width="2.00" height="2.00" fill="#2b95f0" />
<rect x="557.20" y="277.00" width="2.00" height="2.00" fill="#e02a3a" />
<rect x="564.60" y="289.20" width="2.00" height="2.00" fill="#e02a3a" />
<rect x="576.00" y="265.00" width="2.00" height="2.00" fill="#e8a0a8" />
<rect x="580.00" y="277.40" width="2.00" height="2.00" fill="#e8a0a8" />
<rect x="584.00" y="277.40" width="2.00" height="2.00" fill="#e8a0a8" />
<rect x="595.20" y="283.40" width="2.00" height="2.00" fill="#e8b030" />
<rect x="599.00" y="258.80" width="2.00" height="2.00" fill="#1a1a1c" />
<rect x="587.60" y="271.00" width="2.00" height="2.00" fill="#1a1a1c" />
<rect x="591.40" y="271.00" width="2.00" height="2.00" fill="#2a2a2e" />
<rect x="561.00" y="295.40" width="2.00" height="2.00" fill="#1a1a1c" />
<path d="M618.4 261.40 H622.4" stroke="#9a9fa4" stroke-width="0.5" opacity="1" fill="none"/>
<rect x="623.60" y="263.00" width="6.00" height="1.20" fill="#f0a828" />
<path d="M626.6 266.6 C631 266.6 632.4 270 632 273 C633.6 274.4 633.6 277 632 278.6 C630 280.8 623.2 280.8 621.2 278.6 C619.6 277 619.6 274.4 621.2 273 C620.8 270 622.2 266.6 626.6 266.6 Z" fill="#f6b31e"/>
<ellipse cx="626.6" cy="276.6" rx="4.4" ry="3.6" fill="#f9c642" opacity="0.9"/>
<rect x="624.40" y="267.20" width="5.20" height="5.40" fill="#a83aa8" rx="1.2"/>
<path d="M625.0 268.60 H629.0 M625.0 270.00 H629.0 M625.0 271.40 H629.0" stroke="#e8a040" stroke-width="0.5" opacity="1" fill="none"/>
<circle cx="620.4" cy="272.2" r="1.1" fill="#7a5ac0"/><circle cx="632.8" cy="272.2" r="1.1" fill="#7a5ac0"/>
<path d="M618.4 283.80 H625.0" stroke="#8f9499" stroke-width="0.5" opacity="1" fill="none"/>
<path d="M618.4 285.20 H623.0 M618.4 286.60 H623.0 M618.4 288.00 H623.0" stroke="#a4a9ad" stroke-width="0.5" opacity="1" fill="none"/>
<path d="M618.4 294.40 H629.6 M618.4 296.00 H629.6 M618.4 297.60 H629.6" stroke="#b4b8bc" stroke-width="0.45" opacity="1" fill="none"/>
<rect x="204.10" y="320.00" width="82.40" height="58.10" fill="#262626" opacity="0.5" rx="1"/>
<rect x="204.60" y="320.40" width="81.40" height="57.00" fill="#1c1c1c" opacity="0.7" rx="0.4"/>
<rect x="205.00" y="320.70" width="80.20" height="55.60" fill="#f2f2f2" />
<rect x="205.00" y="320.70" width="80.20" height="55.60" fill="url(#gPurp)" />
<rect x="205.00" y="320.70" width="1.20" height="47.30" fill="#e8903a" opacity="0.6"/>
<rect x="268.60" y="321.00" width="16.60" height="10.00" fill="#5f2a92" />
<path d="M274.4 320.7 H285.2 V334 L271.6 330.6 Z" fill="#f0701a" />
<path d="M279 321 L285.2 322 V331 L276 329 Z" fill="#f6981e" opacity="0.9"/>
<rect x="283.00" y="330.00" width="2.20" height="46.30" fill="url(#gWallR)" />
<rect x="232.00" y="374.40" width="53.20" height="1.90" fill="url(#gWallB)" />
<rect x="207.00" y="321.80" width="61.80" height="48.60" fill="#fafafa" />
<rect x="207.80" y="322.40" width="1.20" height="1.40" fill="#2d7fd8" />
<rect x="230.00" y="323.00" width="14.00" height="0.60" fill="#d0d3d6" />
<rect x="266.40" y="322.80" width="1.40" height="1.00" fill="#8f9499" />
<path d="M208.6 325.40 H213.0" stroke="#6f757b" stroke-width="0.6" opacity="0.9" fill="none"/>
<path d="M214.6 325.40 H218.0" stroke="#6f757b" stroke-width="0.6" opacity="0.9" fill="none"/>
<path d="M219.6 325.40 H221.6" stroke="#6f757b" stroke-width="0.6" opacity="0.9" fill="none"/>
<path d="M223.0 325.40 H226.0" stroke="#6f757b" stroke-width="0.6" opacity="0.9" fill="none"/>
<path d="M227.4 325.40 H230.0" stroke="#6f757b" stroke-width="0.6" opacity="0.9" fill="none"/>
<path d="M231.4 325.40 H234.4" stroke="#6f757b" stroke-width="0.6" opacity="0.9" fill="none"/>
<path d="M236.0 325.40 H238.6" stroke="#6f757b" stroke-width="0.6" opacity="0.9" fill="none"/>
<path d="M240.4 325.40 H244.6" stroke="#6f757b" stroke-width="0.6" opacity="0.9" fill="none"/>
<path d="M246.4 325.40 H250.0" stroke="#6f757b" stroke-width="0.6" opacity="0.9" fill="none"/>
<path d="M252.0 325.40 H255.6" stroke="#6f757b" stroke-width="0.6" opacity="0.9" fill="none"/>
<rect x="207.00" y="326.40" width="61.80" height="3.00" fill="#f1f2f3" />
<path d="M209.6 328.00 H216.4" stroke="#7f858a" stroke-width="0.6" opacity="0.9" fill="none"/>
<path d="M221.0 328.00 H226.6" stroke="#7f858a" stroke-width="0.6" opacity="0.9" fill="none"/>
<path d="M230.4 328.00 H241.0" stroke="#7f858a" stroke-width="0.6" opacity="0.9" fill="none"/>
<path d="M245.0 328.00 H250.0" stroke="#7f858a" stroke-width="0.6" opacity="0.9" fill="none"/>
<path d="M254.4 328.00 H260.0" stroke="#7f858a" stroke-width="0.6" opacity="0.9" fill="none"/>
<rect x="219.40" y="327.20" width="1.00" height="1.60" fill="#3a3f45" />
<rect x="252.60" y="327.20" width="1.00" height="1.60" fill="#3a3f45" />
<rect x="207.20" y="330.00" width="2.40" height="38.00" fill="#eceded" />
<rect x="207.80" y="332.00" width="1.10" height="1.10" fill="#8f9499" />
<rect x="207.80" y="335.10" width="1.10" height="1.10" fill="#8f9499" />
<rect x="207.80" y="338.20" width="1.10" height="1.10" fill="#8f9499" />
<rect x="207.80" y="341.30" width="1.10" height="1.10" fill="#8f9499" />
<rect x="207.80" y="344.40" width="1.10" height="1.10" fill="#8f9499" />
<rect x="207.80" y="347.50" width="1.10" height="1.10" fill="#8f9499" />
<rect x="207.80" y="350.60" width="1.10" height="1.10" fill="#8f9499" />
<rect x="207.80" y="353.70" width="1.10" height="1.10" fill="#8f9499" />
<rect x="207.80" y="356.80" width="1.10" height="1.10" fill="#8f9499" />
<rect x="207.80" y="359.90" width="1.10" height="1.10" fill="#8f9499" />
<rect x="207.80" y="363.00" width="1.10" height="1.10" fill="#8f9499" />
<path d="M211.0 331.60 H214.6" stroke="#9a9fa4" stroke-width="0.5" opacity="1" fill="none"/>
<path d="M211.6 333.60 H216.0" stroke="#8f9499" stroke-width="0.5" opacity="1" fill="none"/>
<rect x="210.40" y="334.80" width="16.60" height="1.80" fill="#bfe0f6" />
<rect x="212.20" y="335.20" width="1.20" height="1.10" fill="#3c9fe0" />
<path d="M214.4 335.80 H219.0" stroke="#6f757b" stroke-width="0.5" opacity="1" fill="none"/>
<path d="M214.4 338.20 H219.6" stroke="#e0a08a" stroke-width="0.5" opacity="1" fill="none"/>
<path d="M210.6 364.20 H214.6" stroke="#b4b8bc" stroke-width="0.5" opacity="1" fill="none"/>
<rect x="209.80" y="366.20" width="17.00" height="1.60" fill="#f1f2f3" />
<path d="M210.6 367.00 H220.0" stroke="#8f9499" stroke-width="0.5" opacity="1" fill="none"/>
<rect x="226.40" y="329.90" width="57.20" height="44.70" fill="#2a2a2a" opacity="0.35"/>
<rect x="227.00" y="330.30" width="56.00" height="43.70" fill="#fdfdfd" />
<rect x="227.00" y="330.30" width="56.00" height="1.90" fill="#3c454d" />
<rect x="243.60" y="330.90" width="22.40" height="0.60" fill="#8f969b" />
<rect x="280.60" y="330.70" width="1.40" height="1.20" fill="#e4e7e9" />
<rect x="228.00" y="330.70" width="1.20" height="1.20" fill="#6a8ac8" />
<path d="M228.4 334.00 H230.0" stroke="#6f757b" stroke-width="0.55" opacity="0.9" fill="none"/>
<path d="M231.6 334.00 H233.2" stroke="#6f757b" stroke-width="0.55" opacity="0.9" fill="none"/>
<path d="M235.0 334.00 H236.6" stroke="#6f757b" stroke-width="0.55" opacity="0.9" fill="none"/>
<path d="M238.0 334.00 H240.6" stroke="#6f757b" stroke-width="0.55" opacity="0.9" fill="none"/>
<path d="M242.4 334.00 H247.0" stroke="#6f757b" stroke-width="0.55" opacity="0.9" fill="none"/>
<path d="M249.0 334.00 H253.0" stroke="#6f757b" stroke-width="0.55" opacity="0.9" fill="none"/>
<path d="M255.0 334.00 H259.0" stroke="#6f757b" stroke-width="0.55" opacity="0.9" fill="none"/>
<path d="M261.0 334.00 H264.6" stroke="#6f757b" stroke-width="0.55" opacity="0.9" fill="none"/>
<path d="M266.4 334.00 H270.6" stroke="#6f757b" stroke-width="0.55" opacity="0.9" fill="none"/>
<path d="M272.0 334.00 H274.0" stroke="#6f757b" stroke-width="0.55" opacity="0.9" fill="none"/>
<rect x="227.40" y="335.20" width="55.20" height="3.00" fill="#f1f2f3" />
<rect x="228.20" y="336.00" width="1.20" height="1.40" fill="#3a3f45" />
<path d="M230.4 336.80 H236.6" stroke="#5a5f64" stroke-width="0.6" opacity="1" fill="none"/>
<path d="M239.6 336.80 H247.0" stroke="#b4b8bc" stroke-width="0.6" opacity="1" fill="none"/>
<rect x="249.20" y="336.00" width="1.20" height="1.40" fill="#6f757b" />
<path d="M251.0 336.80 H255.0" stroke="#7f858a" stroke-width="0.6" opacity="1" fill="none"/>
<path d="M257.4 336.80 H265.0" stroke="#c4c8cc" stroke-width="0.6" opacity="1" fill="none"/>
<rect x="280.40" y="338.40" width="2.20" height="33.60" fill="#f4f5f6" />
<rect x="280.90" y="340.00" width="1.20" height="1.10" fill="#8f9499" />
<rect x="280.90" y="343.20" width="1.20" height="1.10" fill="#7fa8d8" />
<rect x="280.90" y="346.40" width="1.20" height="1.10" fill="#8f9499" />
<rect x="280.90" y="349.60" width="1.20" height="1.10" fill="#7fa8d8" />
<rect x="280.90" y="352.80" width="1.20" height="1.10" fill="#8f9499" />
<rect x="280.90" y="356.00" width="1.20" height="1.10" fill="#7fa8d8" />
<rect x="280.90" y="359.20" width="1.20" height="1.10" fill="#7fa8d8" />
<rect x="280.90" y="362.40" width="1.20" height="1.10" fill="#8f9499" />
<rect x="280.90" y="365.60" width="1.20" height="1.10" fill="#7fa8d8" />
<rect x="241.20" y="347.00" width="24.70" height="15.70" fill="#c2185e" />
<rect x="241.20" y="347.00" width="24.70" height="15.70" fill="none" stroke="#ffffff" stroke-width="0.3"/>
<path d="M250.6 347 H265.9 V353 L260 351.5 L255.5 348.6 Z" fill="#2f7a2a" />
<path d="M262 347 H265.9 V352 Z" fill="#1a2a1a" opacity="0.7"/>
<path d="M241.2 347 H246 L244 350 L241.2 352 Z" fill="#a0121a" />
<path d="M258 357 L265.9 355 V362.7 H256 Z" fill="#5a1230" opacity="0.75"/>
<circle cx="247.6" cy="350.8" r="2.6" fill="#e8408a" opacity="0.92"/>
<circle cx="253.4" cy="352.6" r="3.0" fill="#f05aa0" opacity="0.92"/>
<circle cx="259.6" cy="354.6" r="2.6" fill="#e03a86" opacity="0.92"/>
<circle cx="249.0" cy="356.4" r="2.8" fill="#ee4c96" opacity="0.92"/>
<circle cx="255.6" cy="358.8" r="2.6" fill="#e8408a" opacity="0.92"/>
<circle cx="244.2" cy="358.8" r="2.2" fill="#d82a76" opacity="0.92"/>
<circle cx="262.4" cy="360" r="2.0" fill="#d83a80" opacity="0.92"/>
<circle cx="250" cy="361" r="1.8" fill="#f06aa8" opacity="0.92"/>
<circle cx="247.6" cy="350.8" r="0.85" fill="#f6d83a"/>
<circle cx="253.4" cy="352.6" r="0.85" fill="#f6d83a"/>
<circle cx="259.6" cy="354.6" r="0.85" fill="#f6d83a"/>
<circle cx="249.0" cy="356.4" r="0.85" fill="#f6d83a"/>
<circle cx="255.6" cy="358.8" r="0.85" fill="#f6d83a"/>
<circle cx="244.2" cy="358.8" r="0.85" fill="#f6d83a"/>
<rect x="227.40" y="371.60" width="55.20" height="2.00" fill="#f1f2f3" />
<rect x="229.00" y="372.10" width="1.10" height="1.10" fill="#9ab4d0" opacity="0.8"/>
<rect x="231.10" y="372.10" width="1.10" height="1.10" fill="#6f757b" opacity="0.8"/>
<rect x="233.20" y="372.10" width="1.10" height="1.10" fill="#9ab4d0" opacity="0.8"/>
<rect x="235.30" y="372.10" width="1.10" height="1.10" fill="#9ab4d0" opacity="0.8"/>
<rect x="237.40" y="372.10" width="1.10" height="1.10" fill="#6f757b" opacity="0.8"/>
<rect x="239.50" y="372.10" width="1.10" height="1.10" fill="#9ab4d0" opacity="0.8"/>
<rect x="241.60" y="372.10" width="1.10" height="1.10" fill="#9ab4d0" opacity="0.8"/>
<rect x="243.70" y="372.10" width="1.10" height="1.10" fill="#6f757b" opacity="0.8"/>
<rect x="245.80" y="372.10" width="1.10" height="1.10" fill="#9ab4d0" opacity="0.8"/>
<rect x="247.90" y="372.10" width="1.10" height="1.10" fill="#9ab4d0" opacity="0.8"/>
<rect x="250.00" y="372.10" width="1.10" height="1.10" fill="#6f757b" opacity="0.8"/>
<rect x="252.10" y="372.10" width="1.10" height="1.10" fill="#6f757b" opacity="0.8"/>
<rect x="254.20" y="372.10" width="1.10" height="1.10" fill="#9ab4d0" opacity="0.8"/>
<rect x="256.30" y="372.10" width="1.10" height="1.10" fill="#9ab4d0" opacity="0.8"/>
<rect x="258.40" y="372.10" width="1.10" height="1.10" fill="#6f757b" opacity="0.8"/>
<rect x="260.50" y="372.10" width="1.10" height="1.10" fill="#9ab4d0" opacity="0.8"/>
<rect x="262.60" y="372.10" width="1.10" height="1.10" fill="#9ab4d0" opacity="0.8"/>
<rect x="264.70" y="372.10" width="1.10" height="1.10" fill="#6f757b" opacity="0.8"/>
<rect x="266.80" y="372.10" width="1.10" height="1.10" fill="#9ab4d0" opacity="0.8"/>
<rect x="268.90" y="372.10" width="1.10" height="1.10" fill="#9ab4d0" opacity="0.8"/>
<rect x="271.00" y="372.10" width="1.10" height="1.10" fill="#9ab4d0" opacity="0.8"/>
<rect x="273.10" y="372.10" width="1.10" height="1.10" fill="#6f757b" opacity="0.8"/>
<rect x="275.20" y="372.10" width="1.10" height="1.10" fill="#9ab4d0" opacity="0.8"/>
<rect x="277.30" y="372.10" width="1.10" height="1.10" fill="#9ab4d0" opacity="0.8"/>
<rect x="292.10" y="326.70" width="82.40" height="50.10" fill="#262626" opacity="0.5" rx="1"/>
<rect x="292.60" y="327.10" width="81.40" height="49.00" fill="#1c1c1c" opacity="0.7" rx="0.4"/>
<rect x="293.00" y="327.40" width="80.20" height="47.60" fill="#fdfdfd" />
<rect x="293.00" y="327.40" width="80.20" height="1.20" fill="#4c555d" />
<rect x="293.80" y="327.60" width="1.00" height="0.80" fill="#3c9fe0" />
<rect x="327.00" y="327.80" width="10.00" height="0.50" fill="#aab0b5" />
<rect x="371.20" y="327.60" width="1.20" height="0.90" fill="#e4e7e9" />
<rect x="293.40" y="328.60" width="79.40" height="4.00" fill="#f6f7f7" />
<rect x="299.40" y="329.80" width="1.20" height="1.60" fill="#3a3f45" />
<rect x="302.40" y="329.80" width="1.20" height="1.60" fill="#6f757b" />
<rect x="305.40" y="329.80" width="1.20" height="1.60" fill="#3a3f45" />
<path d="M308.6 330.60 H312.4" stroke="#b4b8bc" stroke-width="0.6" opacity="1" fill="none"/>
<rect x="313.20" y="329.60" width="5.80" height="2.00" fill="#cfd2d5" />
<rect x="320.40" y="329.80" width="1.20" height="1.60" fill="#7f858a" />
<path d="M322.4 330.60 H324.6" stroke="#9a9fa4" stroke-width="0.6" opacity="1" fill="none"/>
<rect x="326.00" y="329.80" width="1.20" height="1.60" fill="#7f858a" />
<path d="M328.0 330.60 H331.0" stroke="#9a9fa4" stroke-width="0.6" opacity="1" fill="none"/>
<rect x="307.00" y="332.60" width="52.60" height="41.00" fill="#ffffff" stroke="#cfe6f6" stroke-width="0.4"/>
<path d="M308.6 333.80 H311.4" stroke="#b4b8bc" stroke-width="0.5" opacity="1" fill="none"/>
<path d="M313.4 333.80 H316.6" stroke="#b4b8bc" stroke-width="0.5" opacity="1" fill="none"/>
<rect x="318.40" y="333.20" width="6.00" height="1.20" fill="#7f858a" opacity="0.8"/>
<rect x="293.40" y="332.60" width="13.40" height="41.80" fill="#f4f5f6" />
<path d="M294.6 333.80 H298.0" stroke="#aab0b5" stroke-width="0.5" opacity="1" fill="none"/>
<rect x="294.00" y="334.60" width="12.60" height="1.40" fill="#2d97ea" />
<rect x="294.60" y="337.20" width="0.80" height="0.80" fill="#d05a5a" />
<path d="M296.2 337.60 H299.6" stroke="#9a9fa4" stroke-width="0.5" opacity="1" fill="none"/>
<rect x="294.60" y="338.75" width="0.80" height="0.80" fill="#5a5f64" />
<path d="M296.2 339.15 H300.7" stroke="#9a9fa4" stroke-width="0.5" opacity="1" fill="none"/>
<rect x="294.60" y="340.30" width="0.80" height="0.80" fill="#5ab05a" />
<path d="M296.2 340.70 H301.8" stroke="#9a9fa4" stroke-width="0.5" opacity="1" fill="none"/>
<path d="M294.6 342.25 H299.0" stroke="#c0c4c7" stroke-width="0.5" opacity="1" fill="none"/>
<rect x="294.60" y="343.40" width="0.80" height="0.80" fill="#d05a5a" />
<path d="M296.2 343.80 H299.6" stroke="#9a9fa4" stroke-width="0.5" opacity="1" fill="none"/>
<rect x="294.60" y="344.95" width="0.80" height="0.80" fill="#5a5f64" />
<path d="M296.2 345.35 H300.7" stroke="#9a9fa4" stroke-width="0.5" opacity="1" fill="none"/>
<rect x="294.60" y="346.50" width="0.80" height="0.80" fill="#5ab05a" />
<path d="M296.2 346.90 H301.8" stroke="#9a9fa4" stroke-width="0.5" opacity="1" fill="none"/>
<rect x="294.60" y="348.05" width="0.80" height="0.80" fill="#7f858a" />
<path d="M296.2 348.45 H302.9" stroke="#9a9fa4" stroke-width="0.5" opacity="1" fill="none"/>
<rect x="294.60" y="349.60" width="0.80" height="0.80" fill="#d05a5a" />
<path d="M296.2 350.00 H299.6" stroke="#9a9fa4" stroke-width="0.5" opacity="1" fill="none"/>
<rect x="294.60" y="351.15" width="0.80" height="0.80" fill="#5a5f64" />
<path d="M296.2 351.55 H300.7" stroke="#9a9fa4" stroke-width="0.5" opacity="1" fill="none"/>
<path d="M294.6 353.10 H299.0" stroke="#c0c4c7" stroke-width="0.5" opacity="1" fill="none"/>
<rect x="294.60" y="354.25" width="0.80" height="0.80" fill="#7f858a" />
<path d="M296.2 354.65 H302.9" stroke="#9a9fa4" stroke-width="0.5" opacity="1" fill="none"/>
<rect x="294.60" y="355.80" width="0.80" height="0.80" fill="#d05a5a" />
<path d="M296.2 356.20 H299.6" stroke="#9a9fa4" stroke-width="0.5" opacity="1" fill="none"/>
<rect x="294.60" y="357.35" width="0.80" height="0.80" fill="#5a5f64" />
<path d="M296.2 357.75 H300.7" stroke="#9a9fa4" stroke-width="0.5" opacity="1" fill="none"/>
<rect x="294.60" y="358.90" width="0.80" height="0.80" fill="#5ab05a" />
<path d="M296.2 359.30 H301.8" stroke="#9a9fa4" stroke-width="0.5" opacity="1" fill="none"/>
<path d="M294.6 360.85 H299.0" stroke="#c0c4c7" stroke-width="0.5" opacity="1" fill="none"/>
<rect x="294.60" y="362.00" width="0.80" height="0.80" fill="#d05a5a" />
<path d="M296.2 362.40 H299.6" stroke="#9a9fa4" stroke-width="0.5" opacity="1" fill="none"/>
<rect x="294.60" y="363.55" width="0.80" height="0.80" fill="#5a5f64" />
<path d="M296.2 363.95 H300.7" stroke="#9a9fa4" stroke-width="0.5" opacity="1" fill="none"/>
<rect x="294.60" y="365.10" width="0.80" height="0.80" fill="#5ab05a" />
<path d="M296.2 365.50 H301.8" stroke="#9a9fa4" stroke-width="0.5" opacity="1" fill="none"/>
<rect x="294.60" y="366.65" width="0.80" height="0.80" fill="#7f858a" />
<path d="M296.2 367.05 H302.9" stroke="#9a9fa4" stroke-width="0.5" opacity="1" fill="none"/>
<rect x="294.60" y="368.20" width="0.80" height="0.80" fill="#d05a5a" />
<path d="M296.2 368.60 H299.6" stroke="#9a9fa4" stroke-width="0.5" opacity="1" fill="none"/>
<rect x="294.60" y="369.75" width="0.80" height="0.80" fill="#5a5f64" />
<path d="M296.2 370.15 H300.7" stroke="#9a9fa4" stroke-width="0.5" opacity="1" fill="none"/>
<rect x="294.60" y="371.30" width="0.80" height="0.80" fill="#5ab05a" />
<path d="M296.2 371.70 H301.8" stroke="#9a9fa4" stroke-width="0.5" opacity="1" fill="none"/>
<rect x="310.60" y="335.60" width="4.20" height="4.80" fill="#10131a" />
<path d="M310.6 335.6 H313 L314.8 340.4 H310.6 Z" fill="#d81a2a" />
<path d="M313.4 338 L314.8 336.6 V340.4 H312 Z" fill="#18a8c8" opacity="0.9"/>
<rect x="320.80" y="335.80" width="4.20" height="4.60" fill="#0c0e12" />
<rect x="330.80" y="335.80" width="4.60" height="4.80" fill="#0c0e12" />
<path d="M330.8 338.4 L335.4 336.4 V340.6 H330.8 Z" fill="#f1f3f4" />
<path d="M331.4 340.6 L335 338 L335.4 340.6 Z" fill="#18a8c8" />
<rect x="341.00" y="335.80" width="4.20" height="4.60" fill="#0a0b0e" />
<rect x="350.80" y="335.80" width="4.60" height="4.80" fill="#0a0b0e" />
<path d="M350.8 335.8 H355.4 V337.8 L352.8 336.6 Z" fill="#e8142a" />
<rect x="310.60" y="343.20" width="4.40" height="4.40" fill="#0b0d12" />
<path d="M310.6 347.6 L313.4 345 L314 347.6 Z" fill="#18b8d8" />
<rect x="320.60" y="343.20" width="4.60" height="4.40" fill="#0b0d12" />
<path d="M321 347.6 L324 344 L324.6 347.6 Z" fill="#18a8c8" opacity="0.9"/>
<rect x="330.60" y="343.20" width="4.80" height="4.60" fill="#14100c" />
<path d="M332.4 347.6 L334.2 343.8 L334.8 345 L333.4 347.8 Z" fill="#e88a2a" />
<path d="M331 347.6 L332.6 344.6 L333 346 Z" fill="#3aa05a" />
<rect x="338.80" y="343.40" width="8.20" height="4.00" fill="#0d120d" />
<rect x="341.00" y="344.80" width="4.40" height="1.20" fill="#3a6a2a" />
<rect x="349.80" y="343.40" width="6.00" height="4.20" fill="#0a0b0e" />
<rect x="352.00" y="345.40" width="1.60" height="0.80" fill="#e8e8e8" />
<rect x="309.00" y="350.40" width="7.80" height="4.40" fill="#090b0e" />
<path d="M312 354.8 L315.6 351.6 L316.8 352 V354.8 Z" fill="#0d5a6a" opacity="0.9"/>
<rect x="319.00" y="350.40" width="7.80" height="4.40" fill="#090b0e" />
<rect x="321.80" y="352.30" width="2.60" height="0.70" fill="#d8d8d8" />
<rect x="329.20" y="350.60" width="7.00" height="4.20" fill="#5a5040" />
<rect x="329.20" y="350.60" width="2.40" height="2.40" fill="#c8ccd0" />
<rect x="333.40" y="351.00" width="2.20" height="3.00" fill="#a08a4a" />
<rect x="339.80" y="350.40" width="6.00" height="4.40" fill="#0b0c0f" />
<rect x="349.80" y="350.40" width="6.00" height="4.40" fill="#0b0c0f" />
<path d="M310.0 341.80 H315.2" stroke="#b9bdc1" stroke-width="0.45" opacity="1" fill="none"/>
<path d="M309.6 349.00 H315.6" stroke="#b9bdc1" stroke-width="0.45" opacity="1" fill="none"/>
<path d="M309.6 356.20 H315.6" stroke="#b9bdc1" stroke-width="0.45" opacity="1" fill="none"/>
<path d="M320.3 341.80 H325.5" stroke="#b9bdc1" stroke-width="0.45" opacity="1" fill="none"/>
<path d="M319.9 349.00 H325.9" stroke="#b9bdc1" stroke-width="0.45" opacity="1" fill="none"/>
<path d="M319.9 356.20 H325.9" stroke="#b9bdc1" stroke-width="0.45" opacity="1" fill="none"/>
<path d="M330.4 341.80 H335.6" stroke="#b9bdc1" stroke-width="0.45" opacity="1" fill="none"/>
<path d="M330.0 349.00 H336.0" stroke="#b9bdc1" stroke-width="0.45" opacity="1" fill="none"/>
<path d="M330.0 356.20 H336.0" stroke="#b9bdc1" stroke-width="0.45" opacity="1" fill="none"/>
<path d="M340.4 341.80 H345.6" stroke="#b9bdc1" stroke-width="0.45" opacity="1" fill="none"/>
<path d="M340.0 349.00 H346.0" stroke="#b9bdc1" stroke-width="0.45" opacity="1" fill="none"/>
<path d="M340.0 356.20 H346.0" stroke="#b9bdc1" stroke-width="0.45" opacity="1" fill="none"/>
<path d="M350.4 341.80 H355.6" stroke="#b9bdc1" stroke-width="0.45" opacity="1" fill="none"/>
<path d="M350.0 349.00 H356.0" stroke="#b9bdc1" stroke-width="0.45" opacity="1" fill="none"/>
<path d="M350.0 356.20 H356.0" stroke="#b9bdc1" stroke-width="0.45" opacity="1" fill="none"/>
<path d="M312.0 357.60 H313.0" stroke="#7f858a" stroke-width="0.5" opacity="1" fill="none"/>
<path d="M342.6 357.60 H343.6" stroke="#7f858a" stroke-width="0.5" opacity="1" fill="none"/>
<path d="M325.4 356.40 H326.4" stroke="#3a3f45" stroke-width="0.6" opacity="1" fill="none"/>
<rect x="359.80" y="332.60" width="13.00" height="41.80" fill="#f4f5f6" />
<rect x="360.00" y="336.80" width="12.20" height="6.90" fill="#1a1d1a" />
<rect x="361.40" y="338.60" width="9.20" height="3.00" fill="#3a5a2a" />
<rect x="368.40" y="339.20" width="1.20" height="1.60" fill="#c8d8c0" />
<path d="M364.0 348.40 H368.0" stroke="#3a3f45" stroke-width="0.7" opacity="0.85" fill="none"/>
<path d="M364.4 350.40 H366.4" stroke="#9a9fa4" stroke-width="0.5" opacity="1" fill="none"/>
<path d="M367.0 350.40 H371.2" stroke="#aab0b5" stroke-width="0.5" opacity="1" fill="none"/>
<path d="M364.4 351.90 H366.4" stroke="#9a9fa4" stroke-width="0.5" opacity="1" fill="none"/>
<path d="M367.0 351.90 H369.6" stroke="#aab0b5" stroke-width="0.5" opacity="1" fill="none"/>
<path d="M364.4 353.40 H366.4" stroke="#9a9fa4" stroke-width="0.5" opacity="1" fill="none"/>
<path d="M367.0 353.40 H371.2" stroke="#8ab8e0" stroke-width="0.5" opacity="1" fill="none"/>
<path d="M364.4 354.90 H366.4" stroke="#9a9fa4" stroke-width="0.5" opacity="1" fill="none"/>
<path d="M367.0 354.90 H369.6" stroke="#8ab8e0" stroke-width="0.5" opacity="1" fill="none"/>
<path d="M364.4 356.40 H366.4" stroke="#9a9fa4" stroke-width="0.5" opacity="1" fill="none"/>
<path d="M367.0 356.40 H371.2" stroke="#aab0b5" stroke-width="0.5" opacity="1" fill="none"/>
<path d="M364.4 357.90 H366.4" stroke="#9a9fa4" stroke-width="0.5" opacity="1" fill="none"/>
<path d="M367.0 357.90 H369.6" stroke="#aab0b5" stroke-width="0.5" opacity="1" fill="none"/>
<path d="M364.4 359.40 H366.4" stroke="#9a9fa4" stroke-width="0.5" opacity="1" fill="none"/>
<path d="M367.0 359.40 H371.2" stroke="#aab0b5" stroke-width="0.5" opacity="1" fill="none"/>
<path d="M364.4 360.90 H366.4" stroke="#9a9fa4" stroke-width="0.5" opacity="1" fill="none"/>
<path d="M367.0 360.90 H369.6" stroke="#aab0b5" stroke-width="0.5" opacity="1" fill="none"/>
<path d="M364.4 362.40 H366.4" stroke="#9a9fa4" stroke-width="0.5" opacity="1" fill="none"/>
<path d="M367.0 362.40 H371.2" stroke="#aab0b5" stroke-width="0.5" opacity="1" fill="none"/>
<path d="M364.4 363.90 H366.4" stroke="#9a9fa4" stroke-width="0.5" opacity="1" fill="none"/>
<path d="M367.0 363.90 H369.6" stroke="#aab0b5" stroke-width="0.5" opacity="1" fill="none"/>
<path d="M364.4 365.40 H366.4" stroke="#9a9fa4" stroke-width="0.5" opacity="1" fill="none"/>
<path d="M367.0 365.40 H371.2" stroke="#8ab8e0" stroke-width="0.5" opacity="1" fill="none"/>
<path d="M364.4 366.90 H366.4" stroke="#9a9fa4" stroke-width="0.5" opacity="1" fill="none"/>
<path d="M367.0 366.90 H369.6" stroke="#8ab8e0" stroke-width="0.5" opacity="1" fill="none"/>
<path d="M364.4 368.40 H366.4" stroke="#9a9fa4" stroke-width="0.5" opacity="1" fill="none"/>
<path d="M367.0 368.40 H371.2" stroke="#aab0b5" stroke-width="0.5" opacity="1" fill="none"/>
<path d="M364.4 369.90 H366.4" stroke="#9a9fa4" stroke-width="0.5" opacity="1" fill="none"/>
<path d="M367.0 369.90 H369.6" stroke="#aab0b5" stroke-width="0.5" opacity="1" fill="none"/>
<rect x="293.40" y="373.40" width="79.40" height="1.40" fill="#f1f2f3" />
<path d="M308.0 374.00 H314.4" stroke="#b4b8bc" stroke-width="0.5" opacity="1" fill="none"/>
<rect x="329.20" y="373.50" width="3.00" height="1.10" fill="#a8d4f4" />
<rect x="344.20" y="373.50" width="5.40" height="1.10" fill="#a8d4f4" />
<rect x="378.70" y="329.80" width="85.80" height="48.30" fill="#262626" opacity="0.5" rx="1"/>
<rect x="379.20" y="330.20" width="84.80" height="47.20" fill="#1c1c1c" opacity="0.7" rx="0.4"/>
<rect x="379.60" y="330.50" width="83.60" height="45.80" fill="#fbfbfb" />
<rect x="379.60" y="330.50" width="83.60" height="1.30" fill="#46525a" />
<rect x="380.20" y="331.60" width="82.40" height="4.60" fill="#fbfbfb" />
<path d="M381.0 332.80 H385.6" stroke="#aab0b5" stroke-width="0.5" opacity="1" fill="none"/>
<rect x="420.00" y="332.00" width="6.00" height="0.50" fill="#c4c8cc" />
<rect x="458.00" y="332.40" width="3.60" height="0.80" fill="#9ad0f0" />
<rect x="380.40" y="336.20" width="81.80" height="38.50" fill="#000000" />
<rect x="386.20" y="336.40" width="69.80" height="38.00" fill="#84cbd6" />
<rect x="386.20" y="336.40" width="69.80" height="11.60" fill="#162f9c" />
<path d="M386.2 346 L447 338.6 L456.0 341.4 V352 L386.2 356 Z" fill="#45524f" />
<path d="M389 356.2 L453.6 352.2 V345 L447 338.6 L386.2 346 V357 Z" fill="#3f4b49" />
<path d="M386.2 347 L389.4 346.4 V372 H386.2 Z" fill="#cfd6da" />
<path d="M388.4 356.6 L453.6 351.6 V355.6 L388.4 359.4 Z" fill="#56625f" />
<rect x="386.20" y="336.40" width="1.40" height="1.00" fill="#d02a2a" />
<rect x="392.40" y="340.40" width="11.20" height="1.40" fill="#e06a14" />
<path d="M389.4 359.6 L453.6 355.6 V366 H389.4 Z" fill="#86ccd8" />
<path d="M391.0 360.40 H400.0" stroke="#e4f2f6" stroke-width="0.8" opacity="0.8" fill="none"/>
<path d="M418.0 358.40 H438.0" stroke="#e4f2f6" stroke-width="0.9" opacity="0.75" fill="none"/>
<path d="M389.4 366.4 C392 362 396 362.4 399.4 366.4 Z" fill="#7aa6c0" opacity="0.8"/>
<rect x="401.60" y="355.60" width="14.40" height="13.00" fill="#4d5a5c" rx="1"/>
<rect x="389.40" y="365.80" width="65.20" height="3.80" fill="#68b840" />
<path d="M386.2 369.4 H456 V374.4 H386.2 Z" fill="#6b7c7c" />
<path d="M444 369.4 L456 366.4 V374.4 H440 Z" fill="#8a9a98" opacity="0.7"/>
<rect x="393.40" y="374.00" width="9.60" height="0.60" fill="#c8c832" />
<path d="M424 366.8 V356.4 C425.4 353.4 427 353.4 428.2 356.4 V366.8 Z" fill="#3c8450" />
<rect x="425.80" y="364.00" width="0.80" height="5.00" fill="#5a4a3a" />
<ellipse cx="447.6" cy="357.4" rx="3.0" ry="4.4" fill="#3a7a4c"/>
<rect x="447.20" y="361.00" width="0.80" height="5.00" fill="#4a4a3a" />
<ellipse cx="454" cy="362" rx="1.4" ry="2" fill="#3a7a4c"/>
<ellipse cx="407.2" cy="362.6" rx="4.2" ry="3.4" fill="#d99a68"/>
<rect x="406.00" y="365.40" width="2.60" height="4.00" fill="#e8a0a8" />
<ellipse cx="420.8" cy="363.4" rx="3.6" ry="3.4" fill="#f2e6da"/>
<ellipse cx="420.8" cy="361.4" rx="3.4" ry="1.6" fill="#b8602a"/>
<rect x="418.40" y="366.80" width="5.00" height="1.80" fill="#e0701a" />
<ellipse cx="433.4" cy="362.6" rx="4.0" ry="3.6" fill="#5a302a"/>
<rect x="431.80" y="365.80" width="3.40" height="3.20" fill="#2a2a2e" />
<rect x="432.60" y="366.60" width="1.80" height="1.40" fill="#e08a2a" />
<ellipse cx="443.4" cy="364.6" rx="2.0" ry="2.6" fill="#3a3f4a"/>
<rect x="379.90" y="374.80" width="83.00" height="1.40" fill="#fdfdfd" />
<rect x="468.50" y="325.10" width="81.40" height="50.50" fill="#262626" opacity="0.5" rx="1"/>
<rect x="469.00" y="325.50" width="80.40" height="49.40" fill="#1c1c1c" opacity="0.7" rx="0.4"/>
<rect x="469.40" y="325.80" width="79.20" height="48.00" fill="#fdfdfd" />
<rect x="469.40" y="325.80" width="79.20" height="3.10" fill="#3c454d" />
<rect x="470.20" y="326.40" width="1.60" height="1.80" fill="#7ac0a0" />
<rect x="505.00" y="327.00" width="9.00" height="0.70" fill="#9aa1a6" />
<rect x="545.40" y="326.40" width="2.00" height="2.00" fill="#e8ebed" />
<rect x="540.00" y="327.00" width="3.00" height="0.70" fill="#9aa1a6" />
<path d="M471.6 331.20 H474.6" stroke="#7f858a" stroke-width="0.6" opacity="0.9" fill="none"/>
<path d="M477.4 331.20 H481.0" stroke="#7f858a" stroke-width="0.6" opacity="0.9" fill="none"/>
<path d="M483.6 331.20 H485.6" stroke="#7f858a" stroke-width="0.6" opacity="0.9" fill="none"/>
<path d="M488.0 331.20 H493.6" stroke="#7f858a" stroke-width="0.6" opacity="0.9" fill="none"/>
<path d="M496.4 331.20 H500.0" stroke="#7f858a" stroke-width="0.6" opacity="0.9" fill="none"/>
<rect x="470.20" y="333.00" width="77.60" height="4.60" fill="#f0f1f2" />
<rect x="471.60" y="334.20" width="1.60" height="2.20" fill="#6f757b" />
<path d="M474.4 335.40 H478.0" stroke="#6f757b" stroke-width="0.6" opacity="1" fill="none"/>
<rect x="482.40" y="334.60" width="1.20" height="1.60" fill="#5a5f64" />
<path d="M485.0 335.40 H488.0" stroke="#5a5f64" stroke-width="0.6" opacity="1" fill="none"/>
<path d="M491.6 335.40 H499.0" stroke="#c4c8cc" stroke-width="0.6" opacity="1" fill="none"/>
<path d="M502.0 335.40 H506.0" stroke="#c4c8cc" stroke-width="0.6" opacity="1" fill="none"/>
<rect x="510.60" y="334.40" width="1.40" height="2.00" fill="#5a5f64" />
<path d="M513.0 335.40 H517.6" stroke="#5a5f64" stroke-width="0.6" opacity="1" fill="none"/>
<path d="M521.0 335.40 H527.0" stroke="#c9cdd0" stroke-width="0.6" opacity="1" fill="none"/>
<ellipse cx="535.6" cy="335.4" rx="1.5" ry="1.0" fill="#1f2226"/>
<rect x="541.60" y="334.60" width="1.00" height="1.60" fill="#7f858a" />
<path d="M544.0 335.40 H546.0" stroke="#7f858a" stroke-width="0.6" opacity="1" fill="none"/>
<rect x="470.40" y="338.20" width="77.20" height="34.40" fill="#ffffff" stroke="#cfe6f6" stroke-width="0.5"/>
<path d="M511.58 350.14 A5.2 5.2 0 1 0 506.82 359.29 L508.12 355.72 A1.4 1.4 0 1 1 509.40 353.25 Z" fill="#f2ee3c" opacity="1"/>
<path d="M506.82 359.29 A5.2 5.2 0 0 0 512.58 357.74 L509.67 355.30 A1.4 1.4 0 0 1 508.12 355.72 Z" fill="#a03ad8" opacity="1"/>
<path d="M512.43 357.61 A5.0 5.0 0 0 0 513.60 354.40 L510.00 354.40 A1.4 1.4 0 0 1 509.67 355.30 Z" fill="#e83ac8" opacity="1"/>
<path d="M513.60 354.40 A5.0 5.0 0 0 0 511.47 350.30 L509.40 353.25 A1.4 1.4 0 0 1 510.00 354.40 Z" fill="#e8842a" opacity="1"/>
<path d="M513.29 345.57 A10.0 10.0 0 0 0 499.94 349.40 L504.10 351.80 A5.2 5.2 0 0 1 511.04 349.81 Z" fill="#6fdc2a" opacity="1"/>
<path d="M501.15 350.10 A8.6 8.6 0 0 0 500.01 354.10 L503.40 354.22 A5.2 5.2 0 0 1 504.10 351.80 Z" fill="#3fcc4a" opacity="0.9"/>
<path d="M512.80 341.47 A13.6 13.6 0 0 0 510.02 340.87 L509.65 344.45 A10.0 10.0 0 0 1 511.69 344.89 Z" fill="#58c828" opacity="1"/>
<path d="M508.09 339.81 A14.6 14.6 0 0 0 505.07 340.23 L506.18 344.70 A10.0 10.0 0 0 1 508.25 344.41 Z" fill="#3aa830" opacity="1"/>
<path d="M505.07 342.10 A12.8 12.8 0 0 0 502.99 342.90 L504.22 345.41 A10.0 10.0 0 0 1 505.84 344.79 Z" fill="#68d030" opacity="1"/>
<path d="M515.08 342.22 A13.8 13.8 0 0 0 513.32 341.43 L512.02 345.00 A10.0 10.0 0 0 1 513.29 345.57 Z" fill="#8ae040" opacity="1"/>
<path d="M519.76 346.29 A13.8 13.8 0 0 0 517.83 344.14 L512.08 350.54 A5.2 5.2 0 0 1 512.81 351.34 Z" fill="#e89a2a" opacity="1"/>
<path d="M522.67 348.14 A15.4 15.4 0 0 0 521.21 345.57 L512.86 351.42 A5.2 5.2 0 0 1 513.35 352.28 Z" fill="#e8742a" opacity="1"/>
<path d="M524.31 352.75 A15.8 15.8 0 0 0 523.45 349.00 L513.49 352.62 A5.2 5.2 0 0 1 513.77 353.86 Z" fill="#d8281a" opacity="1"/>
<path d="M514.62 347.71 A9.0 9.0 0 0 0 513.10 346.61 L511.20 349.90 A5.2 5.2 0 0 1 512.08 350.54 Z" fill="#e8c02a" opacity="1"/>
<path d="M516.36 363.02 A11.6 11.6 0 0 0 520.17 355.21 L513.79 354.76 A5.2 5.2 0 0 1 512.08 358.26 Z" fill="#e83ab8" opacity="1"/>
<path d="M520.54 362.45 A14.4 14.4 0 0 0 521.95 359.79 L519.36 358.75 A11.6 11.6 0 0 1 518.22 360.89 Z" fill="#c83aa0" opacity="1"/>
<path d="M506.76 364.84 A10.6 10.6 0 0 0 515.41 362.52 L511.94 358.38 A5.2 5.2 0 0 1 507.70 359.52 Z" fill="#9a3ae0" opacity="1"/>
<path d="M503.21 362.10 A9.4 9.4 0 0 0 506.97 363.66 L507.70 359.52 A5.2 5.2 0 0 1 505.62 358.66 Z" fill="#b04ae8" opacity="0.9"/>
<path d="M498.40 354.40 A10.2 10.2 0 0 0 502.75 362.76 L505.62 358.66 A5.2 5.2 0 0 1 503.40 354.40 Z" fill="#2ac8e8" opacity="1"/>
<path d="M496.01 354.84 A12.6 12.6 0 0 0 496.76 358.71 L499.02 357.89 A10.2 10.2 0 0 1 498.41 354.76 Z" fill="#2ab0c8" opacity="0.9"/>
<path d="M499.24 362.83 A12.6 12.6 0 0 0 501.19 364.59 L504.25 360.39 A7.4 7.4 0 0 1 503.10 359.35 Z" fill="#2a4ad0" opacity="1"/>
<path d="M496.77 360.69 A13.4 13.4 0 0 0 498.34 363.01 L502.93 359.16 A7.4 7.4 0 0 1 502.07 357.87 Z" fill="#4a6ae0" opacity="0.9"/>
<path d="M476.0 350.20 H496.0" stroke="#b4b8bc" stroke-width="0.45" opacity="1" fill="none"/>
<path d="M472.6 350.20 H475.0" stroke="#7f858a" stroke-width="0.5" opacity="1" fill="none"/>
<path d="M520.0 346.60 H542.0" stroke="#b4b8bc" stroke-width="0.45" opacity="1" fill="none"/>
<path d="M542.6 346.60 H545.0" stroke="#5a5f64" stroke-width="0.6" opacity="1" fill="none"/>
<path d="M524.0 352.20 H540.0" stroke="#b4b8bc" stroke-width="0.45" opacity="1" fill="none"/>
<path d="M540.6 352.20 H545.0" stroke="#7f858a" stroke-width="0.55" opacity="1" fill="none"/>
<path d="M520.0 361.00 H542.0" stroke="#b4b8bc" stroke-width="0.45" opacity="1" fill="none"/>
<path d="M542.6 361.00 H545.0" stroke="#7f858a" stroke-width="0.55" opacity="1" fill="none"/>
<path d="M517.0 366.60 H539.0" stroke="#b4b8bc" stroke-width="0.45" opacity="1" fill="none"/>
<path d="M540.0 366.60 H545.0" stroke="#7f858a" stroke-width="0.55" opacity="1" fill="none"/>
<rect x="470.60" y="370.00" width="76.80" height="0.60" fill="#cfe6f6" />
<path d="M538.0 371.80 H546.0" stroke="#8f9499" stroke-width="0.5" opacity="1" fill="none"/>
<rect x="554.50" y="329.80" width="85.60" height="48.30" fill="#262626" opacity="0.5" rx="1"/>
<rect x="555.00" y="330.20" width="84.60" height="47.20" fill="#1c1c1c" opacity="0.7" rx="0.4"/>
<rect x="555.40" y="330.50" width="83.40" height="45.80" fill="#fdfdfd" />
<rect x="555.40" y="330.50" width="83.40" height="1.20" fill="#4c555d" />
<rect x="556.00" y="331.70" width="82.20" height="3.50" fill="#f4f5f6" />
<rect x="557.40" y="333.00" width="1.10" height="1.20" fill="#8f9499" opacity="0.8"/>
<rect x="559.70" y="333.00" width="1.10" height="1.20" fill="#8f9499" opacity="0.8"/>
<rect x="562.00" y="333.00" width="1.10" height="1.20" fill="#8f9499" opacity="0.8"/>
<rect x="564.30" y="333.00" width="1.10" height="1.20" fill="#8f9499" opacity="0.8"/>
<rect x="566.60" y="333.00" width="1.10" height="1.20" fill="#8f9499" opacity="0.8"/>
<rect x="568.90" y="333.00" width="1.10" height="1.20" fill="#8f9499" opacity="0.8"/>
<rect x="571.20" y="333.00" width="1.10" height="1.20" fill="#8f9499" opacity="0.8"/>
<rect x="573.50" y="333.00" width="1.10" height="1.20" fill="#8f9499" opacity="0.8"/>
<rect x="575.80" y="333.00" width="1.10" height="1.20" fill="#8f9499" opacity="0.8"/>
<rect x="578.10" y="333.00" width="1.10" height="1.20" fill="#8f9499" opacity="0.8"/>
<rect x="580.40" y="333.00" width="1.10" height="1.20" fill="#8f9499" opacity="0.8"/>
<rect x="582.70" y="333.00" width="1.10" height="1.20" fill="#8f9499" opacity="0.8"/>
<rect x="585.00" y="333.00" width="1.10" height="1.20" fill="#8f9499" opacity="0.8"/>
<rect x="587.30" y="333.00" width="1.10" height="1.20" fill="#8f9499" opacity="0.8"/>
<rect x="589.60" y="333.00" width="1.10" height="1.20" fill="#8f9499" opacity="0.8"/>
<path d="M557.0 332.30 H566.0" stroke="#b4b8bc" stroke-width="0.4" opacity="1" fill="none"/>
<rect x="556.00" y="335.20" width="9.40" height="39.60" fill="#f1f2f3" />
<rect x="556.80" y="336.40" width="7.80" height="2.00" fill="#ffffff" stroke="#c4c8cc" stroke-width="0.3"/>
<path d="M557.2 341.40 H563.6" stroke="#9a9fa4" stroke-width="0.5" opacity="1" fill="none"/>
<rect x="558.20" y="343.40" width="5.60" height="5.60" fill="#e6e8ea" />
<path d="M558.8 344.20 H563.2 M558.8 345.30 H563.2 M558.8 346.40 H563.2 M558.8 347.50 H563.2 M558.8 348.60 H563.2" stroke="#9a9fa4" stroke-width="0.4" opacity="1" fill="none"/>
<rect x="560.40" y="351.60" width="1.20" height="1.60" fill="#8fc8ee" />
<path d="M559.0 355.00 H563.0 M559.0 356.40 H563.0 M559.0 357.80 H563.0 M559.0 359.20 H563.0 M559.0 360.60 H563.0 M559.0 362.00 H563.0 M559.0 363.40 H563.0" stroke="#c4c8cc" stroke-width="0.45" opacity="1" fill="none"/>
<rect x="556.20" y="365.60" width="9.00" height="1.40" fill="#a8d4f4" />
<path d="M557.4 371.60 H563.6 M557.4 373.00 H563.6" stroke="#c4c8cc" stroke-width="0.45" opacity="1" fill="none"/>
<rect x="565.60" y="335.40" width="59.60" height="39.40" fill="#ffffff" />
<rect x="625.20" y="335.40" width="1.00" height="39.40" fill="#7fbce6" />
<rect x="626.60" y="335.40" width="11.60" height="39.40" fill="#f4f5f6" />
<path d="M628.0 337.20 H636.6" stroke="#7f858a" stroke-width="0.5" opacity="1" fill="none"/>
<path d="M628.0 339.20 H636.6 M628.0 340.40 H636.6 M628.0 341.60 H636.6" stroke="#b4b8bc" stroke-width="0.45" opacity="1" fill="none"/>
<rect x="627.40" y="343.60" width="3.60" height="2.80" fill="#e6e8ea" />
<rect x="633.40" y="343.60" width="3.60" height="2.80" fill="#e6e8ea" />
<path d="M627.4 348.40 H637.4" stroke="#c4c8cc" stroke-width="0.5" opacity="1" fill="none"/>
<rect x="628.00" y="350.20" width="4.40" height="1.00" fill="#5a5f64" />
<rect x="628.40" y="352.20" width="8.00" height="5.40" fill="#eceded" />
<path d="M630.6 354.40 H634.6" stroke="#b4b8bc" stroke-width="0.5" opacity="1" fill="none"/>
<rect x="627.20" y="359.80" width="10.40" height="1.20" fill="#9a9fa4" />
<rect x="627.60" y="361.20" width="9.60" height="12.40" fill="#fbfbfb" />
<rect x="633.40" y="373.80" width="4.00" height="1.00" fill="#a8d4f4" />
<path d="M588.4 350.6 V348.2 H591.6 M596.4 348.2 H602.0 V362.0 H597.4 M591.6 362.0 L589.4 362.0 Q587.6 361.6 587.4 359.6" fill="none" stroke="#6f757b" stroke-width="0.5"/>
<rect x="586.40" y="352.00" width="2.20" height="7.60" fill="#ffffff" stroke="#6f757b" stroke-width="0.5" rx="0.6"/>
<rect x="591.20" y="347.00" width="1.00" height="4.60" fill="#1f2226" />
<path d="M592.8 347.4 L595.4 349.3 L592.8 351.2 Z" fill="#ffffff" stroke="#3a3f45" stroke-width="0.4"/>
<path d="M595.6 347.2 V351.4" stroke="#3a3f45" stroke-width="0.5"/>
<circle cx="593.6" cy="362.0" r="1.9" fill="#ffffff" stroke="#6f757b" stroke-width="0.5"/>
<path d="M592.4 360.8 L594.8 363.2 M594.8 360.8 L592.4 363.2" stroke="#8f9499" stroke-width="0.35"/>
<rect x="598.00" y="361.40" width="2.60" height="1.20" fill="#4a4f55" />
<path d="M587.6 346.60 H589.6" stroke="#a8b8e0" stroke-width="0.45" opacity="1" fill="none"/>
<path d="M598.6 346.60 H600.6" stroke="#a8b8e0" stroke-width="0.45" opacity="1" fill="none"/>
<rect x="694.10" y="97.30" width="1.70" height="28.20" fill="#41a8e0" rx="0.8"/>
</g></svg>
<span class="t" style="left:232.80px;top:155.00px;font-size:8.4px;letter-spacing:-0.211px;color:#f4f4f4;text-shadow:0 0.6px 0.8px rgba(0,0,0,.55);">resized</span>
<span class="t" style="left:307.00px;top:155.00px;font-size:8.4px;letter-spacing:-0.071px;color:#f4f4f4;text-shadow:0 0.6px 0.8px rgba(0,0,0,.55);">1024x768.png</span>
<span class="t" style="left:394.70px;top:155.00px;font-size:8.4px;letter-spacing:0.094px;color:#f4f4f4;text-shadow:0 0.6px 0.8px rgba(0,0,0,.55);">akregator.png</span>
<span class="t" style="left:485.80px;top:155.00px;font-size:8.4px;letter-spacing:0.104px;color:#f4f4f4;text-shadow:0 0.6px 0.8px rgba(0,0,0,.55);">amarok.png</span>
<span class="t" style="left:577.80px;top:155.00px;font-size:8.4px;letter-spacing:0.070px;color:#f4f4f4;text-shadow:0 0.6px 0.8px rgba(0,0,0,.55);">apper.png</span>
<span class="t" style="left:230.80px;top:230.00px;font-size:8.4px;letter-spacing:0.126px;color:#f4f4f4;text-shadow:0 0.6px 0.8px rgba(0,0,0,.55);">ark.png</span>
<span class="t" style="left:306.70px;top:230.00px;font-size:8.4px;letter-spacing:0.126px;color:#f4f4f4;text-shadow:0 0.6px 0.8px rgba(0,0,0,.55);">artikulate.png</span>
<span class="t" style="left:398.70px;top:230.00px;font-size:8.4px;letter-spacing:0.139px;color:#f4f4f4;text-shadow:0 0.6px 0.8px rgba(0,0,0,.55);">blinken.png</span>
<span class="t" style="left:488.00px;top:230.00px;font-size:8.4px;letter-spacing:0.151px;color:#f4f4f4;text-shadow:0 0.6px 0.8px rgba(0,0,0,.55);">blogilo.png</span>
<span class="t" style="left:574.00px;top:230.00px;font-size:8.4px;letter-spacing:0.183px;color:#f4f4f4;text-shadow:0 0.6px 0.8px rgba(0,0,0,.55);">bomber.png</span>
<span class="t" style="left:227.70px;top:305.00px;font-size:8.4px;letter-spacing:0.029px;color:#f4f4f4;text-shadow:0 0.6px 0.8px rgba(0,0,0,.55);">bovo.png</span>
<span class="t" style="left:312.70px;top:305.00px;font-size:8.4px;letter-spacing:0.137px;color:#f4f4f4;text-shadow:0 0.6px 0.8px rgba(0,0,0,.55);">cantor.png</span>
<span class="t" style="left:398.70px;top:305.00px;font-size:8.4px;letter-spacing:-0.027px;color:#f4f4f4;text-shadow:0 0.6px 0.8px rgba(0,0,0,.55);">cervisia.png</span>
<span class="t" style="left:486.70px;top:305.00px;font-size:8.4px;letter-spacing:0.106px;color:#f4f4f4;text-shadow:0 0.6px 0.8px rgba(0,0,0,.55);">choqok.png</span>
<span class="t" style="left:570.90px;top:305.00px;font-size:8.4px;letter-spacing:0.143px;color:#f4f4f4;text-shadow:0 0.6px 0.8px rgba(0,0,0,.55);">cuttlefish.png</span>
<div class="a" style="left:201px;top:376px;width:500px;height:6px;overflow:hidden;">
<span class="t" style="left:20.70px;top:3.00px;font-size:8.4px;letter-spacing:0.155px;color:#dcdcdc;">digikam.png</span>
<span class="t" style="left:109.50px;top:3.00px;font-size:8.4px;letter-spacing:0.142px;color:#dcdcdc;">dolphin.png</span>
<span class="t" style="left:187.70px;top:3.00px;font-size:8.4px;letter-spacing:0.005px;color:#dcdcdc;">dragonplayer.png</span>
<span class="t" style="left:286.00px;top:3.00px;font-size:8.4px;letter-spacing:0.116px;color:#dcdcdc;">filelight.png</span>
<span class="t" style="left:379.75px;top:3.00px;font-size:8.4px;letter-spacing:0.209px;color:#dcdcdc;">flow.png</span>
</div>
</body></html>
